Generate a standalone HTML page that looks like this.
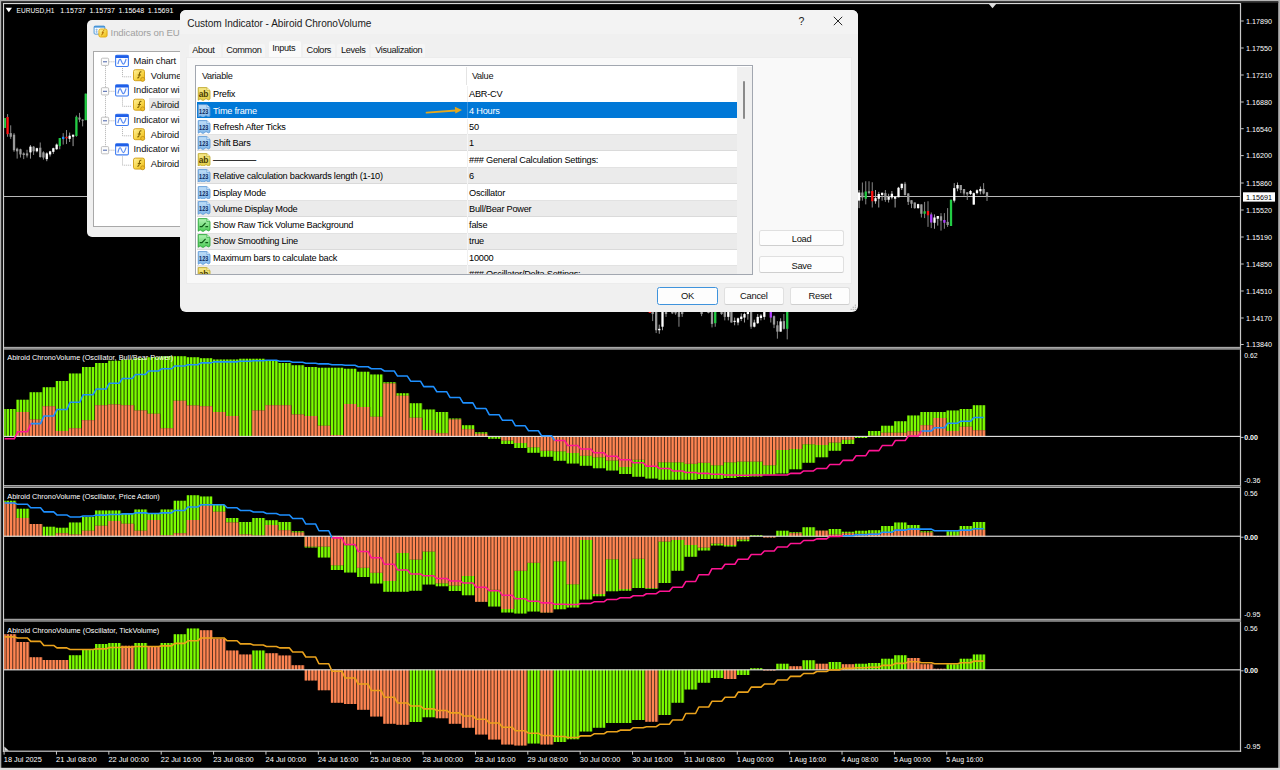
<!DOCTYPE html><html><head><meta charset="utf-8"><title>Abiroid ChronoVolume</title>
<style>
html,body{margin:0;padding:0;background:#000;}
body{width:1280px;height:770px;overflow:hidden;position:relative;font-family:"Liberation Sans", "DejaVu Sans", sans-serif;}
svg text{font-family:"Liberation Sans", "DejaVu Sans", sans-serif;}
.dlg{position:absolute;background:#f0f0f0;overflow:hidden;color:#000;}
.abs{position:absolute;}
.t{position:absolute;white-space:pre;line-height:1;}
#d1{left:87px;top:19.8px;width:120px;height:217px;border-radius:5px 0 0 5px;}
#d1 .ttl{left:23.6px;top:8.6px;font-size:9.6px;letter-spacing:-0.12px;color:#a0a0a0;}
#d1 .tree{left:6px;top:31.6px;width:130px;height:176px;background:#fff;border:1px solid #a9a9a9;box-sizing:border-box;}
#d1 .tr{font-size:9.4px;letter-spacing:-0.13px;color:#111;}
#d2{left:180px;top:9.8px;width:677.9px;height:302px;border-radius:6px;}
#d2 .tbar{left:0;top:0;width:100%;height:24.2px;background:#f3f3f3;}
#d2 .ttl{left:7.2px;top:9.3px;font-size:10.1px;letter-spacing:-0.04px;color:#1a1a1a;}
#d2 .tab{background:#f5f5f5;top:34px;height:14px;border-radius:2px 2px 0 0;}
#d2 .tabt{font-size:9.2px;letter-spacing:-0.34px;color:#111;top:34.8px;}
#d2 .page{left:6.3px;top:47.4px;width:665.6px;height:227.2px;background:#f9f9f9;border:1px solid #ececec;box-sizing:border-box;}
#d2 .list{left:15.3px;top:55.5px;width:557.5px;height:210.2px;background:#fff;border:1px solid #a2a7b0;box-sizing:border-box;overflow:hidden;}
#d2 .row{position:absolute;left:1px;width:539.6px;height:16.36px;}
#d2 .row.g{background:#ebebeb;margin-top:-0.5px;height:16.9px;}
#d2 .row.s{background:#0078d7;color:#fff;height:15.5px;}
#d2 .row .t{font-size:9.2px;letter-spacing:-0.24px;top:4.7px;}
#d2 .hd{font-size:9.2px;letter-spacing:-0.3px;top:5.6px;color:#111;}
#d2 .sb{left:540.6px;top:0.5px;width:15px;height:208px;background:#f0f0f0;}
#d2 .btn{position:absolute;background:#fdfdfd;border:1px solid #e0e0e0;border-bottom-color:#cfcfcf;border-radius:2.5px;box-sizing:border-box;font-size:9.4px;letter-spacing:-0.3px;text-align:center;color:#111;}
#d2 .btn span{position:absolute;left:0;right:0;top:3.2px;line-height:1;}
.ic{position:absolute;left:-0.4px;top:1.6px;width:13.6px;height:13.6px;}

</style></head><body>
<svg width="1280" height="770" viewBox="0 0 1280 770" style="position:absolute;left:0;top:0">
<defs>
<clipPath id="c1"><rect x="4.2" y="349" width="1236" height="136"/></clipPath>
<clipPath id="c2"><rect x="4.2" y="488" width="1236" height="131"/></clipPath>
<clipPath id="c3"><rect x="4.2" y="622" width="1236" height="129"/></clipPath>
<clipPath id="c0"><rect x="4.2" y="4" width="1236" height="343"/></clipPath>
</defs>
<rect width="1280" height="770" fill="#000"/>
<rect x="0" y="0" width="1280" height="1.4" fill="#b4b4b4"/>
<rect x="0" y="0" width="1.3" height="770" fill="#b0b0b0"/>
<rect x="1278.2" y="0" width="1.8" height="770" fill="#b0b0b0"/>
<rect x="0" y="767.8" width="1280" height="2.2" fill="#dcdcdc"/>
<rect x="1.3" y="1.4" width="1277" height="1.4" fill="#303030"/>
<rect x="2.9" y="3" width="1.2" height="749" fill="#d0d0d0"/>
<rect x="2.9" y="3" width="1238" height="1.1" fill="#d8d8d8"/>
<rect x="1239.9" y="3" width="1.2" height="749" fill="#c8c8c8"/>
<rect x="2.9" y="750.6" width="1238.2" height="1.2" fill="#c8c8c8"/>
<rect x="4" y="346.7" width="1236.5" height="0.3" fill="#505050"/>
<rect x="4" y="347" width="1236.5" height="1" fill="#a8a8a8"/>
<rect x="4" y="348" width="1236.5" height="1" fill="#8c8c8c"/>
<rect x="4" y="349" width="1236.5" height="0.9" fill="#787878"/>
<rect x="4" y="485" width="1236.5" height="1" fill="#a8a8a8"/>
<rect x="4" y="486" width="1236.5" height="1" fill="#6a6a6a"/>
<rect x="4" y="487" width="1236.5" height="1" fill="#b0b0b0"/>
<rect x="4" y="618.6" width="1236.5" height="0.4" fill="#606060"/>
<rect x="4" y="619" width="1236.5" height="1" fill="#a0a0a0"/>
<rect x="4" y="620" width="1236.5" height="1" fill="#808080"/>
<rect x="4" y="621" width="1236.5" height="1" fill="#707070"/>
<rect x="4" y="196" width="1236.5" height="1" fill="#b8b8b8"/>
<g clip-path="url(#c0)">
<path d="M4.89 118.07V127.94" stroke="#8e8e8e" stroke-width="0.95"/>
<rect x="3.74" y="118.07" width="2.3" height="9.88" fill="#22cc44"/>
<path d="M7.59 114.12V136.78" stroke="#8e8e8e" stroke-width="0.95"/>
<rect x="6.44" y="117.03" width="2.3" height="17.15" fill="#ff1010"/>
<path d="M10.71 125.34V138.86" stroke="#8e8e8e" stroke-width="0.95"/>
<rect x="9.56" y="133.14" width="2.3" height="3.64" fill="#9a9a9a"/>
<path d="M14.03 133.14V151.85" stroke="#8e8e8e" stroke-width="0.95"/>
<rect x="12.88" y="134.7" width="2.3" height="15.59" fill="#9a9a9a"/>
<path d="M17.15 147.69V158.61" stroke="#8e8e8e" stroke-width="0.95"/>
<rect x="16" y="148.73" width="2.3" height="2.6" fill="#9a9a9a"/>
<path d="M20.48 148.73V157.57" stroke="#8e8e8e" stroke-width="0.95"/>
<rect x="19.33" y="149.25" width="2.3" height="5.2" fill="#9a9a9a"/>
<path d="M23.7 152.37V159.13" stroke="#8e8e8e" stroke-width="0.95"/>
<rect x="22.55" y="153.41" width="2.3" height="1.56" fill="#9a9a9a"/>
<path d="M27.03 149.77V157.57" stroke="#8e8e8e" stroke-width="0.95"/>
<rect x="25.88" y="153.41" width="2.3" height="2.08" fill="#9a9a9a"/>
<path d="M30.46 145.09V158.61" stroke="#a8a8a8" stroke-width="0.95"/>
<rect x="29.31" y="146.65" width="2.3" height="5.72" fill="#ffffff"/>
<path d="M33.58 146.13V154.97" stroke="#8e8e8e" stroke-width="0.95"/>
<rect x="32.43" y="146.65" width="2.3" height="4.68" fill="#9a9a9a"/>
<path d="M36.9 147.69V152.37" stroke="#a8a8a8" stroke-width="0.95"/>
<rect x="35.75" y="148.21" width="2.3" height="3.12" fill="#ffffff"/>
<path d="M40.23 142.49V157.57" stroke="#8e8e8e" stroke-width="0.95"/>
<rect x="39.08" y="147.69" width="2.3" height="9.36" fill="#9a9a9a"/>
<path d="M43.45 151.33V159.65" stroke="#8e8e8e" stroke-width="0.95"/>
<rect x="42.3" y="152.37" width="2.3" height="5.2" fill="#9a9a9a"/>
<path d="M46.78 152.37V161.21" stroke="#a8a8a8" stroke-width="0.95"/>
<rect x="45.63" y="153.41" width="2.3" height="5.72" fill="#ffffff"/>
<path d="M50.1 150.81V156.53" stroke="#a8a8a8" stroke-width="0.95"/>
<rect x="48.95" y="151.33" width="2.3" height="3.12" fill="#ffffff"/>
<path d="M53.33 147.69V153.93" stroke="#a8a8a8" stroke-width="0.95"/>
<rect x="52.18" y="148.21" width="2.3" height="3.64" fill="#ffffff"/>
<path d="M56.65 143.53V149.77" stroke="#a8a8a8" stroke-width="0.95"/>
<rect x="55.5" y="144.57" width="2.3" height="4.68" fill="#ffffff"/>
<path d="M59.77 138.02V149.25" stroke="#8e8e8e" stroke-width="0.95"/>
<rect x="58.62" y="138.02" width="2.3" height="8.11" fill="#22cc44"/>
<path d="M63.2 133.14V144.57" stroke="#8e8e8e" stroke-width="0.95"/>
<rect x="62.05" y="136.78" width="2.3" height="2.29" fill="#1e90ff"/>
<path d="M66.53 130.02V144.05" stroke="#8e8e8e" stroke-width="0.95"/>
<rect x="65.38" y="136.78" width="2.3" height="1.56" fill="#ff1010"/>
<path d="M69.65 132.62V141.98" stroke="#a8a8a8" stroke-width="0.95"/>
<rect x="68.5" y="135.74" width="2.3" height="3.12" fill="#ffffff"/>
<path d="M73.08 134.7V146.13" stroke="#a8a8a8" stroke-width="0.95"/>
<rect x="71.93" y="134.7" width="2.3" height="2.08" fill="#ffffff"/>
<path d="M76.4 115.47V136.78" stroke="#8e8e8e" stroke-width="0.95"/>
<rect x="75.25" y="116.82" width="2.3" height="19.13" fill="#22cc44"/>
<path d="M79.52 112.87V122.22" stroke="#8e8e8e" stroke-width="0.95"/>
<rect x="78.37" y="117.55" width="2.3" height="2.08" fill="#9a9a9a"/>
<path d="M82.64 119.11V126.38" stroke="#8e8e8e" stroke-width="0.95"/>
<rect x="81.49" y="119.63" width="2.3" height="1.04" fill="#9a9a9a"/>
<path d="M85.76 93.64V120.15" stroke="#8e8e8e" stroke-width="0.95"/>
<rect x="84.61" y="93.64" width="2.3" height="26.51" fill="#22cc44"/>
<path d="M859.12 190V208.12" stroke="#a8a8a8" stroke-width="0.95"/>
<rect x="857.98" y="192.5" width="2.3" height="8.12" fill="#ffffff"/>
<path d="M862.38 182.5V200.62" stroke="#8e8e8e" stroke-width="0.95"/>
<rect x="861.23" y="192.5" width="2.3" height="5" fill="#9a9a9a"/>
<path d="M865.75 181.25V204.38" stroke="#8e8e8e" stroke-width="0.95"/>
<rect x="864.6" y="191.5" width="2.3" height="7.25" fill="#22cc44"/>
<path d="M869 181.25V194.38" stroke="#8e8e8e" stroke-width="0.95"/>
<rect x="867.85" y="191.25" width="2.3" height="1.88" fill="#9a9a9a"/>
<path d="M872.25 182.25V207.5" stroke="#8e8e8e" stroke-width="0.95"/>
<rect x="871.1" y="191" width="2.3" height="10.25" fill="#ff1010"/>
<path d="M875.5 190V203.75" stroke="#a8a8a8" stroke-width="0.95"/>
<rect x="874.35" y="198.12" width="2.3" height="3.12" fill="#ffffff"/>
<path d="M878.75 191.88V207.5" stroke="#a8a8a8" stroke-width="0.95"/>
<rect x="877.6" y="194" width="2.3" height="4.75" fill="#ffffff"/>
<path d="M882.12 192.75V200.62" stroke="#a8a8a8" stroke-width="0.95"/>
<rect x="880.98" y="192.75" width="2.3" height="2.25" fill="#ffffff"/>
<path d="M885.38 190V201.88" stroke="#8e8e8e" stroke-width="0.95"/>
<rect x="884.23" y="193.12" width="2.3" height="6.88" fill="#9a9a9a"/>
<path d="M888.62 193.75V202.5" stroke="#a8a8a8" stroke-width="0.95"/>
<rect x="887.48" y="196.88" width="2.3" height="2.88" fill="#ffffff"/>
<path d="M891.88 191V199.38" stroke="#a8a8a8" stroke-width="0.95"/>
<rect x="890.73" y="193.75" width="2.3" height="3.75" fill="#ffffff"/>
<path d="M895.12 196.62V207.5" stroke="#a8a8a8" stroke-width="0.95"/>
<rect x="893.98" y="196.62" width="2.3" height="2.12" fill="#ffffff"/>
<path d="M898.5 186.88V197.25" stroke="#a8a8a8" stroke-width="0.95"/>
<rect x="897.35" y="187.75" width="2.3" height="9.5" fill="#ffffff"/>
<path d="M901.75 183.75V190" stroke="#a8a8a8" stroke-width="0.95"/>
<rect x="900.6" y="183.75" width="2.3" height="4.38" fill="#ffffff"/>
<path d="M905 181.88V195.62" stroke="#8e8e8e" stroke-width="0.95"/>
<rect x="903.85" y="183.75" width="2.3" height="11.25" fill="#9a9a9a"/>
<path d="M908.25 193.12V205" stroke="#8e8e8e" stroke-width="0.95"/>
<rect x="907.1" y="193.5" width="2.3" height="8.38" fill="#9a9a9a"/>
<path d="M911.5 200.25V208.12" stroke="#8e8e8e" stroke-width="0.95"/>
<rect x="910.35" y="200.25" width="2.3" height="3.5" fill="#9a9a9a"/>
<path d="M914.75 202.5V208.75" stroke="#8e8e8e" stroke-width="0.95"/>
<rect x="913.6" y="202.5" width="2.3" height="5.62" fill="#9a9a9a"/>
<path d="M918.12 203.75V208.75" stroke="#a8a8a8" stroke-width="0.95"/>
<rect x="916.98" y="204.12" width="2.3" height="4" fill="#ffffff"/>
<path d="M921.38 204.38V217.5" stroke="#8e8e8e" stroke-width="0.95"/>
<rect x="920.23" y="204.38" width="2.3" height="9.38" fill="#9a9a9a"/>
<path d="M924.62 201.88V218.12" stroke="#8e8e8e" stroke-width="0.95"/>
<rect x="923.48" y="211.25" width="2.3" height="2.5" fill="#22cc44"/>
<path d="M928 201.25V226.88" stroke="#8e8e8e" stroke-width="0.95"/>
<rect x="926.85" y="211" width="2.3" height="4.25" fill="#ff1010"/>
<path d="M931.25 212.5V228.12" stroke="#8e8e8e" stroke-width="0.95"/>
<rect x="930.1" y="214.38" width="2.3" height="8.12" fill="#b040ff"/>
<path d="M934.5 214.38V228.75" stroke="#a8a8a8" stroke-width="0.95"/>
<rect x="933.35" y="217.5" width="2.3" height="5.25" fill="#ffffff"/>
<path d="M937.75 216V225.62" stroke="#a8a8a8" stroke-width="0.95"/>
<rect x="936.6" y="216" width="2.3" height="2.75" fill="#ffffff"/>
<path d="M941 213.12V230.62" stroke="#8e8e8e" stroke-width="0.95"/>
<rect x="939.85" y="216.25" width="2.3" height="4.38" fill="#9a9a9a"/>
<path d="M944.38 213.12V228.75" stroke="#8e8e8e" stroke-width="0.95"/>
<rect x="943.23" y="220" width="2.3" height="2.75" fill="#b040ff"/>
<path d="M947.62 208.12V226.88" stroke="#8e8e8e" stroke-width="0.95"/>
<rect x="946.48" y="221.88" width="2.3" height="3.12" fill="#9a9a9a"/>
<path d="M951 199.75V226" stroke="#8e8e8e" stroke-width="0.95"/>
<rect x="949.85" y="199.75" width="2.3" height="26.25" fill="#22cc44"/>
<path d="M954.25 183.12V202.5" stroke="#a8a8a8" stroke-width="0.95"/>
<rect x="953.1" y="188.12" width="2.3" height="12.5" fill="#ffffff"/>
<path d="M957.5 182.5V191.25" stroke="#a8a8a8" stroke-width="0.95"/>
<rect x="956.35" y="185" width="2.3" height="3.5" fill="#ffffff"/>
<path d="M960.75 185V193.12" stroke="#8e8e8e" stroke-width="0.95"/>
<rect x="959.6" y="185" width="2.3" height="5" fill="#9a9a9a"/>
<path d="M964 189V195.62" stroke="#8e8e8e" stroke-width="0.95"/>
<rect x="962.85" y="189" width="2.3" height="4.5" fill="#9a9a9a"/>
<path d="M967.25 192.25V200" stroke="#8e8e8e" stroke-width="0.95"/>
<rect x="966.1" y="192.25" width="2.3" height="2.12" fill="#9a9a9a"/>
<path d="M970.5 190V195" stroke="#a8a8a8" stroke-width="0.95"/>
<rect x="969.35" y="191" width="2.3" height="3" fill="#ffffff"/>
<path d="M973.75 192.5V204.62" stroke="#a8a8a8" stroke-width="0.95"/>
<rect x="972.6" y="193.12" width="2.3" height="11.5" fill="#ffffff"/>
<path d="M977 189.38V194.38" stroke="#a8a8a8" stroke-width="0.95"/>
<rect x="975.85" y="190.25" width="2.3" height="2.88" fill="#ffffff"/>
<path d="M980.38 186.5V194.38" stroke="#a8a8a8" stroke-width="0.95"/>
<rect x="979.23" y="189" width="2.3" height="2.25" fill="#ffffff"/>
<path d="M983.62 183.12V194.38" stroke="#8e8e8e" stroke-width="0.95"/>
<rect x="982.48" y="189" width="2.3" height="4.5" fill="#9a9a9a"/>
<path d="M987 192.25V201" stroke="#8e8e8e" stroke-width="0.95"/>
<rect x="985.85" y="192.25" width="2.3" height="4" fill="#9a9a9a"/>
<path d="M649.84 311.25V312.94" stroke="#8e8e8e" stroke-width="0.95"/>
<rect x="648.69" y="311.25" width="2.3" height="1.69" fill="#ff1010"/>
<path d="M652.66 311.25V321.09" stroke="#8e8e8e" stroke-width="0.95"/>
<rect x="651.51" y="311.25" width="2.3" height="2.81" fill="#9a9a9a"/>
<path d="M656.17 311.25V333.05" stroke="#8e8e8e" stroke-width="0.95"/>
<rect x="655.02" y="311.25" width="2.3" height="18.98" fill="#9a9a9a"/>
<path d="M659.27 324.61V333.75" stroke="#a8a8a8" stroke-width="0.95"/>
<rect x="658.12" y="328.83" width="2.3" height="1.41" fill="#ffffff"/>
<path d="M662.5 311.25V330.23" stroke="#a8a8a8" stroke-width="0.95"/>
<rect x="661.35" y="311.25" width="2.3" height="15.47" fill="#ffffff"/>
<path d="M666.02 311.25V316.88" stroke="#8e8e8e" stroke-width="0.95"/>
<rect x="664.87" y="311.25" width="2.3" height="2.81" fill="#9a9a9a"/>
<path d="M672.34 311.25V314.06" stroke="#8e8e8e" stroke-width="0.95"/>
<rect x="671.19" y="311.25" width="2.3" height="2.11" fill="#9a9a9a"/>
<path d="M675.58 311.25V314.77" stroke="#8e8e8e" stroke-width="0.95"/>
<rect x="674.43" y="311.25" width="2.3" height="2.11" fill="#9a9a9a"/>
<path d="M678.95 311.25V326.72" stroke="#8e8e8e" stroke-width="0.95"/>
<rect x="677.8" y="311.25" width="2.3" height="5.62" fill="#9a9a9a"/>
<path d="M682.19 311.25V316.88" stroke="#8e8e8e" stroke-width="0.95"/>
<rect x="681.04" y="311.25" width="2.3" height="2.81" fill="#9a9a9a"/>
<path d="M701.59 311.25V316.17" stroke="#8e8e8e" stroke-width="0.95"/>
<rect x="700.44" y="311.25" width="2.3" height="2.81" fill="#9a9a9a"/>
<path d="M708.48 311.25V313.36" stroke="#8e8e8e" stroke-width="0.95"/>
<rect x="707.33" y="311.25" width="2.3" height="1.69" fill="#9a9a9a"/>
<path d="M712 311.25V327.42" stroke="#8e8e8e" stroke-width="0.95"/>
<rect x="710.85" y="311.25" width="2.3" height="12.66" fill="#9a9a9a"/>
<path d="M715.23 311.25V326.72" stroke="#8e8e8e" stroke-width="0.95"/>
<rect x="714.08" y="311.25" width="2.3" height="11.95" fill="#22cc44"/>
<path d="M721.56 311.25V314.77" stroke="#8e8e8e" stroke-width="0.95"/>
<rect x="720.41" y="311.25" width="2.3" height="2.81" fill="#9a9a9a"/>
<path d="M724.8 311.25V320.39" stroke="#8e8e8e" stroke-width="0.95"/>
<rect x="723.65" y="311.25" width="2.3" height="5.62" fill="#9a9a9a"/>
<path d="M728.31 311.25V320.39" stroke="#a8a8a8" stroke-width="0.95"/>
<rect x="727.16" y="311.25" width="2.3" height="5.62" fill="#ffffff"/>
<path d="M731.41 311.25V322.5" stroke="#8e8e8e" stroke-width="0.95"/>
<rect x="730.26" y="311.25" width="2.3" height="11.25" fill="#9a9a9a"/>
<path d="M734.64 317.58V325.31" stroke="#a8a8a8" stroke-width="0.95"/>
<rect x="733.49" y="320.81" width="2.3" height="1.12" fill="#ffffff"/>
<path d="M738.02 317.58V325.31" stroke="#a8a8a8" stroke-width="0.95"/>
<rect x="736.87" y="318.28" width="2.3" height="4.22" fill="#ffffff"/>
<path d="M741.25 313.36V321.09" stroke="#a8a8a8" stroke-width="0.95"/>
<rect x="740.1" y="316.59" width="2.3" height="2.39" fill="#ffffff"/>
<path d="M744.48 312.66V322.5" stroke="#a8a8a8" stroke-width="0.95"/>
<rect x="743.33" y="314.06" width="2.3" height="3.52" fill="#ffffff"/>
<path d="M747.86 311.25V319.69" stroke="#a8a8a8" stroke-width="0.95"/>
<rect x="746.71" y="311.25" width="2.3" height="2.81" fill="#ffffff"/>
<path d="M751.09 311.25V328.83" stroke="#8e8e8e" stroke-width="0.95"/>
<rect x="749.94" y="311.25" width="2.3" height="15.47" fill="#9a9a9a"/>
<path d="M754.33 319.69V327.42" stroke="#a8a8a8" stroke-width="0.95"/>
<rect x="753.18" y="322.5" width="2.3" height="4.22" fill="#ffffff"/>
<path d="M757.7 314.06V323.91" stroke="#a8a8a8" stroke-width="0.95"/>
<rect x="756.55" y="316.88" width="2.3" height="6.33" fill="#ffffff"/>
<path d="M760.94 314.06V320.39" stroke="#a8a8a8" stroke-width="0.95"/>
<rect x="759.79" y="315.47" width="2.3" height="2.53" fill="#ffffff"/>
<path d="M764.31 311.25V319.69" stroke="#a8a8a8" stroke-width="0.95"/>
<rect x="763.16" y="311.25" width="2.3" height="5.62" fill="#ffffff"/>
<path d="M770.78 311.25V322.5" stroke="#8e8e8e" stroke-width="0.95"/>
<rect x="769.63" y="311.25" width="2.3" height="6.33" fill="#b040ff"/>
<path d="M774.02 315.47V328.12" stroke="#8e8e8e" stroke-width="0.95"/>
<rect x="772.87" y="316.17" width="2.3" height="8.44" fill="#9a9a9a"/>
<path d="M777.39 321.09V338.67" stroke="#8e8e8e" stroke-width="0.95"/>
<rect x="776.24" y="325.31" width="2.3" height="6.33" fill="#9a9a9a"/>
<path d="M780.62 318.28V331.64" stroke="#a8a8a8" stroke-width="0.95"/>
<rect x="779.48" y="321.38" width="2.3" height="10.27" fill="#ffffff"/>
<path d="M783.86 314.06V329.53" stroke="#8e8e8e" stroke-width="0.95"/>
<rect x="782.71" y="321.09" width="2.3" height="7.73" fill="#9a9a9a"/>
<path d="M787.23 311.25V339.38" stroke="#8e8e8e" stroke-width="0.95"/>
<rect x="786.08" y="311.25" width="2.3" height="17.58" fill="#22cc44"/>
</g>
<path d="M5.6 7.8h6.4l-3.2 4.4z" fill="#fff"/>
<text x="16.6" y="13.1" font-size="7.7" fill="#fff" textLength="37.8" lengthAdjust="spacingAndGlyphs">EURUSD,H1</text>
<text x="60.2" y="13.1" font-size="7.7" fill="#fff" textLength="25.6" lengthAdjust="spacingAndGlyphs">1.15737</text>
<text x="89.4" y="13.1" font-size="7.7" fill="#fff" textLength="25.6" lengthAdjust="spacingAndGlyphs">1.15737</text>
<text x="118.6" y="13.1" font-size="7.7" fill="#fff" textLength="25.6" lengthAdjust="spacingAndGlyphs">1.15648</text>
<text x="147.8" y="13.1" font-size="7.7" fill="#fff" textLength="25.6" lengthAdjust="spacingAndGlyphs">1.15691</text>
<path d="M988.5 3.6h8l-4 4.6z" fill="#dedede"/>
<rect x="1241.1" y="20.5" width="2.6" height="1" fill="#c8c8c8"/>
<text x="1246" y="23.8" font-size="7.8" fill="#fff" textLength="26" lengthAdjust="spacingAndGlyphs">1.17890</text>
<rect x="1241.1" y="47.5" width="2.6" height="1" fill="#c8c8c8"/>
<text x="1246" y="50.8" font-size="7.8" fill="#fff" textLength="26" lengthAdjust="spacingAndGlyphs">1.17550</text>
<rect x="1241.1" y="74.5" width="2.6" height="1" fill="#c8c8c8"/>
<text x="1246" y="77.8" font-size="7.8" fill="#fff" textLength="26" lengthAdjust="spacingAndGlyphs">1.17210</text>
<rect x="1241.1" y="101.5" width="2.6" height="1" fill="#c8c8c8"/>
<text x="1246" y="104.8" font-size="7.8" fill="#fff" textLength="26" lengthAdjust="spacingAndGlyphs">1.16880</text>
<rect x="1241.1" y="128.2" width="2.6" height="1" fill="#c8c8c8"/>
<text x="1246" y="131.5" font-size="7.8" fill="#fff" textLength="26" lengthAdjust="spacingAndGlyphs">1.16540</text>
<rect x="1241.1" y="155.1" width="2.6" height="1" fill="#c8c8c8"/>
<text x="1246" y="158.4" font-size="7.8" fill="#fff" textLength="26" lengthAdjust="spacingAndGlyphs">1.16200</text>
<rect x="1241.1" y="182.5" width="2.6" height="1" fill="#c8c8c8"/>
<text x="1246" y="185.8" font-size="7.8" fill="#fff" textLength="26" lengthAdjust="spacingAndGlyphs">1.15860</text>
<rect x="1241.1" y="209.5" width="2.6" height="1" fill="#c8c8c8"/>
<text x="1246" y="212.8" font-size="7.8" fill="#fff" textLength="26" lengthAdjust="spacingAndGlyphs">1.15520</text>
<rect x="1241.1" y="236.5" width="2.6" height="1" fill="#c8c8c8"/>
<text x="1246" y="239.8" font-size="7.8" fill="#fff" textLength="26" lengthAdjust="spacingAndGlyphs">1.15190</text>
<rect x="1241.1" y="263.5" width="2.6" height="1" fill="#c8c8c8"/>
<text x="1246" y="266.8" font-size="7.8" fill="#fff" textLength="26" lengthAdjust="spacingAndGlyphs">1.14850</text>
<rect x="1241.1" y="290.5" width="2.6" height="1" fill="#c8c8c8"/>
<text x="1246" y="293.8" font-size="7.8" fill="#fff" textLength="26" lengthAdjust="spacingAndGlyphs">1.14510</text>
<rect x="1241.1" y="317.5" width="2.6" height="1" fill="#c8c8c8"/>
<text x="1246" y="320.8" font-size="7.8" fill="#fff" textLength="26" lengthAdjust="spacingAndGlyphs">1.14170</text>
<rect x="1241.1" y="344" width="2.6" height="1" fill="#c8c8c8"/>
<text x="1246" y="347.3" font-size="7.8" fill="#fff" textLength="26" lengthAdjust="spacingAndGlyphs">1.13840</text>
<rect x="1243" y="192.3" width="32" height="9.3" fill="#fff"/>
<text x="1246" y="199.8" font-size="7.8" fill="#000" textLength="26" lengthAdjust="spacingAndGlyphs">1.15691</text>
<g clip-path="url(#c1)"><path fill="#1f3e00" d="M3.39 408.98h3.29v27.42h-3.29zM6.66 408.98h3.29v27.42h-3.29zM9.94 408.98h3.29v27.42h-3.29zM13.21 408.98h3.29v27.42h-3.29zM16.49 399.84h3.29v36.56h-3.29zM19.76 399.84h3.29v36.56h-3.29zM23.04 399.84h3.29v36.56h-3.29zM26.31 399.84h3.29v36.56h-3.29zM29.59 392.33h3.29v44.08h-3.29zM32.86 392.33h3.29v44.08h-3.29zM36.14 392.33h3.29v44.08h-3.29zM39.41 392.33h3.29v44.08h-3.29zM42.69 387.25h3.29v49.16h-3.29zM45.96 387.25h3.29v49.16h-3.29zM49.24 387.25h3.29v49.16h-3.29zM52.51 387.25h3.29v49.16h-3.29zM55.79 380.95h3.29v55.45h-3.29zM59.06 380.95h3.29v55.45h-3.29zM62.34 380.95h3.29v55.45h-3.29zM65.61 380.95h3.29v55.45h-3.29zM68.89 373.44h3.29v62.97h-3.29zM72.16 373.44h3.29v62.97h-3.29zM75.44 373.44h3.29v62.97h-3.29zM78.71 373.44h3.29v62.97h-3.29zM81.99 366.94h3.29v69.47h-3.29zM85.26 366.94h3.29v69.47h-3.29zM88.54 366.94h3.29v69.47h-3.29zM91.81 366.94h3.29v69.47h-3.29zM95.09 362.88h3.29v73.53h-3.29zM98.36 362.88h3.29v73.53h-3.29zM101.64 362.88h3.29v73.53h-3.29zM104.91 362.88h3.29v73.53h-3.29zM108.19 360.64h3.29v75.77h-3.29zM111.46 360.64h3.29v75.77h-3.29zM114.74 360.64h3.29v75.77h-3.29zM118.01 360.64h3.29v75.77h-3.29zM121.29 359.62h3.29v76.78h-3.29zM124.56 359.62h3.29v76.78h-3.29zM127.84 359.62h3.29v76.78h-3.29zM131.11 359.62h3.29v76.78h-3.29zM134.39 358.2h3.29v78.2h-3.29zM137.66 358.2h3.29v78.2h-3.29zM140.94 358.2h3.29v78.2h-3.29zM144.21 358.2h3.29v78.2h-3.29zM147.49 357.19h3.29v79.22h-3.29zM150.76 357.19h3.29v79.22h-3.29zM154.04 357.19h3.29v79.22h-3.29zM157.31 357.19h3.29v79.22h-3.29zM160.59 356.17h3.29v80.23h-3.29zM163.86 356.17h3.29v80.23h-3.29zM167.14 356.17h3.29v80.23h-3.29zM170.41 356.17h3.29v80.23h-3.29zM173.69 356.17h3.29v80.23h-3.29zM176.96 356.17h3.29v80.23h-3.29zM180.24 356.17h3.29v80.23h-3.29zM183.51 356.17h3.29v80.23h-3.29zM186.79 357.19h3.29v79.22h-3.29zM190.06 357.19h3.29v79.22h-3.29zM193.34 357.19h3.29v79.22h-3.29zM196.61 357.19h3.29v79.22h-3.29zM199.89 358.2h3.29v78.2h-3.29zM203.16 358.2h3.29v78.2h-3.29zM206.44 358.2h3.29v78.2h-3.29zM209.71 358.2h3.29v78.2h-3.29zM212.99 359.62h3.29v76.78h-3.29zM216.26 359.62h3.29v76.78h-3.29zM219.54 359.62h3.29v76.78h-3.29zM222.81 359.62h3.29v76.78h-3.29zM226.09 359.62h3.29v76.78h-3.29zM229.36 359.62h3.29v76.78h-3.29zM232.64 359.62h3.29v76.78h-3.29zM235.91 359.62h3.29v76.78h-3.29zM239.19 358.81h3.29v77.59h-3.29zM242.46 358.81h3.29v77.59h-3.29zM245.74 358.81h3.29v77.59h-3.29zM249.01 358.81h3.29v77.59h-3.29zM252.29 358.81h3.29v77.59h-3.29zM255.56 358.81h3.29v77.59h-3.29zM258.84 358.81h3.29v77.59h-3.29zM262.11 358.81h3.29v77.59h-3.29zM265.39 360.23h3.29v76.17h-3.29zM268.66 360.23h3.29v76.17h-3.29zM271.94 360.23h3.29v76.17h-3.29zM275.21 360.23h3.29v76.17h-3.29zM278.49 362.88h3.29v73.53h-3.29zM281.76 362.88h3.29v73.53h-3.29zM285.04 362.88h3.29v73.53h-3.29zM288.31 362.88h3.29v73.53h-3.29zM291.59 365.31h3.29v71.09h-3.29zM294.86 365.31h3.29v71.09h-3.29zM298.14 365.31h3.29v71.09h-3.29zM301.41 365.31h3.29v71.09h-3.29zM304.69 366.94h3.29v69.47h-3.29zM307.96 366.94h3.29v69.47h-3.29zM311.24 366.94h3.29v69.47h-3.29zM314.51 366.94h3.29v69.47h-3.29zM317.79 367.75h3.29v68.66h-3.29zM321.06 367.75h3.29v68.66h-3.29zM324.34 367.75h3.29v68.66h-3.29zM327.61 367.75h3.29v68.66h-3.29zM330.89 367.75h3.29v68.66h-3.29zM334.16 367.75h3.29v68.66h-3.29zM337.44 367.75h3.29v68.66h-3.29zM340.71 367.75h3.29v68.66h-3.29zM343.99 368.77h3.29v67.64h-3.29zM347.26 368.77h3.29v67.64h-3.29zM350.54 368.77h3.29v67.64h-3.29zM353.81 368.77h3.29v67.64h-3.29zM357.09 371.81h3.29v64.59h-3.29zM360.36 371.81h3.29v64.59h-3.29zM363.64 371.81h3.29v64.59h-3.29zM366.91 371.81h3.29v64.59h-3.29zM370.19 374.45h3.29v61.95h-3.29zM373.46 374.45h3.29v61.95h-3.29zM376.74 374.45h3.29v61.95h-3.29zM380.01 374.45h3.29v61.95h-3.29zM383.29 382.17h3.29v54.23h-3.29zM386.56 382.17h3.29v54.23h-3.29zM389.84 382.17h3.29v54.23h-3.29zM393.11 382.17h3.29v54.23h-3.29zM396.39 393.34h3.29v43.06h-3.29zM399.66 393.34h3.29v43.06h-3.29zM402.94 393.34h3.29v43.06h-3.29zM406.21 393.34h3.29v43.06h-3.29zM409.49 403.3h3.29v33.11h-3.29zM412.76 403.3h3.29v33.11h-3.29zM416.04 403.3h3.29v33.11h-3.29zM419.31 403.3h3.29v33.11h-3.29zM422.59 409.59h3.29v26.81h-3.29zM425.86 409.59h3.29v26.81h-3.29zM429.14 409.59h3.29v26.81h-3.29zM432.41 409.59h3.29v26.81h-3.29zM435.69 412.03h3.29v24.38h-3.29zM438.96 412.03h3.29v24.38h-3.29zM442.24 412.03h3.29v24.38h-3.29zM445.51 412.03h3.29v24.38h-3.29zM448.79 418.53h3.29v17.88h-3.29zM452.06 418.53h3.29v17.88h-3.29zM455.34 418.53h3.29v17.88h-3.29zM458.61 418.53h3.29v17.88h-3.29zM461.89 425.23h3.29v11.17h-3.29zM465.16 425.23h3.29v11.17h-3.29zM468.44 425.23h3.29v11.17h-3.29zM471.71 425.23h3.29v11.17h-3.29zM474.99 432.34h3.29v4.06h-3.29zM478.26 432.34h3.29v4.06h-3.29zM481.54 432.34h3.29v4.06h-3.29zM484.81 432.34h3.29v4.06h-3.29zM488.09 436.41h3.29v2.44h-3.29zM491.36 436.41h3.29v2.44h-3.29zM494.64 436.41h3.29v2.44h-3.29zM497.91 436.41h3.29v2.44h-3.29zM501.19 436.41h3.29v7.52h-3.29zM504.46 436.41h3.29v7.52h-3.29zM507.74 436.41h3.29v7.52h-3.29zM511.01 436.41h3.29v7.52h-3.29zM514.29 436.41h3.29v11.58h-3.29zM517.56 436.41h3.29v11.58h-3.29zM520.84 436.41h3.29v11.58h-3.29zM524.11 436.41h3.29v11.58h-3.29zM527.39 436.41h3.29v16.25h-3.29zM530.66 436.41h3.29v16.25h-3.29zM533.94 436.41h3.29v16.25h-3.29zM537.21 436.41h3.29v16.25h-3.29zM540.49 436.41h3.29v20.31h-3.29zM543.76 436.41h3.29v20.31h-3.29zM547.04 436.41h3.29v20.31h-3.29zM550.31 436.41h3.29v20.31h-3.29zM553.59 436.41h3.29v24.38h-3.29zM556.86 436.41h3.29v24.38h-3.29zM560.14 436.41h3.29v24.38h-3.29zM563.41 436.41h3.29v24.38h-3.29zM566.69 436.41h3.29v27.02h-3.29zM569.96 436.41h3.29v27.02h-3.29zM573.24 436.41h3.29v27.02h-3.29zM576.51 436.41h3.29v27.02h-3.29zM579.79 436.41h3.29v29.45h-3.29zM583.06 436.41h3.29v29.45h-3.29zM586.34 436.41h3.29v29.45h-3.29zM589.61 436.41h3.29v29.45h-3.29zM592.89 436.41h3.29v31.89h-3.29zM596.16 436.41h3.29v31.89h-3.29zM599.44 436.41h3.29v31.89h-3.29zM602.71 436.41h3.29v31.89h-3.29zM605.99 436.41h3.29v34.12h-3.29zM609.26 436.41h3.29v34.12h-3.29zM612.54 436.41h3.29v34.12h-3.29zM615.81 436.41h3.29v34.12h-3.29zM619.09 436.41h3.29v37.58h-3.29zM622.36 436.41h3.29v37.58h-3.29zM625.64 436.41h3.29v37.58h-3.29zM628.91 436.41h3.29v37.58h-3.29zM632.19 436.41h3.29v40.22h-3.29zM635.46 436.41h3.29v40.22h-3.29zM638.74 436.41h3.29v40.22h-3.29zM642.01 436.41h3.29v40.22h-3.29zM645.29 436.41h3.29v42.05h-3.29zM648.56 436.41h3.29v42.05h-3.29zM651.84 436.41h3.29v42.05h-3.29zM655.11 436.41h3.29v42.05h-3.29zM658.39 436.41h3.29v43.27h-3.29zM661.66 436.41h3.29v43.27h-3.29zM664.94 436.41h3.29v43.27h-3.29zM668.21 436.41h3.29v43.27h-3.29zM671.49 436.41h3.29v43.27h-3.29zM674.76 436.41h3.29v43.27h-3.29zM678.04 436.41h3.29v43.27h-3.29zM681.31 436.41h3.29v43.27h-3.29zM684.59 436.41h3.29v43.27h-3.29zM687.86 436.41h3.29v43.27h-3.29zM691.14 436.41h3.29v43.27h-3.29zM694.41 436.41h3.29v43.27h-3.29zM697.69 436.41h3.29v42.66h-3.29zM700.96 436.41h3.29v42.66h-3.29zM704.24 436.41h3.29v42.66h-3.29zM707.51 436.41h3.29v42.66h-3.29zM710.79 436.41h3.29v42.25h-3.29zM714.06 436.41h3.29v42.25h-3.29zM717.34 436.41h3.29v42.25h-3.29zM720.61 436.41h3.29v42.25h-3.29zM723.89 436.41h3.29v41.64h-3.29zM727.16 436.41h3.29v41.64h-3.29zM730.44 436.41h3.29v41.64h-3.29zM733.71 436.41h3.29v41.64h-3.29zM736.99 436.41h3.29v40.62h-3.29zM740.26 436.41h3.29v40.62h-3.29zM743.54 436.41h3.29v40.62h-3.29zM746.81 436.41h3.29v40.62h-3.29zM750.09 436.41h3.29v40.02h-3.29zM753.36 436.41h3.29v40.02h-3.29zM756.64 436.41h3.29v40.02h-3.29zM759.91 436.41h3.29v40.02h-3.29zM763.19 436.41h3.29v37.98h-3.29zM766.46 436.41h3.29v37.98h-3.29zM769.74 436.41h3.29v37.98h-3.29zM773.01 436.41h3.29v37.98h-3.29zM776.29 436.41h3.29v36.97h-3.29zM779.56 436.41h3.29v36.97h-3.29zM782.84 436.41h3.29v36.97h-3.29zM786.11 436.41h3.29v36.97h-3.29zM789.39 436.41h3.29v32.91h-3.29zM792.66 436.41h3.29v32.91h-3.29zM795.94 436.41h3.29v32.91h-3.29zM799.21 436.41h3.29v32.91h-3.29zM802.49 436.41h3.29v26.41h-3.29zM805.76 436.41h3.29v26.41h-3.29zM809.04 436.41h3.29v26.41h-3.29zM812.31 436.41h3.29v26.41h-3.29zM815.59 436.41h3.29v20.72h-3.29zM818.86 436.41h3.29v20.72h-3.29zM822.14 436.41h3.29v20.72h-3.29zM825.41 436.41h3.29v20.72h-3.29zM828.69 436.41h3.29v14.22h-3.29zM831.96 436.41h3.29v14.22h-3.29zM835.24 436.41h3.29v14.22h-3.29zM838.51 436.41h3.29v14.22h-3.29zM841.79 436.41h3.29v7.52h-3.29zM845.06 436.41h3.29v7.52h-3.29zM848.34 436.41h3.29v7.52h-3.29zM851.61 436.41h3.29v7.52h-3.29zM854.89 436.41h3.29v1.62h-3.29zM858.16 436.41h3.29v1.62h-3.29zM861.44 436.41h3.29v1.62h-3.29zM864.71 436.41h3.29v1.62h-3.29zM867.99 430.92h3.29v5.48h-3.29zM871.26 430.92h3.29v5.48h-3.29zM874.54 430.92h3.29v5.48h-3.29zM877.81 430.92h3.29v5.48h-3.29zM881.09 425.84h3.29v10.56h-3.29zM884.36 425.84h3.29v10.56h-3.29zM887.64 425.84h3.29v10.56h-3.29zM890.91 425.84h3.29v10.56h-3.29zM894.19 421.17h3.29v15.23h-3.29zM897.46 421.17h3.29v15.23h-3.29zM900.74 421.17h3.29v15.23h-3.29zM904.01 421.17h3.29v15.23h-3.29zM907.29 415.48h3.29v20.92h-3.29zM910.56 415.48h3.29v20.92h-3.29zM913.84 415.48h3.29v20.92h-3.29zM917.11 415.48h3.29v20.92h-3.29zM920.39 412.03h3.29v24.38h-3.29zM923.66 412.03h3.29v24.38h-3.29zM926.94 412.03h3.29v24.38h-3.29zM930.21 412.03h3.29v24.38h-3.29zM933.49 412.03h3.29v24.38h-3.29zM936.76 412.03h3.29v24.38h-3.29zM940.04 412.03h3.29v24.38h-3.29zM943.31 412.03h3.29v24.38h-3.29zM946.59 410.41h3.29v26h-3.29zM949.86 410.41h3.29v26h-3.29zM953.14 410.41h3.29v26h-3.29zM956.41 410.41h3.29v26h-3.29zM959.69 408.98h3.29v27.42h-3.29zM962.96 408.98h3.29v27.42h-3.29zM966.24 408.98h3.29v27.42h-3.29zM969.51 408.98h3.29v27.42h-3.29zM972.79 405.33h3.29v31.08h-3.29zM976.06 405.33h3.29v31.08h-3.29zM979.34 405.33h3.29v31.08h-3.29zM982.61 405.33h3.29v31.08h-3.29z"/><path fill="#7cfc00" d="M3.39 408.98h2.3v27.42h-2.3zM6.66 408.98h2.3v27.42h-2.3zM9.94 408.98h2.3v27.42h-2.3zM13.21 408.98h2.3v27.42h-2.3zM16.49 399.84h2.3v36.56h-2.3zM19.76 399.84h2.3v36.56h-2.3zM23.04 399.84h2.3v36.56h-2.3zM26.31 399.84h2.3v36.56h-2.3zM29.59 392.33h2.3v44.08h-2.3zM32.86 392.33h2.3v44.08h-2.3zM36.14 392.33h2.3v44.08h-2.3zM39.41 392.33h2.3v44.08h-2.3zM42.69 387.25h2.3v49.16h-2.3zM45.96 387.25h2.3v49.16h-2.3zM49.24 387.25h2.3v49.16h-2.3zM52.51 387.25h2.3v49.16h-2.3zM55.79 380.95h2.3v55.45h-2.3zM59.06 380.95h2.3v55.45h-2.3zM62.34 380.95h2.3v55.45h-2.3zM65.61 380.95h2.3v55.45h-2.3zM68.89 373.44h2.3v62.97h-2.3zM72.16 373.44h2.3v62.97h-2.3zM75.44 373.44h2.3v62.97h-2.3zM78.71 373.44h2.3v62.97h-2.3zM81.99 366.94h2.3v69.47h-2.3zM85.26 366.94h2.3v69.47h-2.3zM88.54 366.94h2.3v69.47h-2.3zM91.81 366.94h2.3v69.47h-2.3zM95.09 362.88h2.3v73.53h-2.3zM98.36 362.88h2.3v73.53h-2.3zM101.64 362.88h2.3v73.53h-2.3zM104.91 362.88h2.3v73.53h-2.3zM108.19 360.64h2.3v75.77h-2.3zM111.46 360.64h2.3v75.77h-2.3zM114.74 360.64h2.3v75.77h-2.3zM118.01 360.64h2.3v75.77h-2.3zM121.29 359.62h2.3v76.78h-2.3zM124.56 359.62h2.3v76.78h-2.3zM127.84 359.62h2.3v76.78h-2.3zM131.11 359.62h2.3v76.78h-2.3zM134.39 358.2h2.3v78.2h-2.3zM137.66 358.2h2.3v78.2h-2.3zM140.94 358.2h2.3v78.2h-2.3zM144.21 358.2h2.3v78.2h-2.3zM147.49 357.19h2.3v79.22h-2.3zM150.76 357.19h2.3v79.22h-2.3zM154.04 357.19h2.3v79.22h-2.3zM157.31 357.19h2.3v79.22h-2.3zM160.59 356.17h2.3v80.23h-2.3zM163.86 356.17h2.3v80.23h-2.3zM167.14 356.17h2.3v80.23h-2.3zM170.41 356.17h2.3v80.23h-2.3zM173.69 356.17h2.3v80.23h-2.3zM176.96 356.17h2.3v80.23h-2.3zM180.24 356.17h2.3v80.23h-2.3zM183.51 356.17h2.3v80.23h-2.3zM186.79 357.19h2.3v79.22h-2.3zM190.06 357.19h2.3v79.22h-2.3zM193.34 357.19h2.3v79.22h-2.3zM196.61 357.19h2.3v79.22h-2.3zM199.89 358.2h2.3v78.2h-2.3zM203.16 358.2h2.3v78.2h-2.3zM206.44 358.2h2.3v78.2h-2.3zM209.71 358.2h2.3v78.2h-2.3zM212.99 359.62h2.3v76.78h-2.3zM216.26 359.62h2.3v76.78h-2.3zM219.54 359.62h2.3v76.78h-2.3zM222.81 359.62h2.3v76.78h-2.3zM226.09 359.62h2.3v76.78h-2.3zM229.36 359.62h2.3v76.78h-2.3zM232.64 359.62h2.3v76.78h-2.3zM235.91 359.62h2.3v76.78h-2.3zM239.19 358.81h2.3v77.59h-2.3zM242.46 358.81h2.3v77.59h-2.3zM245.74 358.81h2.3v77.59h-2.3zM249.01 358.81h2.3v77.59h-2.3zM252.29 358.81h2.3v77.59h-2.3zM255.56 358.81h2.3v77.59h-2.3zM258.84 358.81h2.3v77.59h-2.3zM262.11 358.81h2.3v77.59h-2.3zM265.39 360.23h2.3v76.17h-2.3zM268.66 360.23h2.3v76.17h-2.3zM271.94 360.23h2.3v76.17h-2.3zM275.21 360.23h2.3v76.17h-2.3zM278.49 362.88h2.3v73.53h-2.3zM281.76 362.88h2.3v73.53h-2.3zM285.04 362.88h2.3v73.53h-2.3zM288.31 362.88h2.3v73.53h-2.3zM291.59 365.31h2.3v71.09h-2.3zM294.86 365.31h2.3v71.09h-2.3zM298.14 365.31h2.3v71.09h-2.3zM301.41 365.31h2.3v71.09h-2.3zM304.69 366.94h2.3v69.47h-2.3zM307.96 366.94h2.3v69.47h-2.3zM311.24 366.94h2.3v69.47h-2.3zM314.51 366.94h2.3v69.47h-2.3zM317.79 367.75h2.3v68.66h-2.3zM321.06 367.75h2.3v68.66h-2.3zM324.34 367.75h2.3v68.66h-2.3zM327.61 367.75h2.3v68.66h-2.3zM330.89 367.75h2.3v68.66h-2.3zM334.16 367.75h2.3v68.66h-2.3zM337.44 367.75h2.3v68.66h-2.3zM340.71 367.75h2.3v68.66h-2.3zM343.99 368.77h2.3v67.64h-2.3zM347.26 368.77h2.3v67.64h-2.3zM350.54 368.77h2.3v67.64h-2.3zM353.81 368.77h2.3v67.64h-2.3zM357.09 371.81h2.3v64.59h-2.3zM360.36 371.81h2.3v64.59h-2.3zM363.64 371.81h2.3v64.59h-2.3zM366.91 371.81h2.3v64.59h-2.3zM370.19 374.45h2.3v61.95h-2.3zM373.46 374.45h2.3v61.95h-2.3zM376.74 374.45h2.3v61.95h-2.3zM380.01 374.45h2.3v61.95h-2.3zM383.29 382.17h2.3v54.23h-2.3zM386.56 382.17h2.3v54.23h-2.3zM389.84 382.17h2.3v54.23h-2.3zM393.11 382.17h2.3v54.23h-2.3zM396.39 393.34h2.3v43.06h-2.3zM399.66 393.34h2.3v43.06h-2.3zM402.94 393.34h2.3v43.06h-2.3zM406.21 393.34h2.3v43.06h-2.3zM409.49 403.3h2.3v33.11h-2.3zM412.76 403.3h2.3v33.11h-2.3zM416.04 403.3h2.3v33.11h-2.3zM419.31 403.3h2.3v33.11h-2.3zM422.59 409.59h2.3v26.81h-2.3zM425.86 409.59h2.3v26.81h-2.3zM429.14 409.59h2.3v26.81h-2.3zM432.41 409.59h2.3v26.81h-2.3zM435.69 412.03h2.3v24.38h-2.3zM438.96 412.03h2.3v24.38h-2.3zM442.24 412.03h2.3v24.38h-2.3zM445.51 412.03h2.3v24.38h-2.3zM448.79 418.53h2.3v17.88h-2.3zM452.06 418.53h2.3v17.88h-2.3zM455.34 418.53h2.3v17.88h-2.3zM458.61 418.53h2.3v17.88h-2.3zM461.89 425.23h2.3v11.17h-2.3zM465.16 425.23h2.3v11.17h-2.3zM468.44 425.23h2.3v11.17h-2.3zM471.71 425.23h2.3v11.17h-2.3zM474.99 432.34h2.3v4.06h-2.3zM478.26 432.34h2.3v4.06h-2.3zM481.54 432.34h2.3v4.06h-2.3zM484.81 432.34h2.3v4.06h-2.3zM488.09 436.41h2.3v2.44h-2.3zM491.36 436.41h2.3v2.44h-2.3zM494.64 436.41h2.3v2.44h-2.3zM497.91 436.41h2.3v2.44h-2.3zM501.19 436.41h2.3v7.52h-2.3zM504.46 436.41h2.3v7.52h-2.3zM507.74 436.41h2.3v7.52h-2.3zM511.01 436.41h2.3v7.52h-2.3zM514.29 436.41h2.3v11.58h-2.3zM517.56 436.41h2.3v11.58h-2.3zM520.84 436.41h2.3v11.58h-2.3zM524.11 436.41h2.3v11.58h-2.3zM527.39 436.41h2.3v16.25h-2.3zM530.66 436.41h2.3v16.25h-2.3zM533.94 436.41h2.3v16.25h-2.3zM537.21 436.41h2.3v16.25h-2.3zM540.49 436.41h2.3v20.31h-2.3zM543.76 436.41h2.3v20.31h-2.3zM547.04 436.41h2.3v20.31h-2.3zM550.31 436.41h2.3v20.31h-2.3zM553.59 436.41h2.3v24.38h-2.3zM556.86 436.41h2.3v24.38h-2.3zM560.14 436.41h2.3v24.38h-2.3zM563.41 436.41h2.3v24.38h-2.3zM566.69 436.41h2.3v27.02h-2.3zM569.96 436.41h2.3v27.02h-2.3zM573.24 436.41h2.3v27.02h-2.3zM576.51 436.41h2.3v27.02h-2.3zM579.79 436.41h2.3v29.45h-2.3zM583.06 436.41h2.3v29.45h-2.3zM586.34 436.41h2.3v29.45h-2.3zM589.61 436.41h2.3v29.45h-2.3zM592.89 436.41h2.3v31.89h-2.3zM596.16 436.41h2.3v31.89h-2.3zM599.44 436.41h2.3v31.89h-2.3zM602.71 436.41h2.3v31.89h-2.3zM605.99 436.41h2.3v34.12h-2.3zM609.26 436.41h2.3v34.12h-2.3zM612.54 436.41h2.3v34.12h-2.3zM615.81 436.41h2.3v34.12h-2.3zM619.09 436.41h2.3v37.58h-2.3zM622.36 436.41h2.3v37.58h-2.3zM625.64 436.41h2.3v37.58h-2.3zM628.91 436.41h2.3v37.58h-2.3zM632.19 436.41h2.3v40.22h-2.3zM635.46 436.41h2.3v40.22h-2.3zM638.74 436.41h2.3v40.22h-2.3zM642.01 436.41h2.3v40.22h-2.3zM645.29 436.41h2.3v42.05h-2.3zM648.56 436.41h2.3v42.05h-2.3zM651.84 436.41h2.3v42.05h-2.3zM655.11 436.41h2.3v42.05h-2.3zM658.39 436.41h2.3v43.27h-2.3zM661.66 436.41h2.3v43.27h-2.3zM664.94 436.41h2.3v43.27h-2.3zM668.21 436.41h2.3v43.27h-2.3zM671.49 436.41h2.3v43.27h-2.3zM674.76 436.41h2.3v43.27h-2.3zM678.04 436.41h2.3v43.27h-2.3zM681.31 436.41h2.3v43.27h-2.3zM684.59 436.41h2.3v43.27h-2.3zM687.86 436.41h2.3v43.27h-2.3zM691.14 436.41h2.3v43.27h-2.3zM694.41 436.41h2.3v43.27h-2.3zM697.69 436.41h2.3v42.66h-2.3zM700.96 436.41h2.3v42.66h-2.3zM704.24 436.41h2.3v42.66h-2.3zM707.51 436.41h2.3v42.66h-2.3zM710.79 436.41h2.3v42.25h-2.3zM714.06 436.41h2.3v42.25h-2.3zM717.34 436.41h2.3v42.25h-2.3zM720.61 436.41h2.3v42.25h-2.3zM723.89 436.41h2.3v41.64h-2.3zM727.16 436.41h2.3v41.64h-2.3zM730.44 436.41h2.3v41.64h-2.3zM733.71 436.41h2.3v41.64h-2.3zM736.99 436.41h2.3v40.62h-2.3zM740.26 436.41h2.3v40.62h-2.3zM743.54 436.41h2.3v40.62h-2.3zM746.81 436.41h2.3v40.62h-2.3zM750.09 436.41h2.3v40.02h-2.3zM753.36 436.41h2.3v40.02h-2.3zM756.64 436.41h2.3v40.02h-2.3zM759.91 436.41h2.3v40.02h-2.3zM763.19 436.41h2.3v37.98h-2.3zM766.46 436.41h2.3v37.98h-2.3zM769.74 436.41h2.3v37.98h-2.3zM773.01 436.41h2.3v37.98h-2.3zM776.29 436.41h2.3v36.97h-2.3zM779.56 436.41h2.3v36.97h-2.3zM782.84 436.41h2.3v36.97h-2.3zM786.11 436.41h2.3v36.97h-2.3zM789.39 436.41h2.3v32.91h-2.3zM792.66 436.41h2.3v32.91h-2.3zM795.94 436.41h2.3v32.91h-2.3zM799.21 436.41h2.3v32.91h-2.3zM802.49 436.41h2.3v26.41h-2.3zM805.76 436.41h2.3v26.41h-2.3zM809.04 436.41h2.3v26.41h-2.3zM812.31 436.41h2.3v26.41h-2.3zM815.59 436.41h2.3v20.72h-2.3zM818.86 436.41h2.3v20.72h-2.3zM822.14 436.41h2.3v20.72h-2.3zM825.41 436.41h2.3v20.72h-2.3zM828.69 436.41h2.3v14.22h-2.3zM831.96 436.41h2.3v14.22h-2.3zM835.24 436.41h2.3v14.22h-2.3zM838.51 436.41h2.3v14.22h-2.3zM841.79 436.41h2.3v7.52h-2.3zM845.06 436.41h2.3v7.52h-2.3zM848.34 436.41h2.3v7.52h-2.3zM851.61 436.41h2.3v7.52h-2.3zM854.89 436.41h2.3v1.62h-2.3zM858.16 436.41h2.3v1.62h-2.3zM861.44 436.41h2.3v1.62h-2.3zM864.71 436.41h2.3v1.62h-2.3zM867.99 430.92h2.3v5.48h-2.3zM871.26 430.92h2.3v5.48h-2.3zM874.54 430.92h2.3v5.48h-2.3zM877.81 430.92h2.3v5.48h-2.3zM881.09 425.84h2.3v10.56h-2.3zM884.36 425.84h2.3v10.56h-2.3zM887.64 425.84h2.3v10.56h-2.3zM890.91 425.84h2.3v10.56h-2.3zM894.19 421.17h2.3v15.23h-2.3zM897.46 421.17h2.3v15.23h-2.3zM900.74 421.17h2.3v15.23h-2.3zM904.01 421.17h2.3v15.23h-2.3zM907.29 415.48h2.3v20.92h-2.3zM910.56 415.48h2.3v20.92h-2.3zM913.84 415.48h2.3v20.92h-2.3zM917.11 415.48h2.3v20.92h-2.3zM920.39 412.03h2.3v24.38h-2.3zM923.66 412.03h2.3v24.38h-2.3zM926.94 412.03h2.3v24.38h-2.3zM930.21 412.03h2.3v24.38h-2.3zM933.49 412.03h2.3v24.38h-2.3zM936.76 412.03h2.3v24.38h-2.3zM940.04 412.03h2.3v24.38h-2.3zM943.31 412.03h2.3v24.38h-2.3zM946.59 410.41h2.3v26h-2.3zM949.86 410.41h2.3v26h-2.3zM953.14 410.41h2.3v26h-2.3zM956.41 410.41h2.3v26h-2.3zM959.69 408.98h2.3v27.42h-2.3zM962.96 408.98h2.3v27.42h-2.3zM966.24 408.98h2.3v27.42h-2.3zM969.51 408.98h2.3v27.42h-2.3zM972.79 405.33h2.3v31.08h-2.3zM976.06 405.33h2.3v31.08h-2.3zM979.34 405.33h2.3v31.08h-2.3zM982.61 405.33h2.3v31.08h-2.3z"/><path fill="#552f1e" d="M16.49 412.03h3.29v24.38h-3.29zM19.76 412.03h3.29v24.38h-3.29zM23.04 412.03h3.29v24.38h-3.29zM26.31 412.03h3.29v24.38h-3.29zM29.59 419.55h3.29v16.86h-3.29zM32.86 419.55h3.29v16.86h-3.29zM36.14 419.55h3.29v16.86h-3.29zM39.41 419.55h3.29v16.86h-3.29zM42.69 406.34h3.29v30.06h-3.29zM45.96 406.34h3.29v30.06h-3.29zM49.24 406.34h3.29v30.06h-3.29zM52.51 406.34h3.29v30.06h-3.29zM55.79 430.92h3.29v5.48h-3.29zM59.06 430.92h3.29v5.48h-3.29zM62.34 430.92h3.29v5.48h-3.29zM65.61 430.92h3.29v5.48h-3.29zM68.89 428.28h3.29v8.12h-3.29zM72.16 428.28h3.29v8.12h-3.29zM75.44 428.28h3.29v8.12h-3.29zM78.71 428.28h3.29v8.12h-3.29zM81.99 420.16h3.29v16.25h-3.29zM85.26 420.16h3.29v16.25h-3.29zM88.54 420.16h3.29v16.25h-3.29zM91.81 420.16h3.29v16.25h-3.29zM95.09 405.33h3.29v31.08h-3.29zM98.36 405.33h3.29v31.08h-3.29zM101.64 405.33h3.29v31.08h-3.29zM104.91 405.33h3.29v31.08h-3.29zM108.19 404.52h3.29v31.89h-3.29zM111.46 404.52h3.29v31.89h-3.29zM114.74 404.52h3.29v31.89h-3.29zM118.01 404.52h3.29v31.89h-3.29zM121.29 405.33h3.29v31.08h-3.29zM124.56 405.33h3.29v31.08h-3.29zM127.84 405.33h3.29v31.08h-3.29zM131.11 405.33h3.29v31.08h-3.29zM134.39 410.41h3.29v26h-3.29zM137.66 410.41h3.29v26h-3.29zM140.94 410.41h3.29v26h-3.29zM144.21 410.41h3.29v26h-3.29zM147.49 413.66h3.29v22.75h-3.29zM150.76 413.66h3.29v22.75h-3.29zM154.04 413.66h3.29v22.75h-3.29zM157.31 413.66h3.29v22.75h-3.29zM160.59 428.28h3.29v8.12h-3.29zM163.86 428.28h3.29v8.12h-3.29zM167.14 428.28h3.29v8.12h-3.29zM170.41 428.28h3.29v8.12h-3.29zM173.69 400.86h3.29v35.55h-3.29zM176.96 400.86h3.29v35.55h-3.29zM180.24 400.86h3.29v35.55h-3.29zM183.51 400.86h3.29v35.55h-3.29zM186.79 405.53h3.29v30.88h-3.29zM190.06 405.53h3.29v30.88h-3.29zM193.34 405.53h3.29v30.88h-3.29zM196.61 405.53h3.29v30.88h-3.29zM199.89 406.34h3.29v30.06h-3.29zM203.16 406.34h3.29v30.06h-3.29zM206.44 406.34h3.29v30.06h-3.29zM209.71 406.34h3.29v30.06h-3.29zM212.99 412.03h3.29v24.38h-3.29zM216.26 412.03h3.29v24.38h-3.29zM219.54 412.03h3.29v24.38h-3.29zM222.81 412.03h3.29v24.38h-3.29zM226.09 416.09h3.29v20.31h-3.29zM229.36 416.09h3.29v20.31h-3.29zM232.64 416.09h3.29v20.31h-3.29zM235.91 416.09h3.29v20.31h-3.29zM252.29 410.41h3.29v26h-3.29zM255.56 410.41h3.29v26h-3.29zM258.84 410.41h3.29v26h-3.29zM262.11 410.41h3.29v26h-3.29zM265.39 405.33h3.29v31.08h-3.29zM268.66 405.33h3.29v31.08h-3.29zM271.94 405.33h3.29v31.08h-3.29zM275.21 405.33h3.29v31.08h-3.29zM278.49 405.33h3.29v31.08h-3.29zM281.76 405.33h3.29v31.08h-3.29zM285.04 405.33h3.29v31.08h-3.29zM288.31 405.33h3.29v31.08h-3.29zM291.59 414.47h3.29v21.94h-3.29zM294.86 414.47h3.29v21.94h-3.29zM298.14 414.47h3.29v21.94h-3.29zM301.41 414.47h3.29v21.94h-3.29zM304.69 416.09h3.29v20.31h-3.29zM307.96 416.09h3.29v20.31h-3.29zM311.24 416.09h3.29v20.31h-3.29zM314.51 416.09h3.29v20.31h-3.29zM317.79 425.84h3.29v10.56h-3.29zM321.06 425.84h3.29v10.56h-3.29zM324.34 425.84h3.29v10.56h-3.29zM327.61 425.84h3.29v10.56h-3.29zM330.89 434.98h3.29v1.42h-3.29zM334.16 434.98h3.29v1.42h-3.29zM337.44 434.98h3.29v1.42h-3.29zM340.71 434.98h3.29v1.42h-3.29zM343.99 403.91h3.29v32.5h-3.29zM347.26 403.91h3.29v32.5h-3.29zM350.54 403.91h3.29v32.5h-3.29zM353.81 403.91h3.29v32.5h-3.29zM357.09 406.95h3.29v29.45h-3.29zM360.36 406.95h3.29v29.45h-3.29zM363.64 406.95h3.29v29.45h-3.29zM366.91 406.95h3.29v29.45h-3.29zM370.19 416.7h3.29v19.7h-3.29zM373.46 416.7h3.29v19.7h-3.29zM376.74 416.7h3.29v19.7h-3.29zM380.01 416.7h3.29v19.7h-3.29zM383.29 383.59h3.29v52.81h-3.29zM386.56 383.59h3.29v52.81h-3.29zM389.84 383.59h3.29v52.81h-3.29zM393.11 383.59h3.29v52.81h-3.29zM396.39 395.78h3.29v40.62h-3.29zM399.66 395.78h3.29v40.62h-3.29zM402.94 395.78h3.29v40.62h-3.29zM406.21 395.78h3.29v40.62h-3.29zM409.49 417.72h3.29v18.69h-3.29zM412.76 417.72h3.29v18.69h-3.29zM416.04 417.72h3.29v18.69h-3.29zM419.31 417.72h3.29v18.69h-3.29zM422.59 429.91h3.29v6.5h-3.29zM425.86 429.91h3.29v6.5h-3.29zM429.14 429.91h3.29v6.5h-3.29zM432.41 429.91h3.29v6.5h-3.29zM435.69 433.36h3.29v3.05h-3.29zM438.96 433.36h3.29v3.05h-3.29zM442.24 433.36h3.29v3.05h-3.29zM445.51 433.36h3.29v3.05h-3.29zM448.79 419.55h3.29v16.86h-3.29zM452.06 419.55h3.29v16.86h-3.29zM455.34 419.55h3.29v16.86h-3.29zM458.61 419.55h3.29v16.86h-3.29zM461.89 429.3h3.29v7.11h-3.29zM465.16 429.3h3.29v7.11h-3.29zM468.44 429.3h3.29v7.11h-3.29zM471.71 429.3h3.29v7.11h-3.29zM474.99 433.77h3.29v2.64h-3.29zM478.26 433.77h3.29v2.64h-3.29zM481.54 433.77h3.29v2.64h-3.29zM484.81 433.77h3.29v2.64h-3.29zM488.09 436.41h3.29v0.61h-3.29zM491.36 436.41h3.29v0.61h-3.29zM494.64 436.41h3.29v0.61h-3.29zM497.91 436.41h3.29v0.61h-3.29zM501.19 436.41h3.29v4.06h-3.29zM504.46 436.41h3.29v4.06h-3.29zM507.74 436.41h3.29v4.06h-3.29zM511.01 436.41h3.29v4.06h-3.29zM514.29 436.41h3.29v6.7h-3.29zM517.56 436.41h3.29v6.7h-3.29zM520.84 436.41h3.29v6.7h-3.29zM524.11 436.41h3.29v6.7h-3.29zM527.39 436.41h3.29v10.77h-3.29zM530.66 436.41h3.29v10.77h-3.29zM533.94 436.41h3.29v10.77h-3.29zM537.21 436.41h3.29v10.77h-3.29zM540.49 436.41h3.29v14.22h-3.29zM543.76 436.41h3.29v14.22h-3.29zM547.04 436.41h3.29v14.22h-3.29zM550.31 436.41h3.29v14.22h-3.29zM553.59 436.41h3.29v14.83h-3.29zM556.86 436.41h3.29v14.83h-3.29zM560.14 436.41h3.29v14.83h-3.29zM563.41 436.41h3.29v14.83h-3.29zM566.69 436.41h3.29v16.66h-3.29zM569.96 436.41h3.29v16.66h-3.29zM573.24 436.41h3.29v16.66h-3.29zM576.51 436.41h3.29v16.66h-3.29zM579.79 436.41h3.29v19.3h-3.29zM583.06 436.41h3.29v19.3h-3.29zM586.34 436.41h3.29v19.3h-3.29zM589.61 436.41h3.29v19.3h-3.29zM592.89 436.41h3.29v20.72h-3.29zM596.16 436.41h3.29v20.72h-3.29zM599.44 436.41h3.29v20.72h-3.29zM602.71 436.41h3.29v20.72h-3.29zM605.99 436.41h3.29v23.97h-3.29zM609.26 436.41h3.29v23.97h-3.29zM612.54 436.41h3.29v23.97h-3.29zM615.81 436.41h3.29v23.97h-3.29zM619.09 436.41h3.29v30.47h-3.29zM622.36 436.41h3.29v30.47h-3.29zM625.64 436.41h3.29v30.47h-3.29zM628.91 436.41h3.29v30.47h-3.29zM632.19 436.41h3.29v23.36h-3.29zM635.46 436.41h3.29v23.36h-3.29zM638.74 436.41h3.29v23.36h-3.29zM642.01 436.41h3.29v23.36h-3.29zM645.29 436.41h3.29v30.47h-3.29zM648.56 436.41h3.29v30.47h-3.29zM651.84 436.41h3.29v30.47h-3.29zM655.11 436.41h3.29v30.47h-3.29zM658.39 436.41h3.29v25.8h-3.29zM661.66 436.41h3.29v25.8h-3.29zM664.94 436.41h3.29v25.8h-3.29zM668.21 436.41h3.29v25.8h-3.29zM671.49 436.41h3.29v25.8h-3.29zM674.76 436.41h3.29v25.8h-3.29zM678.04 436.41h3.29v25.8h-3.29zM681.31 436.41h3.29v25.8h-3.29zM684.59 436.41h3.29v27.42h-3.29zM687.86 436.41h3.29v27.42h-3.29zM691.14 436.41h3.29v27.42h-3.29zM694.41 436.41h3.29v27.42h-3.29zM697.69 436.41h3.29v26.41h-3.29zM700.96 436.41h3.29v26.41h-3.29zM704.24 436.41h3.29v26.41h-3.29zM707.51 436.41h3.29v26.41h-3.29zM710.79 436.41h3.29v28.84h-3.29zM714.06 436.41h3.29v28.84h-3.29zM717.34 436.41h3.29v28.84h-3.29zM720.61 436.41h3.29v28.84h-3.29zM723.89 436.41h3.29v25.8h-3.29zM727.16 436.41h3.29v25.8h-3.29zM730.44 436.41h3.29v25.8h-3.29zM733.71 436.41h3.29v25.8h-3.29zM736.99 436.41h3.29v24.98h-3.29zM740.26 436.41h3.29v24.98h-3.29zM743.54 436.41h3.29v24.98h-3.29zM746.81 436.41h3.29v24.98h-3.29zM750.09 436.41h3.29v24.98h-3.29zM753.36 436.41h3.29v24.98h-3.29zM756.64 436.41h3.29v24.98h-3.29zM759.91 436.41h3.29v24.98h-3.29zM763.19 436.41h3.29v28.84h-3.29zM766.46 436.41h3.29v28.84h-3.29zM769.74 436.41h3.29v28.84h-3.29zM773.01 436.41h3.29v28.84h-3.29zM776.29 436.41h3.29v13.61h-3.29zM779.56 436.41h3.29v13.61h-3.29zM782.84 436.41h3.29v13.61h-3.29zM786.11 436.41h3.29v13.61h-3.29zM789.39 436.41h3.29v12.59h-3.29zM792.66 436.41h3.29v12.59h-3.29zM795.94 436.41h3.29v12.59h-3.29zM799.21 436.41h3.29v12.59h-3.29zM802.49 436.41h3.29v7.72h-3.29zM805.76 436.41h3.29v7.72h-3.29zM809.04 436.41h3.29v7.72h-3.29zM812.31 436.41h3.29v7.72h-3.29zM815.59 436.41h3.29v8.53h-3.29zM818.86 436.41h3.29v8.53h-3.29zM822.14 436.41h3.29v8.53h-3.29zM825.41 436.41h3.29v8.53h-3.29zM828.69 436.41h3.29v6.09h-3.29zM831.96 436.41h3.29v6.09h-3.29zM835.24 436.41h3.29v6.09h-3.29zM838.51 436.41h3.29v6.09h-3.29zM841.79 436.41h3.29v3.45h-3.29zM845.06 436.41h3.29v3.45h-3.29zM848.34 436.41h3.29v3.45h-3.29zM851.61 436.41h3.29v3.45h-3.29zM854.89 436.41h3.29v0.41h-3.29zM858.16 436.41h3.29v0.41h-3.29zM861.44 436.41h3.29v0.41h-3.29zM864.71 436.41h3.29v0.41h-3.29zM867.99 435.8h3.29v0.61h-3.29zM871.26 435.8h3.29v0.61h-3.29zM874.54 435.8h3.29v0.61h-3.29zM877.81 435.8h3.29v0.61h-3.29zM881.09 432.75h3.29v3.66h-3.29zM884.36 432.75h3.29v3.66h-3.29zM887.64 432.75h3.29v3.66h-3.29zM890.91 432.75h3.29v3.66h-3.29zM894.19 432.75h3.29v3.66h-3.29zM897.46 432.75h3.29v3.66h-3.29zM900.74 432.75h3.29v3.66h-3.29zM904.01 432.75h3.29v3.66h-3.29zM907.29 431.33h3.29v5.08h-3.29zM910.56 431.33h3.29v5.08h-3.29zM913.84 431.33h3.29v5.08h-3.29zM917.11 431.33h3.29v5.08h-3.29zM920.39 425.23h3.29v11.17h-3.29zM923.66 425.23h3.29v11.17h-3.29zM926.94 425.23h3.29v11.17h-3.29zM930.21 425.23h3.29v11.17h-3.29zM933.49 418.12h3.29v18.28h-3.29zM936.76 418.12h3.29v18.28h-3.29zM940.04 418.12h3.29v18.28h-3.29zM943.31 418.12h3.29v18.28h-3.29zM946.59 430.92h3.29v5.48h-3.29zM949.86 430.92h3.29v5.48h-3.29zM953.14 430.92h3.29v5.48h-3.29zM956.41 430.92h3.29v5.48h-3.29zM959.69 426.86h3.29v9.55h-3.29zM962.96 426.86h3.29v9.55h-3.29zM966.24 426.86h3.29v9.55h-3.29zM969.51 426.86h3.29v9.55h-3.29zM972.79 430.31h3.29v6.09h-3.29zM976.06 430.31h3.29v6.09h-3.29zM979.34 430.31h3.29v6.09h-3.29zM982.61 430.31h3.29v6.09h-3.29z"/><path fill="#ff8552" d="M16.49 412.03h2.3v24.38h-2.3zM19.76 412.03h2.3v24.38h-2.3zM23.04 412.03h2.3v24.38h-2.3zM26.31 412.03h2.3v24.38h-2.3zM29.59 419.55h2.3v16.86h-2.3zM32.86 419.55h2.3v16.86h-2.3zM36.14 419.55h2.3v16.86h-2.3zM39.41 419.55h2.3v16.86h-2.3zM42.69 406.34h2.3v30.06h-2.3zM45.96 406.34h2.3v30.06h-2.3zM49.24 406.34h2.3v30.06h-2.3zM52.51 406.34h2.3v30.06h-2.3zM55.79 430.92h2.3v5.48h-2.3zM59.06 430.92h2.3v5.48h-2.3zM62.34 430.92h2.3v5.48h-2.3zM65.61 430.92h2.3v5.48h-2.3zM68.89 428.28h2.3v8.12h-2.3zM72.16 428.28h2.3v8.12h-2.3zM75.44 428.28h2.3v8.12h-2.3zM78.71 428.28h2.3v8.12h-2.3zM81.99 420.16h2.3v16.25h-2.3zM85.26 420.16h2.3v16.25h-2.3zM88.54 420.16h2.3v16.25h-2.3zM91.81 420.16h2.3v16.25h-2.3zM95.09 405.33h2.3v31.08h-2.3zM98.36 405.33h2.3v31.08h-2.3zM101.64 405.33h2.3v31.08h-2.3zM104.91 405.33h2.3v31.08h-2.3zM108.19 404.52h2.3v31.89h-2.3zM111.46 404.52h2.3v31.89h-2.3zM114.74 404.52h2.3v31.89h-2.3zM118.01 404.52h2.3v31.89h-2.3zM121.29 405.33h2.3v31.08h-2.3zM124.56 405.33h2.3v31.08h-2.3zM127.84 405.33h2.3v31.08h-2.3zM131.11 405.33h2.3v31.08h-2.3zM134.39 410.41h2.3v26h-2.3zM137.66 410.41h2.3v26h-2.3zM140.94 410.41h2.3v26h-2.3zM144.21 410.41h2.3v26h-2.3zM147.49 413.66h2.3v22.75h-2.3zM150.76 413.66h2.3v22.75h-2.3zM154.04 413.66h2.3v22.75h-2.3zM157.31 413.66h2.3v22.75h-2.3zM160.59 428.28h2.3v8.12h-2.3zM163.86 428.28h2.3v8.12h-2.3zM167.14 428.28h2.3v8.12h-2.3zM170.41 428.28h2.3v8.12h-2.3zM173.69 400.86h2.3v35.55h-2.3zM176.96 400.86h2.3v35.55h-2.3zM180.24 400.86h2.3v35.55h-2.3zM183.51 400.86h2.3v35.55h-2.3zM186.79 405.53h2.3v30.88h-2.3zM190.06 405.53h2.3v30.88h-2.3zM193.34 405.53h2.3v30.88h-2.3zM196.61 405.53h2.3v30.88h-2.3zM199.89 406.34h2.3v30.06h-2.3zM203.16 406.34h2.3v30.06h-2.3zM206.44 406.34h2.3v30.06h-2.3zM209.71 406.34h2.3v30.06h-2.3zM212.99 412.03h2.3v24.38h-2.3zM216.26 412.03h2.3v24.38h-2.3zM219.54 412.03h2.3v24.38h-2.3zM222.81 412.03h2.3v24.38h-2.3zM226.09 416.09h2.3v20.31h-2.3zM229.36 416.09h2.3v20.31h-2.3zM232.64 416.09h2.3v20.31h-2.3zM235.91 416.09h2.3v20.31h-2.3zM252.29 410.41h2.3v26h-2.3zM255.56 410.41h2.3v26h-2.3zM258.84 410.41h2.3v26h-2.3zM262.11 410.41h2.3v26h-2.3zM265.39 405.33h2.3v31.08h-2.3zM268.66 405.33h2.3v31.08h-2.3zM271.94 405.33h2.3v31.08h-2.3zM275.21 405.33h2.3v31.08h-2.3zM278.49 405.33h2.3v31.08h-2.3zM281.76 405.33h2.3v31.08h-2.3zM285.04 405.33h2.3v31.08h-2.3zM288.31 405.33h2.3v31.08h-2.3zM291.59 414.47h2.3v21.94h-2.3zM294.86 414.47h2.3v21.94h-2.3zM298.14 414.47h2.3v21.94h-2.3zM301.41 414.47h2.3v21.94h-2.3zM304.69 416.09h2.3v20.31h-2.3zM307.96 416.09h2.3v20.31h-2.3zM311.24 416.09h2.3v20.31h-2.3zM314.51 416.09h2.3v20.31h-2.3zM317.79 425.84h2.3v10.56h-2.3zM321.06 425.84h2.3v10.56h-2.3zM324.34 425.84h2.3v10.56h-2.3zM327.61 425.84h2.3v10.56h-2.3zM330.89 434.98h2.3v1.42h-2.3zM334.16 434.98h2.3v1.42h-2.3zM337.44 434.98h2.3v1.42h-2.3zM340.71 434.98h2.3v1.42h-2.3zM343.99 403.91h2.3v32.5h-2.3zM347.26 403.91h2.3v32.5h-2.3zM350.54 403.91h2.3v32.5h-2.3zM353.81 403.91h2.3v32.5h-2.3zM357.09 406.95h2.3v29.45h-2.3zM360.36 406.95h2.3v29.45h-2.3zM363.64 406.95h2.3v29.45h-2.3zM366.91 406.95h2.3v29.45h-2.3zM370.19 416.7h2.3v19.7h-2.3zM373.46 416.7h2.3v19.7h-2.3zM376.74 416.7h2.3v19.7h-2.3zM380.01 416.7h2.3v19.7h-2.3zM383.29 383.59h2.3v52.81h-2.3zM386.56 383.59h2.3v52.81h-2.3zM389.84 383.59h2.3v52.81h-2.3zM393.11 383.59h2.3v52.81h-2.3zM396.39 395.78h2.3v40.62h-2.3zM399.66 395.78h2.3v40.62h-2.3zM402.94 395.78h2.3v40.62h-2.3zM406.21 395.78h2.3v40.62h-2.3zM409.49 417.72h2.3v18.69h-2.3zM412.76 417.72h2.3v18.69h-2.3zM416.04 417.72h2.3v18.69h-2.3zM419.31 417.72h2.3v18.69h-2.3zM422.59 429.91h2.3v6.5h-2.3zM425.86 429.91h2.3v6.5h-2.3zM429.14 429.91h2.3v6.5h-2.3zM432.41 429.91h2.3v6.5h-2.3zM435.69 433.36h2.3v3.05h-2.3zM438.96 433.36h2.3v3.05h-2.3zM442.24 433.36h2.3v3.05h-2.3zM445.51 433.36h2.3v3.05h-2.3zM448.79 419.55h2.3v16.86h-2.3zM452.06 419.55h2.3v16.86h-2.3zM455.34 419.55h2.3v16.86h-2.3zM458.61 419.55h2.3v16.86h-2.3zM461.89 429.3h2.3v7.11h-2.3zM465.16 429.3h2.3v7.11h-2.3zM468.44 429.3h2.3v7.11h-2.3zM471.71 429.3h2.3v7.11h-2.3zM474.99 433.77h2.3v2.64h-2.3zM478.26 433.77h2.3v2.64h-2.3zM481.54 433.77h2.3v2.64h-2.3zM484.81 433.77h2.3v2.64h-2.3zM488.09 436.41h2.3v0.61h-2.3zM491.36 436.41h2.3v0.61h-2.3zM494.64 436.41h2.3v0.61h-2.3zM497.91 436.41h2.3v0.61h-2.3zM501.19 436.41h2.3v4.06h-2.3zM504.46 436.41h2.3v4.06h-2.3zM507.74 436.41h2.3v4.06h-2.3zM511.01 436.41h2.3v4.06h-2.3zM514.29 436.41h2.3v6.7h-2.3zM517.56 436.41h2.3v6.7h-2.3zM520.84 436.41h2.3v6.7h-2.3zM524.11 436.41h2.3v6.7h-2.3zM527.39 436.41h2.3v10.77h-2.3zM530.66 436.41h2.3v10.77h-2.3zM533.94 436.41h2.3v10.77h-2.3zM537.21 436.41h2.3v10.77h-2.3zM540.49 436.41h2.3v14.22h-2.3zM543.76 436.41h2.3v14.22h-2.3zM547.04 436.41h2.3v14.22h-2.3zM550.31 436.41h2.3v14.22h-2.3zM553.59 436.41h2.3v14.83h-2.3zM556.86 436.41h2.3v14.83h-2.3zM560.14 436.41h2.3v14.83h-2.3zM563.41 436.41h2.3v14.83h-2.3zM566.69 436.41h2.3v16.66h-2.3zM569.96 436.41h2.3v16.66h-2.3zM573.24 436.41h2.3v16.66h-2.3zM576.51 436.41h2.3v16.66h-2.3zM579.79 436.41h2.3v19.3h-2.3zM583.06 436.41h2.3v19.3h-2.3zM586.34 436.41h2.3v19.3h-2.3zM589.61 436.41h2.3v19.3h-2.3zM592.89 436.41h2.3v20.72h-2.3zM596.16 436.41h2.3v20.72h-2.3zM599.44 436.41h2.3v20.72h-2.3zM602.71 436.41h2.3v20.72h-2.3zM605.99 436.41h2.3v23.97h-2.3zM609.26 436.41h2.3v23.97h-2.3zM612.54 436.41h2.3v23.97h-2.3zM615.81 436.41h2.3v23.97h-2.3zM619.09 436.41h2.3v30.47h-2.3zM622.36 436.41h2.3v30.47h-2.3zM625.64 436.41h2.3v30.47h-2.3zM628.91 436.41h2.3v30.47h-2.3zM632.19 436.41h2.3v23.36h-2.3zM635.46 436.41h2.3v23.36h-2.3zM638.74 436.41h2.3v23.36h-2.3zM642.01 436.41h2.3v23.36h-2.3zM645.29 436.41h2.3v30.47h-2.3zM648.56 436.41h2.3v30.47h-2.3zM651.84 436.41h2.3v30.47h-2.3zM655.11 436.41h2.3v30.47h-2.3zM658.39 436.41h2.3v25.8h-2.3zM661.66 436.41h2.3v25.8h-2.3zM664.94 436.41h2.3v25.8h-2.3zM668.21 436.41h2.3v25.8h-2.3zM671.49 436.41h2.3v25.8h-2.3zM674.76 436.41h2.3v25.8h-2.3zM678.04 436.41h2.3v25.8h-2.3zM681.31 436.41h2.3v25.8h-2.3zM684.59 436.41h2.3v27.42h-2.3zM687.86 436.41h2.3v27.42h-2.3zM691.14 436.41h2.3v27.42h-2.3zM694.41 436.41h2.3v27.42h-2.3zM697.69 436.41h2.3v26.41h-2.3zM700.96 436.41h2.3v26.41h-2.3zM704.24 436.41h2.3v26.41h-2.3zM707.51 436.41h2.3v26.41h-2.3zM710.79 436.41h2.3v28.84h-2.3zM714.06 436.41h2.3v28.84h-2.3zM717.34 436.41h2.3v28.84h-2.3zM720.61 436.41h2.3v28.84h-2.3zM723.89 436.41h2.3v25.8h-2.3zM727.16 436.41h2.3v25.8h-2.3zM730.44 436.41h2.3v25.8h-2.3zM733.71 436.41h2.3v25.8h-2.3zM736.99 436.41h2.3v24.98h-2.3zM740.26 436.41h2.3v24.98h-2.3zM743.54 436.41h2.3v24.98h-2.3zM746.81 436.41h2.3v24.98h-2.3zM750.09 436.41h2.3v24.98h-2.3zM753.36 436.41h2.3v24.98h-2.3zM756.64 436.41h2.3v24.98h-2.3zM759.91 436.41h2.3v24.98h-2.3zM763.19 436.41h2.3v28.84h-2.3zM766.46 436.41h2.3v28.84h-2.3zM769.74 436.41h2.3v28.84h-2.3zM773.01 436.41h2.3v28.84h-2.3zM776.29 436.41h2.3v13.61h-2.3zM779.56 436.41h2.3v13.61h-2.3zM782.84 436.41h2.3v13.61h-2.3zM786.11 436.41h2.3v13.61h-2.3zM789.39 436.41h2.3v12.59h-2.3zM792.66 436.41h2.3v12.59h-2.3zM795.94 436.41h2.3v12.59h-2.3zM799.21 436.41h2.3v12.59h-2.3zM802.49 436.41h2.3v7.72h-2.3zM805.76 436.41h2.3v7.72h-2.3zM809.04 436.41h2.3v7.72h-2.3zM812.31 436.41h2.3v7.72h-2.3zM815.59 436.41h2.3v8.53h-2.3zM818.86 436.41h2.3v8.53h-2.3zM822.14 436.41h2.3v8.53h-2.3zM825.41 436.41h2.3v8.53h-2.3zM828.69 436.41h2.3v6.09h-2.3zM831.96 436.41h2.3v6.09h-2.3zM835.24 436.41h2.3v6.09h-2.3zM838.51 436.41h2.3v6.09h-2.3zM841.79 436.41h2.3v3.45h-2.3zM845.06 436.41h2.3v3.45h-2.3zM848.34 436.41h2.3v3.45h-2.3zM851.61 436.41h2.3v3.45h-2.3zM854.89 436.41h2.3v0.41h-2.3zM858.16 436.41h2.3v0.41h-2.3zM861.44 436.41h2.3v0.41h-2.3zM864.71 436.41h2.3v0.41h-2.3zM867.99 435.8h2.3v0.61h-2.3zM871.26 435.8h2.3v0.61h-2.3zM874.54 435.8h2.3v0.61h-2.3zM877.81 435.8h2.3v0.61h-2.3zM881.09 432.75h2.3v3.66h-2.3zM884.36 432.75h2.3v3.66h-2.3zM887.64 432.75h2.3v3.66h-2.3zM890.91 432.75h2.3v3.66h-2.3zM894.19 432.75h2.3v3.66h-2.3zM897.46 432.75h2.3v3.66h-2.3zM900.74 432.75h2.3v3.66h-2.3zM904.01 432.75h2.3v3.66h-2.3zM907.29 431.33h2.3v5.08h-2.3zM910.56 431.33h2.3v5.08h-2.3zM913.84 431.33h2.3v5.08h-2.3zM917.11 431.33h2.3v5.08h-2.3zM920.39 425.23h2.3v11.17h-2.3zM923.66 425.23h2.3v11.17h-2.3zM926.94 425.23h2.3v11.17h-2.3zM930.21 425.23h2.3v11.17h-2.3zM933.49 418.12h2.3v18.28h-2.3zM936.76 418.12h2.3v18.28h-2.3zM940.04 418.12h2.3v18.28h-2.3zM943.31 418.12h2.3v18.28h-2.3zM946.59 430.92h2.3v5.48h-2.3zM949.86 430.92h2.3v5.48h-2.3zM953.14 430.92h2.3v5.48h-2.3zM956.41 430.92h2.3v5.48h-2.3zM959.69 426.86h2.3v9.55h-2.3zM962.96 426.86h2.3v9.55h-2.3zM966.24 426.86h2.3v9.55h-2.3zM969.51 426.86h2.3v9.55h-2.3zM972.79 430.31h2.3v6.09h-2.3zM976.06 430.31h2.3v6.09h-2.3zM979.34 430.31h2.3v6.09h-2.3zM982.61 430.31h2.3v6.09h-2.3z"/></g>
<g clip-path="url(#c2)"><path fill="#1f3e00" d="M3.39 500.69h3.29v35.55h-3.29zM6.66 500.69h3.29v35.55h-3.29zM9.94 500.69h3.29v35.55h-3.29zM13.21 500.69h3.29v35.55h-3.29zM16.49 508.81h3.29v27.42h-3.29zM19.76 508.81h3.29v27.42h-3.29zM23.04 508.81h3.29v27.42h-3.29zM26.31 508.81h3.29v27.42h-3.29zM29.59 524.05h3.29v12.19h-3.29zM32.86 524.05h3.29v12.19h-3.29zM36.14 524.05h3.29v12.19h-3.29zM39.41 524.05h3.29v12.19h-3.29zM42.69 526.69h3.29v9.55h-3.29zM45.96 526.69h3.29v9.55h-3.29zM49.24 526.69h3.29v9.55h-3.29zM52.51 526.69h3.29v9.55h-3.29zM55.79 527.7h3.29v8.53h-3.29zM59.06 527.7h3.29v8.53h-3.29zM62.34 527.7h3.29v8.53h-3.29zM65.61 527.7h3.29v8.53h-3.29zM68.89 522.62h3.29v13.61h-3.29zM72.16 522.62h3.29v13.61h-3.29zM75.44 522.62h3.29v13.61h-3.29zM78.71 522.62h3.29v13.61h-3.29zM81.99 516.94h3.29v19.3h-3.29zM85.26 516.94h3.29v19.3h-3.29zM88.54 516.94h3.29v19.3h-3.29zM91.81 516.94h3.29v19.3h-3.29zM95.09 510.44h3.29v25.8h-3.29zM98.36 510.44h3.29v25.8h-3.29zM101.64 510.44h3.29v25.8h-3.29zM104.91 510.44h3.29v25.8h-3.29zM108.19 510.44h3.29v25.8h-3.29zM111.46 510.44h3.29v25.8h-3.29zM114.74 510.44h3.29v25.8h-3.29zM118.01 510.44h3.29v25.8h-3.29zM121.29 513.48h3.29v22.75h-3.29zM124.56 513.48h3.29v22.75h-3.29zM127.84 513.48h3.29v22.75h-3.29zM131.11 513.48h3.29v22.75h-3.29zM134.39 509.42h3.29v26.81h-3.29zM137.66 509.42h3.29v26.81h-3.29zM140.94 509.42h3.29v26.81h-3.29zM144.21 509.42h3.29v26.81h-3.29zM147.49 513.48h3.29v22.75h-3.29zM150.76 513.48h3.29v22.75h-3.29zM154.04 513.48h3.29v22.75h-3.29zM157.31 513.48h3.29v22.75h-3.29zM160.59 509.42h3.29v26.81h-3.29zM163.86 509.42h3.29v26.81h-3.29zM167.14 509.42h3.29v26.81h-3.29zM170.41 509.42h3.29v26.81h-3.29zM173.69 500.69h3.29v35.55h-3.29zM176.96 500.69h3.29v35.55h-3.29zM180.24 500.69h3.29v35.55h-3.29zM183.51 500.69h3.29v35.55h-3.29zM186.79 495.2h3.29v41.03h-3.29zM190.06 495.2h3.29v41.03h-3.29zM193.34 495.2h3.29v41.03h-3.29zM196.61 495.2h3.29v41.03h-3.29zM199.89 496.62h3.29v39.61h-3.29zM203.16 496.62h3.29v39.61h-3.29zM206.44 496.62h3.29v39.61h-3.29zM209.71 496.62h3.29v39.61h-3.29zM212.99 504.75h3.29v31.48h-3.29zM216.26 504.75h3.29v31.48h-3.29zM219.54 504.75h3.29v31.48h-3.29zM222.81 504.75h3.29v31.48h-3.29zM226.09 517.95h3.29v18.28h-3.29zM229.36 517.95h3.29v18.28h-3.29zM232.64 517.95h3.29v18.28h-3.29zM235.91 517.95h3.29v18.28h-3.29zM239.19 522.02h3.29v14.22h-3.29zM242.46 522.02h3.29v14.22h-3.29zM245.74 522.02h3.29v14.22h-3.29zM249.01 522.02h3.29v14.22h-3.29zM252.29 517.95h3.29v18.28h-3.29zM255.56 517.95h3.29v18.28h-3.29zM258.84 517.95h3.29v18.28h-3.29zM262.11 517.95h3.29v18.28h-3.29zM265.39 520.19h3.29v16.05h-3.29zM268.66 520.19h3.29v16.05h-3.29zM271.94 520.19h3.29v16.05h-3.29zM275.21 520.19h3.29v16.05h-3.29zM278.49 522.02h3.29v14.22h-3.29zM281.76 522.02h3.29v14.22h-3.29zM285.04 522.02h3.29v14.22h-3.29zM288.31 522.02h3.29v14.22h-3.29zM291.59 531.36h3.29v4.88h-3.29zM294.86 531.36h3.29v4.88h-3.29zM298.14 531.36h3.29v4.88h-3.29zM301.41 531.36h3.29v4.88h-3.29zM304.69 536.23h3.29v11.38h-3.29zM307.96 536.23h3.29v11.38h-3.29zM311.24 536.23h3.29v11.38h-3.29zM314.51 536.23h3.29v11.38h-3.29zM317.79 536.23h3.29v21.33h-3.29zM321.06 536.23h3.29v21.33h-3.29zM324.34 536.23h3.29v21.33h-3.29zM327.61 536.23h3.29v21.33h-3.29zM330.89 536.23h3.29v33.72h-3.29zM334.16 536.23h3.29v33.72h-3.29zM337.44 536.23h3.29v33.72h-3.29zM340.71 536.23h3.29v33.72h-3.29zM343.99 536.23h3.29v36.16h-3.29zM347.26 536.23h3.29v36.16h-3.29zM350.54 536.23h3.29v36.16h-3.29zM353.81 536.23h3.29v36.16h-3.29zM357.09 536.23h3.29v40.83h-3.29zM360.36 536.23h3.29v40.83h-3.29zM363.64 536.23h3.29v40.83h-3.29zM366.91 536.23h3.29v40.83h-3.29zM370.19 536.23h3.29v47.33h-3.29zM373.46 536.23h3.29v47.33h-3.29zM376.74 536.23h3.29v47.33h-3.29zM380.01 536.23h3.29v47.33h-3.29zM383.29 536.23h3.29v55.45h-3.29zM386.56 536.23h3.29v55.45h-3.29zM389.84 536.23h3.29v55.45h-3.29zM393.11 536.23h3.29v55.45h-3.29zM396.39 536.23h3.29v55.45h-3.29zM399.66 536.23h3.29v55.45h-3.29zM402.94 536.23h3.29v55.45h-3.29zM406.21 536.23h3.29v55.45h-3.29zM409.49 536.23h3.29v54.44h-3.29zM412.76 536.23h3.29v54.44h-3.29zM416.04 536.23h3.29v54.44h-3.29zM419.31 536.23h3.29v54.44h-3.29zM422.59 536.23h3.29v48.34h-3.29zM425.86 536.23h3.29v48.34h-3.29zM429.14 536.23h3.29v48.34h-3.29zM432.41 536.23h3.29v48.34h-3.29zM435.69 536.23h3.29v49.97h-3.29zM438.96 536.23h3.29v49.97h-3.29zM442.24 536.23h3.29v49.97h-3.29zM445.51 536.23h3.29v49.97h-3.29zM448.79 536.23h3.29v54.84h-3.29zM452.06 536.23h3.29v54.84h-3.29zM455.34 536.23h3.29v54.84h-3.29zM458.61 536.23h3.29v54.84h-3.29zM461.89 536.23h3.29v58.91h-3.29zM465.16 536.23h3.29v58.91h-3.29zM468.44 536.23h3.29v58.91h-3.29zM471.71 536.23h3.29v58.91h-3.29zM474.99 536.23h3.29v65.61h-3.29zM478.26 536.23h3.29v65.61h-3.29zM481.54 536.23h3.29v65.61h-3.29zM484.81 536.23h3.29v65.61h-3.29zM488.09 536.23h3.29v70.28h-3.29zM491.36 536.23h3.29v70.28h-3.29zM494.64 536.23h3.29v70.28h-3.29zM497.91 536.23h3.29v70.28h-3.29zM501.19 536.23h3.29v76.17h-3.29zM504.46 536.23h3.29v76.17h-3.29zM507.74 536.23h3.29v76.17h-3.29zM511.01 536.23h3.29v76.17h-3.29zM514.29 536.23h3.29v77.19h-3.29zM517.56 536.23h3.29v77.19h-3.29zM520.84 536.23h3.29v77.19h-3.29zM524.11 536.23h3.29v77.19h-3.29zM527.39 536.23h3.29v75.16h-3.29zM530.66 536.23h3.29v75.16h-3.29zM533.94 536.23h3.29v75.16h-3.29zM537.21 536.23h3.29v75.16h-3.29zM540.49 536.23h3.29v76.38h-3.29zM543.76 536.23h3.29v76.38h-3.29zM547.04 536.23h3.29v76.38h-3.29zM550.31 536.23h3.29v76.38h-3.29zM553.59 536.23h3.29v73.12h-3.29zM556.86 536.23h3.29v73.12h-3.29zM560.14 536.23h3.29v73.12h-3.29zM563.41 536.23h3.29v73.12h-3.29zM566.69 536.23h3.29v71.3h-3.29zM569.96 536.23h3.29v71.3h-3.29zM573.24 536.23h3.29v71.3h-3.29zM576.51 536.23h3.29v71.3h-3.29zM579.79 536.23h3.29v63.17h-3.29zM583.06 536.23h3.29v63.17h-3.29zM586.34 536.23h3.29v63.17h-3.29zM589.61 536.23h3.29v63.17h-3.29zM592.89 536.23h3.29v59.92h-3.29zM596.16 536.23h3.29v59.92h-3.29zM599.44 536.23h3.29v59.92h-3.29zM602.71 536.23h3.29v59.92h-3.29zM605.99 536.23h3.29v55.05h-3.29zM609.26 536.23h3.29v55.05h-3.29zM612.54 536.23h3.29v55.05h-3.29zM615.81 536.23h3.29v55.05h-3.29zM619.09 536.23h3.29v54.44h-3.29zM622.36 536.23h3.29v54.44h-3.29zM625.64 536.23h3.29v54.44h-3.29zM628.91 536.23h3.29v54.44h-3.29zM632.19 536.23h3.29v51.8h-3.29zM635.46 536.23h3.29v51.8h-3.29zM638.74 536.23h3.29v51.8h-3.29zM642.01 536.23h3.29v51.8h-3.29zM645.29 536.23h3.29v52.41h-3.29zM648.56 536.23h3.29v52.41h-3.29zM651.84 536.23h3.29v52.41h-3.29zM655.11 536.23h3.29v52.41h-3.29zM658.39 536.23h3.29v46.72h-3.29zM661.66 536.23h3.29v46.72h-3.29zM664.94 536.23h3.29v46.72h-3.29zM668.21 536.23h3.29v46.72h-3.29zM671.49 536.23h3.29v34.53h-3.29zM674.76 536.23h3.29v34.53h-3.29zM678.04 536.23h3.29v34.53h-3.29zM681.31 536.23h3.29v34.53h-3.29zM684.59 536.23h3.29v20.52h-3.29zM687.86 536.23h3.29v20.52h-3.29zM691.14 536.23h3.29v20.52h-3.29zM694.41 536.23h3.29v20.52h-3.29zM697.69 536.23h3.29v14.22h-3.29zM700.96 536.23h3.29v14.22h-3.29zM704.24 536.23h3.29v14.22h-3.29zM707.51 536.23h3.29v14.22h-3.29zM710.79 536.23h3.29v9.34h-3.29zM714.06 536.23h3.29v9.34h-3.29zM717.34 536.23h3.29v9.34h-3.29zM720.61 536.23h3.29v9.34h-3.29zM723.89 536.23h3.29v10.16h-3.29zM727.16 536.23h3.29v10.16h-3.29zM730.44 536.23h3.29v10.16h-3.29zM733.71 536.23h3.29v10.16h-3.29zM736.99 536.23h3.29v5.08h-3.29zM740.26 536.23h3.29v5.08h-3.29zM743.54 536.23h3.29v5.08h-3.29zM746.81 536.23h3.29v5.08h-3.29zM750.09 535.22h3.29v1.02h-3.29zM753.36 535.22h3.29v1.02h-3.29zM756.64 535.22h3.29v1.02h-3.29zM759.91 535.22h3.29v1.02h-3.29zM776.29 530.75h3.29v5.48h-3.29zM779.56 530.75h3.29v5.48h-3.29zM782.84 530.75h3.29v5.48h-3.29zM786.11 530.75h3.29v5.48h-3.29zM789.39 532.17h3.29v4.06h-3.29zM792.66 532.17h3.29v4.06h-3.29zM795.94 532.17h3.29v4.06h-3.29zM799.21 532.17h3.29v4.06h-3.29zM802.49 527.3h3.29v8.94h-3.29zM805.76 527.3h3.29v8.94h-3.29zM809.04 527.3h3.29v8.94h-3.29zM812.31 527.3h3.29v8.94h-3.29zM815.59 530.75h3.29v5.48h-3.29zM818.86 530.75h3.29v5.48h-3.29zM822.14 530.75h3.29v5.48h-3.29zM825.41 530.75h3.29v5.48h-3.29zM828.69 529.12h3.29v7.11h-3.29zM831.96 529.12h3.29v7.11h-3.29zM835.24 529.12h3.29v7.11h-3.29zM838.51 529.12h3.29v7.11h-3.29zM841.79 531.77h3.29v4.47h-3.29zM845.06 531.77h3.29v4.47h-3.29zM848.34 531.77h3.29v4.47h-3.29zM851.61 531.77h3.29v4.47h-3.29zM854.89 530.75h3.29v5.48h-3.29zM858.16 530.75h3.29v5.48h-3.29zM861.44 530.75h3.29v5.48h-3.29zM864.71 530.75h3.29v5.48h-3.29zM867.99 530.14h3.29v6.09h-3.29zM871.26 530.14h3.29v6.09h-3.29zM874.54 530.14h3.29v6.09h-3.29zM877.81 530.14h3.29v6.09h-3.29zM881.09 526.08h3.29v10.16h-3.29zM884.36 526.08h3.29v10.16h-3.29zM887.64 526.08h3.29v10.16h-3.29zM890.91 526.08h3.29v10.16h-3.29zM894.19 522.62h3.29v13.61h-3.29zM897.46 522.62h3.29v13.61h-3.29zM900.74 522.62h3.29v13.61h-3.29zM904.01 522.62h3.29v13.61h-3.29zM907.29 525.06h3.29v11.17h-3.29zM910.56 525.06h3.29v11.17h-3.29zM913.84 525.06h3.29v11.17h-3.29zM917.11 525.06h3.29v11.17h-3.29zM920.39 531.36h3.29v4.88h-3.29zM923.66 531.36h3.29v4.88h-3.29zM926.94 531.36h3.29v4.88h-3.29zM930.21 531.36h3.29v4.88h-3.29zM933.49 536.23h3.29v0.61h-3.29zM936.76 536.23h3.29v0.61h-3.29zM940.04 536.23h3.29v0.61h-3.29zM943.31 536.23h3.29v0.61h-3.29zM946.59 531.36h3.29v4.88h-3.29zM949.86 531.36h3.29v4.88h-3.29zM953.14 531.36h3.29v4.88h-3.29zM956.41 531.36h3.29v4.88h-3.29zM959.69 526.08h3.29v10.16h-3.29zM962.96 526.08h3.29v10.16h-3.29zM966.24 526.08h3.29v10.16h-3.29zM969.51 526.08h3.29v10.16h-3.29zM972.79 522.02h3.29v14.22h-3.29zM976.06 522.02h3.29v14.22h-3.29zM979.34 522.02h3.29v14.22h-3.29zM982.61 522.02h3.29v14.22h-3.29z"/><path fill="#7cfc00" d="M3.39 500.69h2.3v35.55h-2.3zM6.66 500.69h2.3v35.55h-2.3zM9.94 500.69h2.3v35.55h-2.3zM13.21 500.69h2.3v35.55h-2.3zM16.49 508.81h2.3v27.42h-2.3zM19.76 508.81h2.3v27.42h-2.3zM23.04 508.81h2.3v27.42h-2.3zM26.31 508.81h2.3v27.42h-2.3zM29.59 524.05h2.3v12.19h-2.3zM32.86 524.05h2.3v12.19h-2.3zM36.14 524.05h2.3v12.19h-2.3zM39.41 524.05h2.3v12.19h-2.3zM42.69 526.69h2.3v9.55h-2.3zM45.96 526.69h2.3v9.55h-2.3zM49.24 526.69h2.3v9.55h-2.3zM52.51 526.69h2.3v9.55h-2.3zM55.79 527.7h2.3v8.53h-2.3zM59.06 527.7h2.3v8.53h-2.3zM62.34 527.7h2.3v8.53h-2.3zM65.61 527.7h2.3v8.53h-2.3zM68.89 522.62h2.3v13.61h-2.3zM72.16 522.62h2.3v13.61h-2.3zM75.44 522.62h2.3v13.61h-2.3zM78.71 522.62h2.3v13.61h-2.3zM81.99 516.94h2.3v19.3h-2.3zM85.26 516.94h2.3v19.3h-2.3zM88.54 516.94h2.3v19.3h-2.3zM91.81 516.94h2.3v19.3h-2.3zM95.09 510.44h2.3v25.8h-2.3zM98.36 510.44h2.3v25.8h-2.3zM101.64 510.44h2.3v25.8h-2.3zM104.91 510.44h2.3v25.8h-2.3zM108.19 510.44h2.3v25.8h-2.3zM111.46 510.44h2.3v25.8h-2.3zM114.74 510.44h2.3v25.8h-2.3zM118.01 510.44h2.3v25.8h-2.3zM121.29 513.48h2.3v22.75h-2.3zM124.56 513.48h2.3v22.75h-2.3zM127.84 513.48h2.3v22.75h-2.3zM131.11 513.48h2.3v22.75h-2.3zM134.39 509.42h2.3v26.81h-2.3zM137.66 509.42h2.3v26.81h-2.3zM140.94 509.42h2.3v26.81h-2.3zM144.21 509.42h2.3v26.81h-2.3zM147.49 513.48h2.3v22.75h-2.3zM150.76 513.48h2.3v22.75h-2.3zM154.04 513.48h2.3v22.75h-2.3zM157.31 513.48h2.3v22.75h-2.3zM160.59 509.42h2.3v26.81h-2.3zM163.86 509.42h2.3v26.81h-2.3zM167.14 509.42h2.3v26.81h-2.3zM170.41 509.42h2.3v26.81h-2.3zM173.69 500.69h2.3v35.55h-2.3zM176.96 500.69h2.3v35.55h-2.3zM180.24 500.69h2.3v35.55h-2.3zM183.51 500.69h2.3v35.55h-2.3zM186.79 495.2h2.3v41.03h-2.3zM190.06 495.2h2.3v41.03h-2.3zM193.34 495.2h2.3v41.03h-2.3zM196.61 495.2h2.3v41.03h-2.3zM199.89 496.62h2.3v39.61h-2.3zM203.16 496.62h2.3v39.61h-2.3zM206.44 496.62h2.3v39.61h-2.3zM209.71 496.62h2.3v39.61h-2.3zM212.99 504.75h2.3v31.48h-2.3zM216.26 504.75h2.3v31.48h-2.3zM219.54 504.75h2.3v31.48h-2.3zM222.81 504.75h2.3v31.48h-2.3zM226.09 517.95h2.3v18.28h-2.3zM229.36 517.95h2.3v18.28h-2.3zM232.64 517.95h2.3v18.28h-2.3zM235.91 517.95h2.3v18.28h-2.3zM239.19 522.02h2.3v14.22h-2.3zM242.46 522.02h2.3v14.22h-2.3zM245.74 522.02h2.3v14.22h-2.3zM249.01 522.02h2.3v14.22h-2.3zM252.29 517.95h2.3v18.28h-2.3zM255.56 517.95h2.3v18.28h-2.3zM258.84 517.95h2.3v18.28h-2.3zM262.11 517.95h2.3v18.28h-2.3zM265.39 520.19h2.3v16.05h-2.3zM268.66 520.19h2.3v16.05h-2.3zM271.94 520.19h2.3v16.05h-2.3zM275.21 520.19h2.3v16.05h-2.3zM278.49 522.02h2.3v14.22h-2.3zM281.76 522.02h2.3v14.22h-2.3zM285.04 522.02h2.3v14.22h-2.3zM288.31 522.02h2.3v14.22h-2.3zM291.59 531.36h2.3v4.88h-2.3zM294.86 531.36h2.3v4.88h-2.3zM298.14 531.36h2.3v4.88h-2.3zM301.41 531.36h2.3v4.88h-2.3zM304.69 536.23h2.3v11.38h-2.3zM307.96 536.23h2.3v11.38h-2.3zM311.24 536.23h2.3v11.38h-2.3zM314.51 536.23h2.3v11.38h-2.3zM317.79 536.23h2.3v21.33h-2.3zM321.06 536.23h2.3v21.33h-2.3zM324.34 536.23h2.3v21.33h-2.3zM327.61 536.23h2.3v21.33h-2.3zM330.89 536.23h2.3v33.72h-2.3zM334.16 536.23h2.3v33.72h-2.3zM337.44 536.23h2.3v33.72h-2.3zM340.71 536.23h2.3v33.72h-2.3zM343.99 536.23h2.3v36.16h-2.3zM347.26 536.23h2.3v36.16h-2.3zM350.54 536.23h2.3v36.16h-2.3zM353.81 536.23h2.3v36.16h-2.3zM357.09 536.23h2.3v40.83h-2.3zM360.36 536.23h2.3v40.83h-2.3zM363.64 536.23h2.3v40.83h-2.3zM366.91 536.23h2.3v40.83h-2.3zM370.19 536.23h2.3v47.33h-2.3zM373.46 536.23h2.3v47.33h-2.3zM376.74 536.23h2.3v47.33h-2.3zM380.01 536.23h2.3v47.33h-2.3zM383.29 536.23h2.3v55.45h-2.3zM386.56 536.23h2.3v55.45h-2.3zM389.84 536.23h2.3v55.45h-2.3zM393.11 536.23h2.3v55.45h-2.3zM396.39 536.23h2.3v55.45h-2.3zM399.66 536.23h2.3v55.45h-2.3zM402.94 536.23h2.3v55.45h-2.3zM406.21 536.23h2.3v55.45h-2.3zM409.49 536.23h2.3v54.44h-2.3zM412.76 536.23h2.3v54.44h-2.3zM416.04 536.23h2.3v54.44h-2.3zM419.31 536.23h2.3v54.44h-2.3zM422.59 536.23h2.3v48.34h-2.3zM425.86 536.23h2.3v48.34h-2.3zM429.14 536.23h2.3v48.34h-2.3zM432.41 536.23h2.3v48.34h-2.3zM435.69 536.23h2.3v49.97h-2.3zM438.96 536.23h2.3v49.97h-2.3zM442.24 536.23h2.3v49.97h-2.3zM445.51 536.23h2.3v49.97h-2.3zM448.79 536.23h2.3v54.84h-2.3zM452.06 536.23h2.3v54.84h-2.3zM455.34 536.23h2.3v54.84h-2.3zM458.61 536.23h2.3v54.84h-2.3zM461.89 536.23h2.3v58.91h-2.3zM465.16 536.23h2.3v58.91h-2.3zM468.44 536.23h2.3v58.91h-2.3zM471.71 536.23h2.3v58.91h-2.3zM474.99 536.23h2.3v65.61h-2.3zM478.26 536.23h2.3v65.61h-2.3zM481.54 536.23h2.3v65.61h-2.3zM484.81 536.23h2.3v65.61h-2.3zM488.09 536.23h2.3v70.28h-2.3zM491.36 536.23h2.3v70.28h-2.3zM494.64 536.23h2.3v70.28h-2.3zM497.91 536.23h2.3v70.28h-2.3zM501.19 536.23h2.3v76.17h-2.3zM504.46 536.23h2.3v76.17h-2.3zM507.74 536.23h2.3v76.17h-2.3zM511.01 536.23h2.3v76.17h-2.3zM514.29 536.23h2.3v77.19h-2.3zM517.56 536.23h2.3v77.19h-2.3zM520.84 536.23h2.3v77.19h-2.3zM524.11 536.23h2.3v77.19h-2.3zM527.39 536.23h2.3v75.16h-2.3zM530.66 536.23h2.3v75.16h-2.3zM533.94 536.23h2.3v75.16h-2.3zM537.21 536.23h2.3v75.16h-2.3zM540.49 536.23h2.3v76.38h-2.3zM543.76 536.23h2.3v76.38h-2.3zM547.04 536.23h2.3v76.38h-2.3zM550.31 536.23h2.3v76.38h-2.3zM553.59 536.23h2.3v73.12h-2.3zM556.86 536.23h2.3v73.12h-2.3zM560.14 536.23h2.3v73.12h-2.3zM563.41 536.23h2.3v73.12h-2.3zM566.69 536.23h2.3v71.3h-2.3zM569.96 536.23h2.3v71.3h-2.3zM573.24 536.23h2.3v71.3h-2.3zM576.51 536.23h2.3v71.3h-2.3zM579.79 536.23h2.3v63.17h-2.3zM583.06 536.23h2.3v63.17h-2.3zM586.34 536.23h2.3v63.17h-2.3zM589.61 536.23h2.3v63.17h-2.3zM592.89 536.23h2.3v59.92h-2.3zM596.16 536.23h2.3v59.92h-2.3zM599.44 536.23h2.3v59.92h-2.3zM602.71 536.23h2.3v59.92h-2.3zM605.99 536.23h2.3v55.05h-2.3zM609.26 536.23h2.3v55.05h-2.3zM612.54 536.23h2.3v55.05h-2.3zM615.81 536.23h2.3v55.05h-2.3zM619.09 536.23h2.3v54.44h-2.3zM622.36 536.23h2.3v54.44h-2.3zM625.64 536.23h2.3v54.44h-2.3zM628.91 536.23h2.3v54.44h-2.3zM632.19 536.23h2.3v51.8h-2.3zM635.46 536.23h2.3v51.8h-2.3zM638.74 536.23h2.3v51.8h-2.3zM642.01 536.23h2.3v51.8h-2.3zM645.29 536.23h2.3v52.41h-2.3zM648.56 536.23h2.3v52.41h-2.3zM651.84 536.23h2.3v52.41h-2.3zM655.11 536.23h2.3v52.41h-2.3zM658.39 536.23h2.3v46.72h-2.3zM661.66 536.23h2.3v46.72h-2.3zM664.94 536.23h2.3v46.72h-2.3zM668.21 536.23h2.3v46.72h-2.3zM671.49 536.23h2.3v34.53h-2.3zM674.76 536.23h2.3v34.53h-2.3zM678.04 536.23h2.3v34.53h-2.3zM681.31 536.23h2.3v34.53h-2.3zM684.59 536.23h2.3v20.52h-2.3zM687.86 536.23h2.3v20.52h-2.3zM691.14 536.23h2.3v20.52h-2.3zM694.41 536.23h2.3v20.52h-2.3zM697.69 536.23h2.3v14.22h-2.3zM700.96 536.23h2.3v14.22h-2.3zM704.24 536.23h2.3v14.22h-2.3zM707.51 536.23h2.3v14.22h-2.3zM710.79 536.23h2.3v9.34h-2.3zM714.06 536.23h2.3v9.34h-2.3zM717.34 536.23h2.3v9.34h-2.3zM720.61 536.23h2.3v9.34h-2.3zM723.89 536.23h2.3v10.16h-2.3zM727.16 536.23h2.3v10.16h-2.3zM730.44 536.23h2.3v10.16h-2.3zM733.71 536.23h2.3v10.16h-2.3zM736.99 536.23h2.3v5.08h-2.3zM740.26 536.23h2.3v5.08h-2.3zM743.54 536.23h2.3v5.08h-2.3zM746.81 536.23h2.3v5.08h-2.3zM750.09 535.22h2.3v1.02h-2.3zM753.36 535.22h2.3v1.02h-2.3zM756.64 535.22h2.3v1.02h-2.3zM759.91 535.22h2.3v1.02h-2.3zM776.29 530.75h2.3v5.48h-2.3zM779.56 530.75h2.3v5.48h-2.3zM782.84 530.75h2.3v5.48h-2.3zM786.11 530.75h2.3v5.48h-2.3zM789.39 532.17h2.3v4.06h-2.3zM792.66 532.17h2.3v4.06h-2.3zM795.94 532.17h2.3v4.06h-2.3zM799.21 532.17h2.3v4.06h-2.3zM802.49 527.3h2.3v8.94h-2.3zM805.76 527.3h2.3v8.94h-2.3zM809.04 527.3h2.3v8.94h-2.3zM812.31 527.3h2.3v8.94h-2.3zM815.59 530.75h2.3v5.48h-2.3zM818.86 530.75h2.3v5.48h-2.3zM822.14 530.75h2.3v5.48h-2.3zM825.41 530.75h2.3v5.48h-2.3zM828.69 529.12h2.3v7.11h-2.3zM831.96 529.12h2.3v7.11h-2.3zM835.24 529.12h2.3v7.11h-2.3zM838.51 529.12h2.3v7.11h-2.3zM841.79 531.77h2.3v4.47h-2.3zM845.06 531.77h2.3v4.47h-2.3zM848.34 531.77h2.3v4.47h-2.3zM851.61 531.77h2.3v4.47h-2.3zM854.89 530.75h2.3v5.48h-2.3zM858.16 530.75h2.3v5.48h-2.3zM861.44 530.75h2.3v5.48h-2.3zM864.71 530.75h2.3v5.48h-2.3zM867.99 530.14h2.3v6.09h-2.3zM871.26 530.14h2.3v6.09h-2.3zM874.54 530.14h2.3v6.09h-2.3zM877.81 530.14h2.3v6.09h-2.3zM881.09 526.08h2.3v10.16h-2.3zM884.36 526.08h2.3v10.16h-2.3zM887.64 526.08h2.3v10.16h-2.3zM890.91 526.08h2.3v10.16h-2.3zM894.19 522.62h2.3v13.61h-2.3zM897.46 522.62h2.3v13.61h-2.3zM900.74 522.62h2.3v13.61h-2.3zM904.01 522.62h2.3v13.61h-2.3zM907.29 525.06h2.3v11.17h-2.3zM910.56 525.06h2.3v11.17h-2.3zM913.84 525.06h2.3v11.17h-2.3zM917.11 525.06h2.3v11.17h-2.3zM920.39 531.36h2.3v4.88h-2.3zM923.66 531.36h2.3v4.88h-2.3zM926.94 531.36h2.3v4.88h-2.3zM930.21 531.36h2.3v4.88h-2.3zM933.49 536.23h2.3v0.61h-2.3zM936.76 536.23h2.3v0.61h-2.3zM940.04 536.23h2.3v0.61h-2.3zM943.31 536.23h2.3v0.61h-2.3zM946.59 531.36h2.3v4.88h-2.3zM949.86 531.36h2.3v4.88h-2.3zM953.14 531.36h2.3v4.88h-2.3zM956.41 531.36h2.3v4.88h-2.3zM959.69 526.08h2.3v10.16h-2.3zM962.96 526.08h2.3v10.16h-2.3zM966.24 526.08h2.3v10.16h-2.3zM969.51 526.08h2.3v10.16h-2.3zM972.79 522.02h2.3v14.22h-2.3zM976.06 522.02h2.3v14.22h-2.3zM979.34 522.02h2.3v14.22h-2.3zM982.61 522.02h2.3v14.22h-2.3z"/><path fill="#552f1e" d="M3.39 502.31h3.29v33.92h-3.29zM6.66 502.31h3.29v33.92h-3.29zM9.94 502.31h3.29v33.92h-3.29zM13.21 502.31h3.29v33.92h-3.29zM16.49 517.95h3.29v18.28h-3.29zM19.76 517.95h3.29v18.28h-3.29zM23.04 517.95h3.29v18.28h-3.29zM26.31 517.95h3.29v18.28h-3.29zM29.59 524.05h3.29v12.19h-3.29zM32.86 524.05h3.29v12.19h-3.29zM36.14 524.05h3.29v12.19h-3.29zM39.41 524.05h3.29v12.19h-3.29zM42.69 536.23h3.29v0.81h-3.29zM45.96 536.23h3.29v0.81h-3.29zM49.24 536.23h3.29v0.81h-3.29zM52.51 536.23h3.29v0.81h-3.29zM55.79 533.19h3.29v3.05h-3.29zM59.06 533.19h3.29v3.05h-3.29zM62.34 533.19h3.29v3.05h-3.29zM65.61 533.19h3.29v3.05h-3.29zM68.89 534.41h3.29v1.83h-3.29zM72.16 534.41h3.29v1.83h-3.29zM75.44 534.41h3.29v1.83h-3.29zM78.71 534.41h3.29v1.83h-3.29zM81.99 530.75h3.29v5.48h-3.29zM85.26 530.75h3.29v5.48h-3.29zM88.54 530.75h3.29v5.48h-3.29zM91.81 530.75h3.29v5.48h-3.29zM95.09 525.67h3.29v10.56h-3.29zM98.36 525.67h3.29v10.56h-3.29zM101.64 525.67h3.29v10.56h-3.29zM104.91 525.67h3.29v10.56h-3.29zM108.19 521h3.29v15.23h-3.29zM111.46 521h3.29v15.23h-3.29zM114.74 521h3.29v15.23h-3.29zM118.01 521h3.29v15.23h-3.29zM121.29 523.64h3.29v12.59h-3.29zM124.56 523.64h3.29v12.59h-3.29zM127.84 523.64h3.29v12.59h-3.29zM131.11 523.64h3.29v12.59h-3.29zM134.39 530.75h3.29v5.48h-3.29zM137.66 530.75h3.29v5.48h-3.29zM140.94 530.75h3.29v5.48h-3.29zM144.21 530.75h3.29v5.48h-3.29zM147.49 519.98h3.29v16.25h-3.29zM150.76 519.98h3.29v16.25h-3.29zM154.04 519.98h3.29v16.25h-3.29zM157.31 519.98h3.29v16.25h-3.29zM160.59 535.22h3.29v1.02h-3.29zM163.86 535.22h3.29v1.02h-3.29zM167.14 535.22h3.29v1.02h-3.29zM170.41 535.22h3.29v1.02h-3.29zM173.69 533.19h3.29v3.05h-3.29zM176.96 533.19h3.29v3.05h-3.29zM180.24 533.19h3.29v3.05h-3.29zM183.51 533.19h3.29v3.05h-3.29zM186.79 519.98h3.29v16.25h-3.29zM190.06 519.98h3.29v16.25h-3.29zM193.34 519.98h3.29v16.25h-3.29zM196.61 519.98h3.29v16.25h-3.29zM199.89 505.97h3.29v30.27h-3.29zM203.16 505.97h3.29v30.27h-3.29zM206.44 505.97h3.29v30.27h-3.29zM209.71 505.97h3.29v30.27h-3.29zM212.99 511.86h3.29v24.38h-3.29zM216.26 511.86h3.29v24.38h-3.29zM219.54 511.86h3.29v24.38h-3.29zM222.81 511.86h3.29v24.38h-3.29zM226.09 522.62h3.29v13.61h-3.29zM229.36 522.62h3.29v13.61h-3.29zM232.64 522.62h3.29v13.61h-3.29zM235.91 522.62h3.29v13.61h-3.29zM239.19 534.41h3.29v1.83h-3.29zM242.46 534.41h3.29v1.83h-3.29zM245.74 534.41h3.29v1.83h-3.29zM249.01 534.41h3.29v1.83h-3.29zM252.29 535.62h3.29v0.61h-3.29zM255.56 535.62h3.29v0.61h-3.29zM258.84 535.62h3.29v0.61h-3.29zM262.11 535.62h3.29v0.61h-3.29zM265.39 525.06h3.29v11.17h-3.29zM268.66 525.06h3.29v11.17h-3.29zM271.94 525.06h3.29v11.17h-3.29zM275.21 525.06h3.29v11.17h-3.29zM278.49 530.14h3.29v6.09h-3.29zM281.76 530.14h3.29v6.09h-3.29zM285.04 530.14h3.29v6.09h-3.29zM288.31 530.14h3.29v6.09h-3.29zM291.59 532.38h3.29v3.86h-3.29zM294.86 532.38h3.29v3.86h-3.29zM298.14 532.38h3.29v3.86h-3.29zM301.41 532.38h3.29v3.86h-3.29zM304.69 536.23h3.29v10.16h-3.29zM307.96 536.23h3.29v10.16h-3.29zM311.24 536.23h3.29v10.16h-3.29zM314.51 536.23h3.29v10.16h-3.29zM317.79 536.23h3.29v10.36h-3.29zM321.06 536.23h3.29v10.36h-3.29zM324.34 536.23h3.29v10.36h-3.29zM327.61 536.23h3.29v10.36h-3.29zM330.89 536.23h3.29v29.05h-3.29zM334.16 536.23h3.29v29.05h-3.29zM337.44 536.23h3.29v29.05h-3.29zM340.71 536.23h3.29v29.05h-3.29zM343.99 536.23h3.29v8.94h-3.29zM347.26 536.23h3.29v8.94h-3.29zM350.54 536.23h3.29v8.94h-3.29zM353.81 536.23h3.29v8.94h-3.29zM357.09 536.23h3.29v31.48h-3.29zM360.36 536.23h3.29v31.48h-3.29zM363.64 536.23h3.29v31.48h-3.29zM366.91 536.23h3.29v31.48h-3.29zM370.19 536.23h3.29v36.56h-3.29zM373.46 536.23h3.29v36.56h-3.29zM376.74 536.23h3.29v36.56h-3.29zM380.01 536.23h3.29v36.56h-3.29zM383.29 536.23h3.29v44.69h-3.29zM386.56 536.23h3.29v44.69h-3.29zM389.84 536.23h3.29v44.69h-3.29zM393.11 536.23h3.29v44.69h-3.29zM396.39 536.23h3.29v16.86h-3.29zM399.66 536.23h3.29v16.86h-3.29zM402.94 536.23h3.29v16.86h-3.29zM406.21 536.23h3.29v16.86h-3.29zM409.49 536.23h3.29v23.36h-3.29zM412.76 536.23h3.29v23.36h-3.29zM416.04 536.23h3.29v23.36h-3.29zM419.31 536.23h3.29v23.36h-3.29zM422.59 536.23h3.29v15.23h-3.29zM425.86 536.23h3.29v15.23h-3.29zM429.14 536.23h3.29v15.23h-3.29zM432.41 536.23h3.29v15.23h-3.29zM435.69 536.23h3.29v46.92h-3.29zM438.96 536.23h3.29v46.92h-3.29zM442.24 536.23h3.29v46.92h-3.29zM445.51 536.23h3.29v46.92h-3.29zM448.79 536.23h3.29v49.36h-3.29zM452.06 536.23h3.29v49.36h-3.29zM455.34 536.23h3.29v49.36h-3.29zM458.61 536.23h3.29v49.36h-3.29zM461.89 536.23h3.29v39.81h-3.29zM465.16 536.23h3.29v39.81h-3.29zM468.44 536.23h3.29v39.81h-3.29zM471.71 536.23h3.29v39.81h-3.29zM474.99 536.23h3.29v65.61h-3.29zM478.26 536.23h3.29v65.61h-3.29zM481.54 536.23h3.29v65.61h-3.29zM484.81 536.23h3.29v65.61h-3.29zM488.09 536.23h3.29v53.42h-3.29zM491.36 536.23h3.29v53.42h-3.29zM494.64 536.23h3.29v53.42h-3.29zM497.91 536.23h3.29v53.42h-3.29zM501.19 536.23h3.29v72.72h-3.29zM504.46 536.23h3.29v72.72h-3.29zM507.74 536.23h3.29v72.72h-3.29zM511.01 536.23h3.29v72.72h-3.29zM514.29 536.23h3.29v34.53h-3.29zM517.56 536.23h3.29v34.53h-3.29zM520.84 536.23h3.29v34.53h-3.29zM524.11 536.23h3.29v34.53h-3.29zM527.39 536.23h3.29v26.41h-3.29zM530.66 536.23h3.29v26.41h-3.29zM533.94 536.23h3.29v26.41h-3.29zM537.21 536.23h3.29v26.41h-3.29zM540.49 536.23h3.29v76.38h-3.29zM543.76 536.23h3.29v76.38h-3.29zM547.04 536.23h3.29v76.38h-3.29zM550.31 536.23h3.29v76.38h-3.29zM553.59 536.23h3.29v24.98h-3.29zM556.86 536.23h3.29v24.98h-3.29zM560.14 536.23h3.29v24.98h-3.29zM563.41 536.23h3.29v24.98h-3.29zM566.69 536.23h3.29v47.94h-3.29zM569.96 536.23h3.29v47.94h-3.29zM573.24 536.23h3.29v47.94h-3.29zM576.51 536.23h3.29v47.94h-3.29zM579.79 536.23h3.29v3.66h-3.29zM583.06 536.23h3.29v3.66h-3.29zM586.34 536.23h3.29v3.66h-3.29zM589.61 536.23h3.29v3.66h-3.29zM592.89 536.23h3.29v57.89h-3.29zM596.16 536.23h3.29v57.89h-3.29zM599.44 536.23h3.29v57.89h-3.29zM602.71 536.23h3.29v57.89h-3.29zM605.99 536.23h3.29v22.95h-3.29zM609.26 536.23h3.29v22.95h-3.29zM612.54 536.23h3.29v22.95h-3.29zM615.81 536.23h3.29v22.95h-3.29zM619.09 536.23h3.29v52.81h-3.29zM622.36 536.23h3.29v52.81h-3.29zM625.64 536.23h3.29v52.81h-3.29zM628.91 536.23h3.29v52.81h-3.29zM632.19 536.23h3.29v22.55h-3.29zM635.46 536.23h3.29v22.55h-3.29zM638.74 536.23h3.29v22.55h-3.29zM642.01 536.23h3.29v22.55h-3.29zM645.29 536.23h3.29v51.8h-3.29zM648.56 536.23h3.29v51.8h-3.29zM651.84 536.23h3.29v51.8h-3.29zM655.11 536.23h3.29v51.8h-3.29zM658.39 536.23h3.29v5.28h-3.29zM661.66 536.23h3.29v5.28h-3.29zM664.94 536.23h3.29v5.28h-3.29zM668.21 536.23h3.29v5.28h-3.29zM671.49 536.23h3.29v3.66h-3.29zM674.76 536.23h3.29v3.66h-3.29zM678.04 536.23h3.29v3.66h-3.29zM681.31 536.23h3.29v3.66h-3.29zM684.59 536.23h3.29v8.73h-3.29zM687.86 536.23h3.29v8.73h-3.29zM691.14 536.23h3.29v8.73h-3.29zM694.41 536.23h3.29v8.73h-3.29zM697.69 536.23h3.29v11.17h-3.29zM700.96 536.23h3.29v11.17h-3.29zM704.24 536.23h3.29v11.17h-3.29zM707.51 536.23h3.29v11.17h-3.29zM710.79 536.23h3.29v7.31h-3.29zM714.06 536.23h3.29v7.31h-3.29zM717.34 536.23h3.29v7.31h-3.29zM720.61 536.23h3.29v7.31h-3.29zM723.89 536.23h3.29v8.73h-3.29zM727.16 536.23h3.29v8.73h-3.29zM730.44 536.23h3.29v8.73h-3.29zM733.71 536.23h3.29v8.73h-3.29zM736.99 536.23h3.29v3.25h-3.29zM740.26 536.23h3.29v3.25h-3.29zM743.54 536.23h3.29v3.25h-3.29zM746.81 536.23h3.29v3.25h-3.29zM763.19 536.23h3.29v1.22h-3.29zM766.46 536.23h3.29v1.22h-3.29zM769.74 536.23h3.29v1.22h-3.29zM773.01 536.23h3.29v1.22h-3.29zM789.39 533.19h3.29v3.05h-3.29zM792.66 533.19h3.29v3.05h-3.29zM795.94 533.19h3.29v3.05h-3.29zM799.21 533.19h3.29v3.05h-3.29zM815.59 530.75h3.29v5.48h-3.29zM818.86 530.75h3.29v5.48h-3.29zM822.14 530.75h3.29v5.48h-3.29zM825.41 530.75h3.29v5.48h-3.29zM828.69 534.41h3.29v1.83h-3.29zM831.96 534.41h3.29v1.83h-3.29zM835.24 534.41h3.29v1.83h-3.29zM838.51 534.41h3.29v1.83h-3.29zM841.79 533.19h3.29v3.05h-3.29zM845.06 533.19h3.29v3.05h-3.29zM848.34 533.19h3.29v3.05h-3.29zM851.61 533.19h3.29v3.05h-3.29zM854.89 533.8h3.29v2.44h-3.29zM858.16 533.8h3.29v2.44h-3.29zM861.44 533.8h3.29v2.44h-3.29zM864.71 533.8h3.29v2.44h-3.29zM867.99 533.19h3.29v3.05h-3.29zM871.26 533.19h3.29v3.05h-3.29zM874.54 533.19h3.29v3.05h-3.29zM877.81 533.19h3.29v3.05h-3.29zM881.09 532.78h3.29v3.45h-3.29zM884.36 532.78h3.29v3.45h-3.29zM887.64 532.78h3.29v3.45h-3.29zM890.91 532.78h3.29v3.45h-3.29zM894.19 529.33h3.29v6.91h-3.29zM897.46 529.33h3.29v6.91h-3.29zM900.74 529.33h3.29v6.91h-3.29zM904.01 529.33h3.29v6.91h-3.29zM907.29 528.72h3.29v7.52h-3.29zM910.56 528.72h3.29v7.52h-3.29zM913.84 528.72h3.29v7.52h-3.29zM917.11 528.72h3.29v7.52h-3.29zM920.39 532.38h3.29v3.86h-3.29zM923.66 532.38h3.29v3.86h-3.29zM926.94 532.38h3.29v3.86h-3.29zM930.21 532.38h3.29v3.86h-3.29zM933.49 536.23h3.29v0.81h-3.29zM936.76 536.23h3.29v0.81h-3.29zM940.04 536.23h3.29v0.81h-3.29zM943.31 536.23h3.29v0.81h-3.29zM946.59 535.83h3.29v0.41h-3.29zM949.86 535.83h3.29v0.41h-3.29zM953.14 535.83h3.29v0.41h-3.29zM956.41 535.83h3.29v0.41h-3.29zM959.69 530.75h3.29v5.48h-3.29zM962.96 530.75h3.29v5.48h-3.29zM966.24 530.75h3.29v5.48h-3.29zM969.51 530.75h3.29v5.48h-3.29zM972.79 529.73h3.29v6.5h-3.29zM976.06 529.73h3.29v6.5h-3.29zM979.34 529.73h3.29v6.5h-3.29zM982.61 529.73h3.29v6.5h-3.29z"/><path fill="#ff8552" d="M3.39 502.31h2.3v33.92h-2.3zM6.66 502.31h2.3v33.92h-2.3zM9.94 502.31h2.3v33.92h-2.3zM13.21 502.31h2.3v33.92h-2.3zM16.49 517.95h2.3v18.28h-2.3zM19.76 517.95h2.3v18.28h-2.3zM23.04 517.95h2.3v18.28h-2.3zM26.31 517.95h2.3v18.28h-2.3zM29.59 524.05h2.3v12.19h-2.3zM32.86 524.05h2.3v12.19h-2.3zM36.14 524.05h2.3v12.19h-2.3zM39.41 524.05h2.3v12.19h-2.3zM42.69 536.23h2.3v0.81h-2.3zM45.96 536.23h2.3v0.81h-2.3zM49.24 536.23h2.3v0.81h-2.3zM52.51 536.23h2.3v0.81h-2.3zM55.79 533.19h2.3v3.05h-2.3zM59.06 533.19h2.3v3.05h-2.3zM62.34 533.19h2.3v3.05h-2.3zM65.61 533.19h2.3v3.05h-2.3zM68.89 534.41h2.3v1.83h-2.3zM72.16 534.41h2.3v1.83h-2.3zM75.44 534.41h2.3v1.83h-2.3zM78.71 534.41h2.3v1.83h-2.3zM81.99 530.75h2.3v5.48h-2.3zM85.26 530.75h2.3v5.48h-2.3zM88.54 530.75h2.3v5.48h-2.3zM91.81 530.75h2.3v5.48h-2.3zM95.09 525.67h2.3v10.56h-2.3zM98.36 525.67h2.3v10.56h-2.3zM101.64 525.67h2.3v10.56h-2.3zM104.91 525.67h2.3v10.56h-2.3zM108.19 521h2.3v15.23h-2.3zM111.46 521h2.3v15.23h-2.3zM114.74 521h2.3v15.23h-2.3zM118.01 521h2.3v15.23h-2.3zM121.29 523.64h2.3v12.59h-2.3zM124.56 523.64h2.3v12.59h-2.3zM127.84 523.64h2.3v12.59h-2.3zM131.11 523.64h2.3v12.59h-2.3zM134.39 530.75h2.3v5.48h-2.3zM137.66 530.75h2.3v5.48h-2.3zM140.94 530.75h2.3v5.48h-2.3zM144.21 530.75h2.3v5.48h-2.3zM147.49 519.98h2.3v16.25h-2.3zM150.76 519.98h2.3v16.25h-2.3zM154.04 519.98h2.3v16.25h-2.3zM157.31 519.98h2.3v16.25h-2.3zM160.59 535.22h2.3v1.02h-2.3zM163.86 535.22h2.3v1.02h-2.3zM167.14 535.22h2.3v1.02h-2.3zM170.41 535.22h2.3v1.02h-2.3zM173.69 533.19h2.3v3.05h-2.3zM176.96 533.19h2.3v3.05h-2.3zM180.24 533.19h2.3v3.05h-2.3zM183.51 533.19h2.3v3.05h-2.3zM186.79 519.98h2.3v16.25h-2.3zM190.06 519.98h2.3v16.25h-2.3zM193.34 519.98h2.3v16.25h-2.3zM196.61 519.98h2.3v16.25h-2.3zM199.89 505.97h2.3v30.27h-2.3zM203.16 505.97h2.3v30.27h-2.3zM206.44 505.97h2.3v30.27h-2.3zM209.71 505.97h2.3v30.27h-2.3zM212.99 511.86h2.3v24.38h-2.3zM216.26 511.86h2.3v24.38h-2.3zM219.54 511.86h2.3v24.38h-2.3zM222.81 511.86h2.3v24.38h-2.3zM226.09 522.62h2.3v13.61h-2.3zM229.36 522.62h2.3v13.61h-2.3zM232.64 522.62h2.3v13.61h-2.3zM235.91 522.62h2.3v13.61h-2.3zM239.19 534.41h2.3v1.83h-2.3zM242.46 534.41h2.3v1.83h-2.3zM245.74 534.41h2.3v1.83h-2.3zM249.01 534.41h2.3v1.83h-2.3zM252.29 535.62h2.3v0.61h-2.3zM255.56 535.62h2.3v0.61h-2.3zM258.84 535.62h2.3v0.61h-2.3zM262.11 535.62h2.3v0.61h-2.3zM265.39 525.06h2.3v11.17h-2.3zM268.66 525.06h2.3v11.17h-2.3zM271.94 525.06h2.3v11.17h-2.3zM275.21 525.06h2.3v11.17h-2.3zM278.49 530.14h2.3v6.09h-2.3zM281.76 530.14h2.3v6.09h-2.3zM285.04 530.14h2.3v6.09h-2.3zM288.31 530.14h2.3v6.09h-2.3zM291.59 532.38h2.3v3.86h-2.3zM294.86 532.38h2.3v3.86h-2.3zM298.14 532.38h2.3v3.86h-2.3zM301.41 532.38h2.3v3.86h-2.3zM304.69 536.23h2.3v10.16h-2.3zM307.96 536.23h2.3v10.16h-2.3zM311.24 536.23h2.3v10.16h-2.3zM314.51 536.23h2.3v10.16h-2.3zM317.79 536.23h2.3v10.36h-2.3zM321.06 536.23h2.3v10.36h-2.3zM324.34 536.23h2.3v10.36h-2.3zM327.61 536.23h2.3v10.36h-2.3zM330.89 536.23h2.3v29.05h-2.3zM334.16 536.23h2.3v29.05h-2.3zM337.44 536.23h2.3v29.05h-2.3zM340.71 536.23h2.3v29.05h-2.3zM343.99 536.23h2.3v8.94h-2.3zM347.26 536.23h2.3v8.94h-2.3zM350.54 536.23h2.3v8.94h-2.3zM353.81 536.23h2.3v8.94h-2.3zM357.09 536.23h2.3v31.48h-2.3zM360.36 536.23h2.3v31.48h-2.3zM363.64 536.23h2.3v31.48h-2.3zM366.91 536.23h2.3v31.48h-2.3zM370.19 536.23h2.3v36.56h-2.3zM373.46 536.23h2.3v36.56h-2.3zM376.74 536.23h2.3v36.56h-2.3zM380.01 536.23h2.3v36.56h-2.3zM383.29 536.23h2.3v44.69h-2.3zM386.56 536.23h2.3v44.69h-2.3zM389.84 536.23h2.3v44.69h-2.3zM393.11 536.23h2.3v44.69h-2.3zM396.39 536.23h2.3v16.86h-2.3zM399.66 536.23h2.3v16.86h-2.3zM402.94 536.23h2.3v16.86h-2.3zM406.21 536.23h2.3v16.86h-2.3zM409.49 536.23h2.3v23.36h-2.3zM412.76 536.23h2.3v23.36h-2.3zM416.04 536.23h2.3v23.36h-2.3zM419.31 536.23h2.3v23.36h-2.3zM422.59 536.23h2.3v15.23h-2.3zM425.86 536.23h2.3v15.23h-2.3zM429.14 536.23h2.3v15.23h-2.3zM432.41 536.23h2.3v15.23h-2.3zM435.69 536.23h2.3v46.92h-2.3zM438.96 536.23h2.3v46.92h-2.3zM442.24 536.23h2.3v46.92h-2.3zM445.51 536.23h2.3v46.92h-2.3zM448.79 536.23h2.3v49.36h-2.3zM452.06 536.23h2.3v49.36h-2.3zM455.34 536.23h2.3v49.36h-2.3zM458.61 536.23h2.3v49.36h-2.3zM461.89 536.23h2.3v39.81h-2.3zM465.16 536.23h2.3v39.81h-2.3zM468.44 536.23h2.3v39.81h-2.3zM471.71 536.23h2.3v39.81h-2.3zM474.99 536.23h2.3v65.61h-2.3zM478.26 536.23h2.3v65.61h-2.3zM481.54 536.23h2.3v65.61h-2.3zM484.81 536.23h2.3v65.61h-2.3zM488.09 536.23h2.3v53.42h-2.3zM491.36 536.23h2.3v53.42h-2.3zM494.64 536.23h2.3v53.42h-2.3zM497.91 536.23h2.3v53.42h-2.3zM501.19 536.23h2.3v72.72h-2.3zM504.46 536.23h2.3v72.72h-2.3zM507.74 536.23h2.3v72.72h-2.3zM511.01 536.23h2.3v72.72h-2.3zM514.29 536.23h2.3v34.53h-2.3zM517.56 536.23h2.3v34.53h-2.3zM520.84 536.23h2.3v34.53h-2.3zM524.11 536.23h2.3v34.53h-2.3zM527.39 536.23h2.3v26.41h-2.3zM530.66 536.23h2.3v26.41h-2.3zM533.94 536.23h2.3v26.41h-2.3zM537.21 536.23h2.3v26.41h-2.3zM540.49 536.23h2.3v76.38h-2.3zM543.76 536.23h2.3v76.38h-2.3zM547.04 536.23h2.3v76.38h-2.3zM550.31 536.23h2.3v76.38h-2.3zM553.59 536.23h2.3v24.98h-2.3zM556.86 536.23h2.3v24.98h-2.3zM560.14 536.23h2.3v24.98h-2.3zM563.41 536.23h2.3v24.98h-2.3zM566.69 536.23h2.3v47.94h-2.3zM569.96 536.23h2.3v47.94h-2.3zM573.24 536.23h2.3v47.94h-2.3zM576.51 536.23h2.3v47.94h-2.3zM579.79 536.23h2.3v3.66h-2.3zM583.06 536.23h2.3v3.66h-2.3zM586.34 536.23h2.3v3.66h-2.3zM589.61 536.23h2.3v3.66h-2.3zM592.89 536.23h2.3v57.89h-2.3zM596.16 536.23h2.3v57.89h-2.3zM599.44 536.23h2.3v57.89h-2.3zM602.71 536.23h2.3v57.89h-2.3zM605.99 536.23h2.3v22.95h-2.3zM609.26 536.23h2.3v22.95h-2.3zM612.54 536.23h2.3v22.95h-2.3zM615.81 536.23h2.3v22.95h-2.3zM619.09 536.23h2.3v52.81h-2.3zM622.36 536.23h2.3v52.81h-2.3zM625.64 536.23h2.3v52.81h-2.3zM628.91 536.23h2.3v52.81h-2.3zM632.19 536.23h2.3v22.55h-2.3zM635.46 536.23h2.3v22.55h-2.3zM638.74 536.23h2.3v22.55h-2.3zM642.01 536.23h2.3v22.55h-2.3zM645.29 536.23h2.3v51.8h-2.3zM648.56 536.23h2.3v51.8h-2.3zM651.84 536.23h2.3v51.8h-2.3zM655.11 536.23h2.3v51.8h-2.3zM658.39 536.23h2.3v5.28h-2.3zM661.66 536.23h2.3v5.28h-2.3zM664.94 536.23h2.3v5.28h-2.3zM668.21 536.23h2.3v5.28h-2.3zM671.49 536.23h2.3v3.66h-2.3zM674.76 536.23h2.3v3.66h-2.3zM678.04 536.23h2.3v3.66h-2.3zM681.31 536.23h2.3v3.66h-2.3zM684.59 536.23h2.3v8.73h-2.3zM687.86 536.23h2.3v8.73h-2.3zM691.14 536.23h2.3v8.73h-2.3zM694.41 536.23h2.3v8.73h-2.3zM697.69 536.23h2.3v11.17h-2.3zM700.96 536.23h2.3v11.17h-2.3zM704.24 536.23h2.3v11.17h-2.3zM707.51 536.23h2.3v11.17h-2.3zM710.79 536.23h2.3v7.31h-2.3zM714.06 536.23h2.3v7.31h-2.3zM717.34 536.23h2.3v7.31h-2.3zM720.61 536.23h2.3v7.31h-2.3zM723.89 536.23h2.3v8.73h-2.3zM727.16 536.23h2.3v8.73h-2.3zM730.44 536.23h2.3v8.73h-2.3zM733.71 536.23h2.3v8.73h-2.3zM736.99 536.23h2.3v3.25h-2.3zM740.26 536.23h2.3v3.25h-2.3zM743.54 536.23h2.3v3.25h-2.3zM746.81 536.23h2.3v3.25h-2.3zM763.19 536.23h2.3v1.22h-2.3zM766.46 536.23h2.3v1.22h-2.3zM769.74 536.23h2.3v1.22h-2.3zM773.01 536.23h2.3v1.22h-2.3zM789.39 533.19h2.3v3.05h-2.3zM792.66 533.19h2.3v3.05h-2.3zM795.94 533.19h2.3v3.05h-2.3zM799.21 533.19h2.3v3.05h-2.3zM815.59 530.75h2.3v5.48h-2.3zM818.86 530.75h2.3v5.48h-2.3zM822.14 530.75h2.3v5.48h-2.3zM825.41 530.75h2.3v5.48h-2.3zM828.69 534.41h2.3v1.83h-2.3zM831.96 534.41h2.3v1.83h-2.3zM835.24 534.41h2.3v1.83h-2.3zM838.51 534.41h2.3v1.83h-2.3zM841.79 533.19h2.3v3.05h-2.3zM845.06 533.19h2.3v3.05h-2.3zM848.34 533.19h2.3v3.05h-2.3zM851.61 533.19h2.3v3.05h-2.3zM854.89 533.8h2.3v2.44h-2.3zM858.16 533.8h2.3v2.44h-2.3zM861.44 533.8h2.3v2.44h-2.3zM864.71 533.8h2.3v2.44h-2.3zM867.99 533.19h2.3v3.05h-2.3zM871.26 533.19h2.3v3.05h-2.3zM874.54 533.19h2.3v3.05h-2.3zM877.81 533.19h2.3v3.05h-2.3zM881.09 532.78h2.3v3.45h-2.3zM884.36 532.78h2.3v3.45h-2.3zM887.64 532.78h2.3v3.45h-2.3zM890.91 532.78h2.3v3.45h-2.3zM894.19 529.33h2.3v6.91h-2.3zM897.46 529.33h2.3v6.91h-2.3zM900.74 529.33h2.3v6.91h-2.3zM904.01 529.33h2.3v6.91h-2.3zM907.29 528.72h2.3v7.52h-2.3zM910.56 528.72h2.3v7.52h-2.3zM913.84 528.72h2.3v7.52h-2.3zM917.11 528.72h2.3v7.52h-2.3zM920.39 532.38h2.3v3.86h-2.3zM923.66 532.38h2.3v3.86h-2.3zM926.94 532.38h2.3v3.86h-2.3zM930.21 532.38h2.3v3.86h-2.3zM933.49 536.23h2.3v0.81h-2.3zM936.76 536.23h2.3v0.81h-2.3zM940.04 536.23h2.3v0.81h-2.3zM943.31 536.23h2.3v0.81h-2.3zM946.59 535.83h2.3v0.41h-2.3zM949.86 535.83h2.3v0.41h-2.3zM953.14 535.83h2.3v0.41h-2.3zM956.41 535.83h2.3v0.41h-2.3zM959.69 530.75h2.3v5.48h-2.3zM962.96 530.75h2.3v5.48h-2.3zM966.24 530.75h2.3v5.48h-2.3zM969.51 530.75h2.3v5.48h-2.3zM972.79 529.73h2.3v6.5h-2.3zM976.06 529.73h2.3v6.5h-2.3zM979.34 529.73h2.3v6.5h-2.3zM982.61 529.73h2.3v6.5h-2.3z"/></g>
<g clip-path="url(#c3)"><path fill="#1f3e00" d="M68.89 655.2h3.29v14.62h-3.29zM72.16 655.2h3.29v14.62h-3.29zM75.44 655.2h3.29v14.62h-3.29zM78.71 655.2h3.29v14.62h-3.29zM81.99 650.12h3.29v19.7h-3.29zM85.26 650.12h3.29v19.7h-3.29zM88.54 650.12h3.29v19.7h-3.29zM91.81 650.12h3.29v19.7h-3.29zM95.09 644.03h3.29v25.8h-3.29zM98.36 644.03h3.29v25.8h-3.29zM101.64 644.03h3.29v25.8h-3.29zM104.91 644.03h3.29v25.8h-3.29zM108.19 643.02h3.29v26.81h-3.29zM111.46 643.02h3.29v26.81h-3.29zM114.74 643.02h3.29v26.81h-3.29zM118.01 643.02h3.29v26.81h-3.29zM134.39 643.02h3.29v26.81h-3.29zM137.66 643.02h3.29v26.81h-3.29zM140.94 643.02h3.29v26.81h-3.29zM144.21 643.02h3.29v26.81h-3.29zM160.59 643.02h3.29v26.81h-3.29zM163.86 643.02h3.29v26.81h-3.29zM167.14 643.02h3.29v26.81h-3.29zM170.41 643.02h3.29v26.81h-3.29zM173.69 634.28h3.29v35.55h-3.29zM176.96 634.28h3.29v35.55h-3.29zM180.24 634.28h3.29v35.55h-3.29zM183.51 634.28h3.29v35.55h-3.29zM186.79 628.59h3.29v41.23h-3.29zM190.06 628.59h3.29v41.23h-3.29zM193.34 628.59h3.29v41.23h-3.29zM196.61 628.59h3.29v41.23h-3.29zM252.29 650.53h3.29v19.3h-3.29zM255.56 650.53h3.29v19.3h-3.29zM258.84 650.53h3.29v19.3h-3.29zM262.11 650.53h3.29v19.3h-3.29zM409.49 669.83h3.29v52.2h-3.29zM412.76 669.83h3.29v52.2h-3.29zM416.04 669.83h3.29v52.2h-3.29zM419.31 669.83h3.29v52.2h-3.29zM422.59 669.83h3.29v47.33h-3.29zM425.86 669.83h3.29v47.33h-3.29zM429.14 669.83h3.29v47.33h-3.29zM432.41 669.83h3.29v47.33h-3.29zM527.39 669.83h3.29v73.73h-3.29zM530.66 669.83h3.29v73.73h-3.29zM533.94 669.83h3.29v73.73h-3.29zM537.21 669.83h3.29v73.73h-3.29zM553.59 669.83h3.29v72.11h-3.29zM556.86 669.83h3.29v72.11h-3.29zM560.14 669.83h3.29v72.11h-3.29zM563.41 669.83h3.29v72.11h-3.29zM566.69 669.83h3.29v69.47h-3.29zM569.96 669.83h3.29v69.47h-3.29zM573.24 669.83h3.29v69.47h-3.29zM576.51 669.83h3.29v69.47h-3.29zM579.79 669.83h3.29v61.55h-3.29zM583.06 669.83h3.29v61.55h-3.29zM586.34 669.83h3.29v61.55h-3.29zM589.61 669.83h3.29v61.55h-3.29zM592.89 669.83h3.29v57.89h-3.29zM596.16 669.83h3.29v57.89h-3.29zM599.44 669.83h3.29v57.89h-3.29zM602.71 669.83h3.29v57.89h-3.29zM605.99 669.83h3.29v53.22h-3.29zM609.26 669.83h3.29v53.22h-3.29zM612.54 669.83h3.29v53.22h-3.29zM615.81 669.83h3.29v53.22h-3.29zM619.09 669.83h3.29v53.22h-3.29zM622.36 669.83h3.29v53.22h-3.29zM625.64 669.83h3.29v53.22h-3.29zM628.91 669.83h3.29v53.22h-3.29zM632.19 669.83h3.29v50.17h-3.29zM635.46 669.83h3.29v50.17h-3.29zM638.74 669.83h3.29v50.17h-3.29zM642.01 669.83h3.29v50.17h-3.29zM658.39 669.83h3.29v45.09h-3.29zM661.66 669.83h3.29v45.09h-3.29zM664.94 669.83h3.29v45.09h-3.29zM668.21 669.83h3.29v45.09h-3.29zM671.49 669.83h3.29v32.91h-3.29zM674.76 669.83h3.29v32.91h-3.29zM678.04 669.83h3.29v32.91h-3.29zM681.31 669.83h3.29v32.91h-3.29zM684.59 669.83h3.29v19.7h-3.29zM687.86 669.83h3.29v19.7h-3.29zM691.14 669.83h3.29v19.7h-3.29zM694.41 669.83h3.29v19.7h-3.29zM697.69 669.83h3.29v12.8h-3.29zM700.96 669.83h3.29v12.8h-3.29zM704.24 669.83h3.29v12.8h-3.29zM707.51 669.83h3.29v12.8h-3.29zM710.79 669.83h3.29v8.12h-3.29zM714.06 669.83h3.29v8.12h-3.29zM717.34 669.83h3.29v8.12h-3.29zM720.61 669.83h3.29v8.12h-3.29zM736.99 669.83h3.29v5.08h-3.29zM740.26 669.83h3.29v5.08h-3.29zM743.54 669.83h3.29v5.08h-3.29zM746.81 669.83h3.29v5.08h-3.29zM750.09 668.2h3.29v1.62h-3.29zM753.36 668.2h3.29v1.62h-3.29zM756.64 668.2h3.29v1.62h-3.29zM759.91 668.2h3.29v1.62h-3.29zM776.29 663.73h3.29v6.09h-3.29zM779.56 663.73h3.29v6.09h-3.29zM782.84 663.73h3.29v6.09h-3.29zM786.11 663.73h3.29v6.09h-3.29zM802.49 660.28h3.29v9.55h-3.29zM805.76 660.28h3.29v9.55h-3.29zM809.04 660.28h3.29v9.55h-3.29zM812.31 660.28h3.29v9.55h-3.29zM828.69 662.11h3.29v7.72h-3.29zM831.96 662.11h3.29v7.72h-3.29zM835.24 662.11h3.29v7.72h-3.29zM838.51 662.11h3.29v7.72h-3.29zM854.89 663.73h3.29v6.09h-3.29zM858.16 663.73h3.29v6.09h-3.29zM861.44 663.73h3.29v6.09h-3.29zM864.71 663.73h3.29v6.09h-3.29zM867.99 663.12h3.29v6.7h-3.29zM871.26 663.12h3.29v6.7h-3.29zM874.54 663.12h3.29v6.7h-3.29zM877.81 663.12h3.29v6.7h-3.29zM881.09 658.66h3.29v11.17h-3.29zM884.36 658.66h3.29v11.17h-3.29zM887.64 658.66h3.29v11.17h-3.29zM890.91 658.66h3.29v11.17h-3.29zM894.19 655.2h3.29v14.62h-3.29zM897.46 655.2h3.29v14.62h-3.29zM900.74 655.2h3.29v14.62h-3.29zM904.01 655.2h3.29v14.62h-3.29zM946.59 664.14h3.29v5.69h-3.29zM949.86 664.14h3.29v5.69h-3.29zM953.14 664.14h3.29v5.69h-3.29zM956.41 664.14h3.29v5.69h-3.29zM959.69 658.66h3.29v11.17h-3.29zM962.96 658.66h3.29v11.17h-3.29zM966.24 658.66h3.29v11.17h-3.29zM969.51 658.66h3.29v11.17h-3.29zM972.79 654.59h3.29v15.23h-3.29zM976.06 654.59h3.29v15.23h-3.29zM979.34 654.59h3.29v15.23h-3.29zM982.61 654.59h3.29v15.23h-3.29z"/><path fill="#7cfc00" d="M68.89 655.2h2.3v14.62h-2.3zM72.16 655.2h2.3v14.62h-2.3zM75.44 655.2h2.3v14.62h-2.3zM78.71 655.2h2.3v14.62h-2.3zM81.99 650.12h2.3v19.7h-2.3zM85.26 650.12h2.3v19.7h-2.3zM88.54 650.12h2.3v19.7h-2.3zM91.81 650.12h2.3v19.7h-2.3zM95.09 644.03h2.3v25.8h-2.3zM98.36 644.03h2.3v25.8h-2.3zM101.64 644.03h2.3v25.8h-2.3zM104.91 644.03h2.3v25.8h-2.3zM108.19 643.02h2.3v26.81h-2.3zM111.46 643.02h2.3v26.81h-2.3zM114.74 643.02h2.3v26.81h-2.3zM118.01 643.02h2.3v26.81h-2.3zM134.39 643.02h2.3v26.81h-2.3zM137.66 643.02h2.3v26.81h-2.3zM140.94 643.02h2.3v26.81h-2.3zM144.21 643.02h2.3v26.81h-2.3zM160.59 643.02h2.3v26.81h-2.3zM163.86 643.02h2.3v26.81h-2.3zM167.14 643.02h2.3v26.81h-2.3zM170.41 643.02h2.3v26.81h-2.3zM173.69 634.28h2.3v35.55h-2.3zM176.96 634.28h2.3v35.55h-2.3zM180.24 634.28h2.3v35.55h-2.3zM183.51 634.28h2.3v35.55h-2.3zM186.79 628.59h2.3v41.23h-2.3zM190.06 628.59h2.3v41.23h-2.3zM193.34 628.59h2.3v41.23h-2.3zM196.61 628.59h2.3v41.23h-2.3zM252.29 650.53h2.3v19.3h-2.3zM255.56 650.53h2.3v19.3h-2.3zM258.84 650.53h2.3v19.3h-2.3zM262.11 650.53h2.3v19.3h-2.3zM409.49 669.83h2.3v52.2h-2.3zM412.76 669.83h2.3v52.2h-2.3zM416.04 669.83h2.3v52.2h-2.3zM419.31 669.83h2.3v52.2h-2.3zM422.59 669.83h2.3v47.33h-2.3zM425.86 669.83h2.3v47.33h-2.3zM429.14 669.83h2.3v47.33h-2.3zM432.41 669.83h2.3v47.33h-2.3zM527.39 669.83h2.3v73.73h-2.3zM530.66 669.83h2.3v73.73h-2.3zM533.94 669.83h2.3v73.73h-2.3zM537.21 669.83h2.3v73.73h-2.3zM553.59 669.83h2.3v72.11h-2.3zM556.86 669.83h2.3v72.11h-2.3zM560.14 669.83h2.3v72.11h-2.3zM563.41 669.83h2.3v72.11h-2.3zM566.69 669.83h2.3v69.47h-2.3zM569.96 669.83h2.3v69.47h-2.3zM573.24 669.83h2.3v69.47h-2.3zM576.51 669.83h2.3v69.47h-2.3zM579.79 669.83h2.3v61.55h-2.3zM583.06 669.83h2.3v61.55h-2.3zM586.34 669.83h2.3v61.55h-2.3zM589.61 669.83h2.3v61.55h-2.3zM592.89 669.83h2.3v57.89h-2.3zM596.16 669.83h2.3v57.89h-2.3zM599.44 669.83h2.3v57.89h-2.3zM602.71 669.83h2.3v57.89h-2.3zM605.99 669.83h2.3v53.22h-2.3zM609.26 669.83h2.3v53.22h-2.3zM612.54 669.83h2.3v53.22h-2.3zM615.81 669.83h2.3v53.22h-2.3zM619.09 669.83h2.3v53.22h-2.3zM622.36 669.83h2.3v53.22h-2.3zM625.64 669.83h2.3v53.22h-2.3zM628.91 669.83h2.3v53.22h-2.3zM632.19 669.83h2.3v50.17h-2.3zM635.46 669.83h2.3v50.17h-2.3zM638.74 669.83h2.3v50.17h-2.3zM642.01 669.83h2.3v50.17h-2.3zM658.39 669.83h2.3v45.09h-2.3zM661.66 669.83h2.3v45.09h-2.3zM664.94 669.83h2.3v45.09h-2.3zM668.21 669.83h2.3v45.09h-2.3zM671.49 669.83h2.3v32.91h-2.3zM674.76 669.83h2.3v32.91h-2.3zM678.04 669.83h2.3v32.91h-2.3zM681.31 669.83h2.3v32.91h-2.3zM684.59 669.83h2.3v19.7h-2.3zM687.86 669.83h2.3v19.7h-2.3zM691.14 669.83h2.3v19.7h-2.3zM694.41 669.83h2.3v19.7h-2.3zM697.69 669.83h2.3v12.8h-2.3zM700.96 669.83h2.3v12.8h-2.3zM704.24 669.83h2.3v12.8h-2.3zM707.51 669.83h2.3v12.8h-2.3zM710.79 669.83h2.3v8.12h-2.3zM714.06 669.83h2.3v8.12h-2.3zM717.34 669.83h2.3v8.12h-2.3zM720.61 669.83h2.3v8.12h-2.3zM736.99 669.83h2.3v5.08h-2.3zM740.26 669.83h2.3v5.08h-2.3zM743.54 669.83h2.3v5.08h-2.3zM746.81 669.83h2.3v5.08h-2.3zM750.09 668.2h2.3v1.62h-2.3zM753.36 668.2h2.3v1.62h-2.3zM756.64 668.2h2.3v1.62h-2.3zM759.91 668.2h2.3v1.62h-2.3zM776.29 663.73h2.3v6.09h-2.3zM779.56 663.73h2.3v6.09h-2.3zM782.84 663.73h2.3v6.09h-2.3zM786.11 663.73h2.3v6.09h-2.3zM802.49 660.28h2.3v9.55h-2.3zM805.76 660.28h2.3v9.55h-2.3zM809.04 660.28h2.3v9.55h-2.3zM812.31 660.28h2.3v9.55h-2.3zM828.69 662.11h2.3v7.72h-2.3zM831.96 662.11h2.3v7.72h-2.3zM835.24 662.11h2.3v7.72h-2.3zM838.51 662.11h2.3v7.72h-2.3zM854.89 663.73h2.3v6.09h-2.3zM858.16 663.73h2.3v6.09h-2.3zM861.44 663.73h2.3v6.09h-2.3zM864.71 663.73h2.3v6.09h-2.3zM867.99 663.12h2.3v6.7h-2.3zM871.26 663.12h2.3v6.7h-2.3zM874.54 663.12h2.3v6.7h-2.3zM877.81 663.12h2.3v6.7h-2.3zM881.09 658.66h2.3v11.17h-2.3zM884.36 658.66h2.3v11.17h-2.3zM887.64 658.66h2.3v11.17h-2.3zM890.91 658.66h2.3v11.17h-2.3zM894.19 655.2h2.3v14.62h-2.3zM897.46 655.2h2.3v14.62h-2.3zM900.74 655.2h2.3v14.62h-2.3zM904.01 655.2h2.3v14.62h-2.3zM946.59 664.14h2.3v5.69h-2.3zM949.86 664.14h2.3v5.69h-2.3zM953.14 664.14h2.3v5.69h-2.3zM956.41 664.14h2.3v5.69h-2.3zM959.69 658.66h2.3v11.17h-2.3zM962.96 658.66h2.3v11.17h-2.3zM966.24 658.66h2.3v11.17h-2.3zM969.51 658.66h2.3v11.17h-2.3zM972.79 654.59h2.3v15.23h-2.3zM976.06 654.59h2.3v15.23h-2.3zM979.34 654.59h2.3v15.23h-2.3zM982.61 654.59h2.3v15.23h-2.3z"/><path fill="#552f1e" d="M3.39 634.28h3.29v35.55h-3.29zM6.66 634.28h3.29v35.55h-3.29zM9.94 634.28h3.29v35.55h-3.29zM13.21 634.28h3.29v35.55h-3.29zM16.49 642h3.29v27.83h-3.29zM19.76 642h3.29v27.83h-3.29zM23.04 642h3.29v27.83h-3.29zM26.31 642h3.29v27.83h-3.29zM29.59 657.23h3.29v12.59h-3.29zM32.86 657.23h3.29v12.59h-3.29zM36.14 657.23h3.29v12.59h-3.29zM39.41 657.23h3.29v12.59h-3.29zM42.69 660.08h3.29v9.75h-3.29zM45.96 660.08h3.29v9.75h-3.29zM49.24 660.08h3.29v9.75h-3.29zM52.51 660.08h3.29v9.75h-3.29zM55.79 660.08h3.29v9.75h-3.29zM59.06 660.08h3.29v9.75h-3.29zM62.34 660.08h3.29v9.75h-3.29zM65.61 660.08h3.29v9.75h-3.29zM121.29 645.86h3.29v23.97h-3.29zM124.56 645.86h3.29v23.97h-3.29zM127.84 645.86h3.29v23.97h-3.29zM131.11 645.86h3.29v23.97h-3.29zM147.49 646.47h3.29v23.36h-3.29zM150.76 646.47h3.29v23.36h-3.29zM154.04 646.47h3.29v23.36h-3.29zM157.31 646.47h3.29v23.36h-3.29zM199.89 630.22h3.29v39.61h-3.29zM203.16 630.22h3.29v39.61h-3.29zM206.44 630.22h3.29v39.61h-3.29zM209.71 630.22h3.29v39.61h-3.29zM212.99 638.75h3.29v31.08h-3.29zM216.26 638.75h3.29v31.08h-3.29zM219.54 638.75h3.29v31.08h-3.29zM222.81 638.75h3.29v31.08h-3.29zM226.09 650.53h3.29v19.3h-3.29zM229.36 650.53h3.29v19.3h-3.29zM232.64 650.53h3.29v19.3h-3.29zM235.91 650.53h3.29v19.3h-3.29zM239.19 654.59h3.29v15.23h-3.29zM242.46 654.59h3.29v15.23h-3.29zM245.74 654.59h3.29v15.23h-3.29zM249.01 654.59h3.29v15.23h-3.29zM265.39 653.17h3.29v16.66h-3.29zM268.66 653.17h3.29v16.66h-3.29zM271.94 653.17h3.29v16.66h-3.29zM275.21 653.17h3.29v16.66h-3.29zM278.49 655.61h3.29v14.22h-3.29zM281.76 655.61h3.29v14.22h-3.29zM285.04 655.61h3.29v14.22h-3.29zM288.31 655.61h3.29v14.22h-3.29zM291.59 665.16h3.29v4.67h-3.29zM294.86 665.16h3.29v4.67h-3.29zM298.14 665.16h3.29v4.67h-3.29zM301.41 665.16h3.29v4.67h-3.29zM304.69 669.83h3.29v10.77h-3.29zM307.96 669.83h3.29v10.77h-3.29zM311.24 669.83h3.29v10.77h-3.29zM314.51 669.83h3.29v10.77h-3.29zM317.79 669.83h3.29v20.31h-3.29zM321.06 669.83h3.29v20.31h-3.29zM324.34 669.83h3.29v20.31h-3.29zM327.61 669.83h3.29v20.31h-3.29zM330.89 669.83h3.29v32.91h-3.29zM334.16 669.83h3.29v32.91h-3.29zM337.44 669.83h3.29v32.91h-3.29zM340.71 669.83h3.29v32.91h-3.29zM343.99 669.83h3.29v34.12h-3.29zM347.26 669.83h3.29v34.12h-3.29zM350.54 669.83h3.29v34.12h-3.29zM353.81 669.83h3.29v34.12h-3.29zM357.09 669.83h3.29v40.02h-3.29zM360.36 669.83h3.29v40.02h-3.29zM363.64 669.83h3.29v40.02h-3.29zM366.91 669.83h3.29v40.02h-3.29zM370.19 669.83h3.29v46.72h-3.29zM373.46 669.83h3.29v46.72h-3.29zM376.74 669.83h3.29v46.72h-3.29zM380.01 669.83h3.29v46.72h-3.29zM383.29 669.83h3.29v53.83h-3.29zM386.56 669.83h3.29v53.83h-3.29zM389.84 669.83h3.29v53.83h-3.29zM393.11 669.83h3.29v53.83h-3.29zM396.39 669.83h3.29v54.84h-3.29zM399.66 669.83h3.29v54.84h-3.29zM402.94 669.83h3.29v54.84h-3.29zM406.21 669.83h3.29v54.84h-3.29zM435.69 669.83h3.29v48.34h-3.29zM438.96 669.83h3.29v48.34h-3.29zM442.24 669.83h3.29v48.34h-3.29zM445.51 669.83h3.29v48.34h-3.29zM448.79 669.83h3.29v53.83h-3.29zM452.06 669.83h3.29v53.83h-3.29zM455.34 669.83h3.29v53.83h-3.29zM458.61 669.83h3.29v53.83h-3.29zM461.89 669.83h3.29v57.89h-3.29zM465.16 669.83h3.29v57.89h-3.29zM468.44 669.83h3.29v57.89h-3.29zM471.71 669.83h3.29v57.89h-3.29zM474.99 669.83h3.29v64.59h-3.29zM478.26 669.83h3.29v64.59h-3.29zM481.54 669.83h3.29v64.59h-3.29zM484.81 669.83h3.29v64.59h-3.29zM488.09 669.83h3.29v69.67h-3.29zM491.36 669.83h3.29v69.67h-3.29zM494.64 669.83h3.29v69.67h-3.29zM497.91 669.83h3.29v69.67h-3.29zM501.19 669.83h3.29v74.55h-3.29zM504.46 669.83h3.29v74.55h-3.29zM507.74 669.83h3.29v74.55h-3.29zM511.01 669.83h3.29v74.55h-3.29zM514.29 669.83h3.29v75.56h-3.29zM517.56 669.83h3.29v75.56h-3.29zM520.84 669.83h3.29v75.56h-3.29zM524.11 669.83h3.29v75.56h-3.29zM540.49 669.83h3.29v74.75h-3.29zM543.76 669.83h3.29v74.75h-3.29zM547.04 669.83h3.29v74.75h-3.29zM550.31 669.83h3.29v74.75h-3.29zM645.29 669.83h3.29v51.8h-3.29zM648.56 669.83h3.29v51.8h-3.29zM651.84 669.83h3.29v51.8h-3.29zM655.11 669.83h3.29v51.8h-3.29zM723.89 669.83h3.29v9.14h-3.29zM727.16 669.83h3.29v9.14h-3.29zM730.44 669.83h3.29v9.14h-3.29zM733.71 669.83h3.29v9.14h-3.29zM763.19 669.83h3.29v0.61h-3.29zM766.46 669.83h3.29v0.61h-3.29zM769.74 669.83h3.29v0.61h-3.29zM773.01 669.83h3.29v0.61h-3.29zM789.39 666.17h3.29v3.66h-3.29zM792.66 666.17h3.29v3.66h-3.29zM795.94 666.17h3.29v3.66h-3.29zM799.21 666.17h3.29v3.66h-3.29zM815.59 663.73h3.29v6.09h-3.29zM818.86 663.73h3.29v6.09h-3.29zM822.14 663.73h3.29v6.09h-3.29zM825.41 663.73h3.29v6.09h-3.29zM841.79 664.34h3.29v5.48h-3.29zM845.06 664.34h3.29v5.48h-3.29zM848.34 664.34h3.29v5.48h-3.29zM851.61 664.34h3.29v5.48h-3.29zM907.29 658.05h3.29v11.78h-3.29zM910.56 658.05h3.29v11.78h-3.29zM913.84 658.05h3.29v11.78h-3.29zM917.11 658.05h3.29v11.78h-3.29zM920.39 664.34h3.29v5.48h-3.29zM923.66 664.34h3.29v5.48h-3.29zM926.94 664.34h3.29v5.48h-3.29zM930.21 664.34h3.29v5.48h-3.29zM933.49 668.81h3.29v1.02h-3.29zM936.76 668.81h3.29v1.02h-3.29zM940.04 668.81h3.29v1.02h-3.29zM943.31 668.81h3.29v1.02h-3.29z"/><path fill="#ff8552" d="M3.39 634.28h2.3v35.55h-2.3zM6.66 634.28h2.3v35.55h-2.3zM9.94 634.28h2.3v35.55h-2.3zM13.21 634.28h2.3v35.55h-2.3zM16.49 642h2.3v27.83h-2.3zM19.76 642h2.3v27.83h-2.3zM23.04 642h2.3v27.83h-2.3zM26.31 642h2.3v27.83h-2.3zM29.59 657.23h2.3v12.59h-2.3zM32.86 657.23h2.3v12.59h-2.3zM36.14 657.23h2.3v12.59h-2.3zM39.41 657.23h2.3v12.59h-2.3zM42.69 660.08h2.3v9.75h-2.3zM45.96 660.08h2.3v9.75h-2.3zM49.24 660.08h2.3v9.75h-2.3zM52.51 660.08h2.3v9.75h-2.3zM55.79 660.08h2.3v9.75h-2.3zM59.06 660.08h2.3v9.75h-2.3zM62.34 660.08h2.3v9.75h-2.3zM65.61 660.08h2.3v9.75h-2.3zM121.29 645.86h2.3v23.97h-2.3zM124.56 645.86h2.3v23.97h-2.3zM127.84 645.86h2.3v23.97h-2.3zM131.11 645.86h2.3v23.97h-2.3zM147.49 646.47h2.3v23.36h-2.3zM150.76 646.47h2.3v23.36h-2.3zM154.04 646.47h2.3v23.36h-2.3zM157.31 646.47h2.3v23.36h-2.3zM199.89 630.22h2.3v39.61h-2.3zM203.16 630.22h2.3v39.61h-2.3zM206.44 630.22h2.3v39.61h-2.3zM209.71 630.22h2.3v39.61h-2.3zM212.99 638.75h2.3v31.08h-2.3zM216.26 638.75h2.3v31.08h-2.3zM219.54 638.75h2.3v31.08h-2.3zM222.81 638.75h2.3v31.08h-2.3zM226.09 650.53h2.3v19.3h-2.3zM229.36 650.53h2.3v19.3h-2.3zM232.64 650.53h2.3v19.3h-2.3zM235.91 650.53h2.3v19.3h-2.3zM239.19 654.59h2.3v15.23h-2.3zM242.46 654.59h2.3v15.23h-2.3zM245.74 654.59h2.3v15.23h-2.3zM249.01 654.59h2.3v15.23h-2.3zM265.39 653.17h2.3v16.66h-2.3zM268.66 653.17h2.3v16.66h-2.3zM271.94 653.17h2.3v16.66h-2.3zM275.21 653.17h2.3v16.66h-2.3zM278.49 655.61h2.3v14.22h-2.3zM281.76 655.61h2.3v14.22h-2.3zM285.04 655.61h2.3v14.22h-2.3zM288.31 655.61h2.3v14.22h-2.3zM291.59 665.16h2.3v4.67h-2.3zM294.86 665.16h2.3v4.67h-2.3zM298.14 665.16h2.3v4.67h-2.3zM301.41 665.16h2.3v4.67h-2.3zM304.69 669.83h2.3v10.77h-2.3zM307.96 669.83h2.3v10.77h-2.3zM311.24 669.83h2.3v10.77h-2.3zM314.51 669.83h2.3v10.77h-2.3zM317.79 669.83h2.3v20.31h-2.3zM321.06 669.83h2.3v20.31h-2.3zM324.34 669.83h2.3v20.31h-2.3zM327.61 669.83h2.3v20.31h-2.3zM330.89 669.83h2.3v32.91h-2.3zM334.16 669.83h2.3v32.91h-2.3zM337.44 669.83h2.3v32.91h-2.3zM340.71 669.83h2.3v32.91h-2.3zM343.99 669.83h2.3v34.12h-2.3zM347.26 669.83h2.3v34.12h-2.3zM350.54 669.83h2.3v34.12h-2.3zM353.81 669.83h2.3v34.12h-2.3zM357.09 669.83h2.3v40.02h-2.3zM360.36 669.83h2.3v40.02h-2.3zM363.64 669.83h2.3v40.02h-2.3zM366.91 669.83h2.3v40.02h-2.3zM370.19 669.83h2.3v46.72h-2.3zM373.46 669.83h2.3v46.72h-2.3zM376.74 669.83h2.3v46.72h-2.3zM380.01 669.83h2.3v46.72h-2.3zM383.29 669.83h2.3v53.83h-2.3zM386.56 669.83h2.3v53.83h-2.3zM389.84 669.83h2.3v53.83h-2.3zM393.11 669.83h2.3v53.83h-2.3zM396.39 669.83h2.3v54.84h-2.3zM399.66 669.83h2.3v54.84h-2.3zM402.94 669.83h2.3v54.84h-2.3zM406.21 669.83h2.3v54.84h-2.3zM435.69 669.83h2.3v48.34h-2.3zM438.96 669.83h2.3v48.34h-2.3zM442.24 669.83h2.3v48.34h-2.3zM445.51 669.83h2.3v48.34h-2.3zM448.79 669.83h2.3v53.83h-2.3zM452.06 669.83h2.3v53.83h-2.3zM455.34 669.83h2.3v53.83h-2.3zM458.61 669.83h2.3v53.83h-2.3zM461.89 669.83h2.3v57.89h-2.3zM465.16 669.83h2.3v57.89h-2.3zM468.44 669.83h2.3v57.89h-2.3zM471.71 669.83h2.3v57.89h-2.3zM474.99 669.83h2.3v64.59h-2.3zM478.26 669.83h2.3v64.59h-2.3zM481.54 669.83h2.3v64.59h-2.3zM484.81 669.83h2.3v64.59h-2.3zM488.09 669.83h2.3v69.67h-2.3zM491.36 669.83h2.3v69.67h-2.3zM494.64 669.83h2.3v69.67h-2.3zM497.91 669.83h2.3v69.67h-2.3zM501.19 669.83h2.3v74.55h-2.3zM504.46 669.83h2.3v74.55h-2.3zM507.74 669.83h2.3v74.55h-2.3zM511.01 669.83h2.3v74.55h-2.3zM514.29 669.83h2.3v75.56h-2.3zM517.56 669.83h2.3v75.56h-2.3zM520.84 669.83h2.3v75.56h-2.3zM524.11 669.83h2.3v75.56h-2.3zM540.49 669.83h2.3v74.75h-2.3zM543.76 669.83h2.3v74.75h-2.3zM547.04 669.83h2.3v74.75h-2.3zM550.31 669.83h2.3v74.75h-2.3zM645.29 669.83h2.3v51.8h-2.3zM648.56 669.83h2.3v51.8h-2.3zM651.84 669.83h2.3v51.8h-2.3zM655.11 669.83h2.3v51.8h-2.3zM723.89 669.83h2.3v9.14h-2.3zM727.16 669.83h2.3v9.14h-2.3zM730.44 669.83h2.3v9.14h-2.3zM733.71 669.83h2.3v9.14h-2.3zM763.19 669.83h2.3v0.61h-2.3zM766.46 669.83h2.3v0.61h-2.3zM769.74 669.83h2.3v0.61h-2.3zM773.01 669.83h2.3v0.61h-2.3zM789.39 666.17h2.3v3.66h-2.3zM792.66 666.17h2.3v3.66h-2.3zM795.94 666.17h2.3v3.66h-2.3zM799.21 666.17h2.3v3.66h-2.3zM815.59 663.73h2.3v6.09h-2.3zM818.86 663.73h2.3v6.09h-2.3zM822.14 663.73h2.3v6.09h-2.3zM825.41 663.73h2.3v6.09h-2.3zM841.79 664.34h2.3v5.48h-2.3zM845.06 664.34h2.3v5.48h-2.3zM848.34 664.34h2.3v5.48h-2.3zM851.61 664.34h2.3v5.48h-2.3zM907.29 658.05h2.3v11.78h-2.3zM910.56 658.05h2.3v11.78h-2.3zM913.84 658.05h2.3v11.78h-2.3zM917.11 658.05h2.3v11.78h-2.3zM920.39 664.34h2.3v5.48h-2.3zM923.66 664.34h2.3v5.48h-2.3zM926.94 664.34h2.3v5.48h-2.3zM930.21 664.34h2.3v5.48h-2.3zM933.49 668.81h2.3v1.02h-2.3zM936.76 668.81h2.3v1.02h-2.3zM940.04 668.81h2.3v1.02h-2.3zM943.31 668.81h2.3v1.02h-2.3z"/></g>
<rect x="4" y="435.86" width="1236.5" height="1.1" fill="#e6e6e6"/>
<rect x="4" y="535.68" width="1236.5" height="1.1" fill="#e6e6e6"/>
<rect x="4" y="669.28" width="1236.5" height="1.1" fill="#e6e6e6"/>
<path clip-path="url(#c1)" fill="none" stroke="#ff1493" stroke-width="1.55" stroke-linejoin="round" d="M4.54 438.84 L14.36 438.84 L17.64 431.73 L27.46 431.73 L30.74 423.61"/>
<path clip-path="url(#c1)" fill="none" stroke="#1e90ff" stroke-width="1.55" stroke-linejoin="round" d="M30.74 423.61 L40.56 423.61 L43.84 416.09 L53.66 416.09 L56.94 409.59 L66.76 409.59 L70.04 402.28 L79.86 402.28 L83.14 394.77 L92.96 394.77 L96.24 389.08 L106.06 389.08 L109.34 383.19 L119.16 383.19 L122.44 378.52 L132.26 378.52 L135.54 374.45 L145.36 374.45 L148.64 371 L158.46 371 L161.74 368.77 L171.56 368.77 L174.84 365.92 L184.66 365.92 L187.94 364.7 L197.76 364.7 L201.04 362.88 L210.86 362.88 L214.14 361.86 L223.96 361.86 L227.24 361.86 L237.06 361.86 L240.34 361.25 L250.16 361.25 L253.44 360.84 L263.26 360.84 L266.54 360.23 L276.36 360.23 L279.64 361.25 L289.46 361.25 L292.74 362.27 L302.56 362.27 L305.84 363.28 L315.66 363.28 L318.94 363.89 L328.76 363.89 L332.04 364.7 L341.86 364.7 L345.14 365.31 L354.96 365.31 L358.24 366.73 L368.06 366.73 L371.34 368.77 L381.16 368.77 L384.44 371 L394.26 371 L397.54 376.08 L407.36 376.08 L410.64 381.16 L420.46 381.16 L423.74 386.64 L433.56 386.64 L436.84 391.72 L446.66 391.72 L449.94 397.41 L459.76 397.41 L463.04 402.89 L472.86 402.89 L476.14 408.58 L485.96 408.58 L489.24 414.67 L499.06 414.67 L502.34 420.16 L512.16 420.16 L515.44 425.84 L525.26 425.84 L528.54 430.72 L538.36 430.72 L541.64 435.8 L551.46 435.8 L554.74 440.47"/>
<path clip-path="url(#c1)" fill="none" stroke="#ff1493" stroke-width="1.55" stroke-linejoin="round" d="M554.74 440.47 L564.56 440.47 L567.84 445.55 L577.66 445.55 L580.94 449 L590.76 449 L594.04 452.66 L603.86 452.66 L607.14 456.31 L616.96 456.31 L620.24 459.77 L630.06 459.77 L633.34 462.81 L643.16 462.81 L646.44 466.27 L656.26 466.27 L659.54 468.5 L669.36 468.5 L672.64 470.94 L682.46 470.94 L685.74 472.56 L695.56 472.56 L698.84 473.38 L708.66 473.38 L711.94 474.19 L721.76 474.19 L725.04 475 L734.86 475 L738.14 475.2 L747.96 475.2 L751.24 475 L761.06 475 L764.34 475 L774.16 475 L777.44 475 L787.26 475 L790.54 473.38 L800.36 473.38 L803.64 470.94 L813.46 470.94 L816.74 468.5 L826.56 468.5 L829.84 464.44 L839.66 464.44 L842.94 460.38 L852.76 460.38 L856.04 455.7 L865.86 455.7 L869.14 450.62 L878.96 450.62 L882.24 445.55 L892.06 445.55 L895.34 440.47 L905.16 440.47 L908.44 436 L918.26 436 L921.54 430.92"/>
<path clip-path="url(#c1)" fill="none" stroke="#1e90ff" stroke-width="1.55" stroke-linejoin="round" d="M921.54 430.92 L931.36 430.92 L934.64 427.67 L944.46 427.67 L947.74 423.2 L957.56 423.2 L960.84 421.17 L970.66 421.17 L973.94 417.52 L983.76 417.52"/>
<path clip-path="url(#c2)" fill="none" stroke="#1e90ff" stroke-width="1.55" stroke-linejoin="round" d="M4.54 502.92 L14.36 502.92 L17.64 504.34 L27.46 504.34 L30.74 507.8 L40.56 507.8 L43.84 511.86 L53.66 511.86 L56.94 514.91 L66.76 514.91 L70.04 516.94 L79.86 516.94 L83.14 515.92 L92.96 515.92 L96.24 515.11 L106.06 515.11 L109.34 514.5 L119.16 514.5 L122.44 513.89 L132.26 513.89 L135.54 512.88 L145.36 512.88 L148.64 513.48 L158.46 513.48 L161.74 512.88 L171.56 512.88 L174.84 510.44 L184.66 510.44 L187.94 506.98 L197.76 506.98 L201.04 504.75 L210.86 504.75 L214.14 504.75 L223.96 504.75 L227.24 507.8 L237.06 507.8 L240.34 510.44 L250.16 510.44 L253.44 512.06 L263.26 512.06 L266.54 513.48 L276.36 513.48 L279.64 514.91 L289.46 514.91 L292.74 518.56 L302.56 518.56 L305.84 524.05 L315.66 524.05 L318.94 530.75 L328.76 530.75 L332.04 537.86"/>
<path clip-path="url(#c2)" fill="none" stroke="#ff1493" stroke-width="1.55" stroke-linejoin="round" d="M332.04 537.86 L341.86 537.86 L345.14 544.56 L354.96 544.56 L358.24 551.47 L368.06 551.47 L371.34 557.77 L381.16 557.77 L384.44 564.27 L394.26 564.27 L397.54 569.95 L407.36 569.95 L410.64 574.02 L420.46 574.02 L423.74 575.84 L433.56 575.84 L436.84 578.48 L446.66 578.48 L449.94 580.92 L459.76 580.92 L463.04 582.95 L472.86 582.95 L476.14 587.22 L485.96 587.22 L489.24 590.67 L499.06 590.67 L502.34 595.34 L512.16 595.34 L515.44 598.8 L525.26 598.8 L528.54 601.23 L538.36 601.23 L541.64 602.86 L551.46 602.86 L554.74 604.28 L564.56 604.28 L567.84 604.48 L577.66 604.48 L580.94 603.47 L590.76 603.47 L594.04 601.84 L603.86 601.84 L607.14 599.41 L616.96 599.41 L620.24 597.78 L630.06 597.78 L633.34 595.75 L643.16 595.75 L646.44 593.72 L656.26 593.72 L659.54 591.28 L669.36 591.28 L672.64 587.22 L682.46 587.22 L685.74 581.53 L695.56 581.53 L698.84 574.83 L708.66 574.83 L711.94 568.73 L721.76 568.73 L725.04 564.27 L734.86 564.27 L738.14 559.19 L747.96 559.19 L751.24 554.52 L761.06 554.52 L764.34 551.06 L774.16 551.06 L777.44 547 L787.26 547 L790.54 543.55 L800.36 543.55 L803.64 540.5 L813.46 540.5 L816.74 538.88 L826.56 538.88 L829.84 536.44 L839.66 536.44 L842.94 535.83"/>
<path clip-path="url(#c2)" fill="none" stroke="#1e90ff" stroke-width="1.55" stroke-linejoin="round" d="M842.94 535.83 L852.76 535.83 L856.04 534.81 L865.86 534.81 L869.14 534.2 L878.96 534.2 L882.24 532.17 L892.06 532.17 L895.34 530.14 L905.16 530.14 L908.44 529.12 L918.26 529.12 L921.54 529.12 L931.36 529.12 L934.64 530.75 L944.46 530.75 L947.74 530.75 L957.56 530.75 L960.84 530.14 L970.66 530.14 L973.94 528.72 L983.76 528.72"/>
<path clip-path="url(#c3)" fill="none" stroke="#eaa21c" stroke-width="1.6" stroke-linejoin="round" d="M4.54 636.92 L14.36 636.92 L17.64 637.94 L27.46 637.94 L30.74 641.39 L40.56 641.39 L43.84 645.45 L53.66 645.45 L56.94 647.89 L66.76 647.89 L70.04 649.52 L79.86 649.52 L83.14 649.52 L92.96 649.52 L96.24 648.91 L106.06 648.91 L109.34 647.48 L119.16 647.48 L122.44 647.08 L132.26 647.08 L135.54 646.47 L145.36 646.47 L148.64 646.47 L158.46 646.47 L161.74 645.86 L171.56 645.86 L174.84 643.42 L184.66 643.42 L187.94 640.78 L197.76 640.78 L201.04 637.94 L210.86 637.94 L214.14 637.94 L223.96 637.94 L227.24 640.78 L237.06 640.78 L240.34 643.83 L250.16 643.83 L253.44 645.05 L263.26 645.05 L266.54 646.47 L276.36 646.47 L279.64 647.89 L289.46 647.89 L292.74 651.95 L302.56 651.95 L305.84 657.03 L315.66 657.03 L318.94 663.73 L328.76 663.73 L332.04 671.25 L341.86 671.25 L345.14 677.95 L354.96 677.95 L358.24 684.05 L368.06 684.05 L371.34 690.55 L381.16 690.55 L384.44 697.25 L394.26 697.25 L397.54 702.94 L407.36 702.94 L410.64 705.98 L420.46 705.98 L423.74 708.83 L433.56 708.83 L436.84 710.45 L446.66 710.45 L449.94 712.89 L459.76 712.89 L463.04 715.94 L472.86 715.94 L476.14 719.19 L485.96 719.19 L489.24 723.05 L499.06 723.05 L502.34 727.31 L512.16 727.31 L515.44 730.77 L525.26 730.77 L528.54 733.2 L538.36 733.2 L541.64 735.44 L551.46 735.44 L554.74 736.45 L564.56 736.45 L567.84 737.47 L577.66 737.47 L580.94 735.84 L590.76 735.84 L594.04 733.81 L603.86 733.81 L607.14 731.78 L616.96 731.78 L620.24 730.16 L630.06 730.16 L633.34 727.72 L643.16 727.72 L646.44 726.7 L656.26 726.7 L659.54 724.27 L669.36 724.27 L672.64 720 L682.46 720 L685.74 713.5 L695.56 713.5 L698.84 707 L708.66 707 L711.94 701.31 L721.76 701.31 L725.04 697.25 L734.86 697.25 L738.14 692.17 L747.96 692.17 L751.24 687.09 L761.06 687.09 L764.34 684.05 L774.16 684.05 L777.44 679.98 L787.26 679.98 L790.54 676.33 L800.36 676.33 L803.64 673.48 L813.46 673.48 L816.74 671.45 L826.56 671.45 L829.84 669.83 L839.66 669.83 L842.94 668.41 L852.76 668.41 L856.04 667.8 L865.86 667.8 L869.14 667.19 L878.96 667.19 L882.24 665.36 L892.06 665.36 L895.34 663.33 L905.16 663.33 L908.44 661.7 L918.26 661.7 L921.54 662.72 L931.36 662.72 L934.64 663.73 L944.46 663.73 L947.74 663.73 L957.56 663.73 L960.84 662.72 L970.66 662.72 L973.94 661.09 L983.76 661.09"/>
<text x="7.3" y="359.8" font-size="7.8" fill="#fff" textLength="166" lengthAdjust="spacingAndGlyphs">Abiroid ChronoVolume (Oscillator, Bull/Bear Power)</text>
<text x="7.3" y="498.8" font-size="7.8" fill="#fff" textLength="152.5" lengthAdjust="spacingAndGlyphs">Abiroid ChronoVolume (Oscillator, Price Action)</text>
<text x="7.3" y="632.8" font-size="7.8" fill="#fff" textLength="152" lengthAdjust="spacingAndGlyphs">Abiroid ChronoVolume (Oscillator, TickVolume)</text>
<text x="1244.2" y="358.1" font-size="7.8" fill="#fff" textLength="13.4" lengthAdjust="spacingAndGlyphs">0.62</text>
<rect x="1241.1" y="436.9" width="2.4" height="1" fill="#c8c8c8"/>
<text x="1244.2" y="440" font-size="7.8" fill="#fff" textLength="13.8" lengthAdjust="spacingAndGlyphs" font-weight="bold">0.00</text>
<text x="1244.2" y="483.1" font-size="7.8" fill="#fff" textLength="16.2" lengthAdjust="spacingAndGlyphs">-0.36</text>
<text x="1244.2" y="496.4" font-size="7.8" fill="#fff" textLength="13.4" lengthAdjust="spacingAndGlyphs">0.56</text>
<rect x="1241.1" y="536.7" width="2.4" height="1" fill="#c8c8c8"/>
<text x="1244.2" y="539.8" font-size="7.8" fill="#fff" textLength="13.8" lengthAdjust="spacingAndGlyphs" font-weight="bold">0.00</text>
<text x="1244.2" y="617.1" font-size="7.8" fill="#fff" textLength="16.2" lengthAdjust="spacingAndGlyphs">-0.95</text>
<text x="1244.2" y="631.1" font-size="7.8" fill="#fff" textLength="13.4" lengthAdjust="spacingAndGlyphs">0.56</text>
<rect x="1241.1" y="670.3" width="2.4" height="1" fill="#c8c8c8"/>
<text x="1244.2" y="673.4" font-size="7.8" fill="#fff" textLength="13.8" lengthAdjust="spacingAndGlyphs" font-weight="bold">0.00</text>
<text x="1244.2" y="749.1" font-size="7.8" fill="#fff" textLength="16.2" lengthAdjust="spacingAndGlyphs">-0.95</text>
<rect x="3.6" y="751" width="1" height="3.6" fill="#c8c8c8"/>
<text x="3.8" y="761.95" font-size="7.8" fill="#fff" textLength="38" lengthAdjust="spacingAndGlyphs">18 Jul 2025</text>
<rect x="55.97" y="751" width="1" height="3.6" fill="#c8c8c8"/>
<text x="56.07" y="761.95" font-size="7.8" fill="#fff" textLength="40.5" lengthAdjust="spacingAndGlyphs">21 Jul 08:00</text>
<rect x="108.34" y="751" width="1" height="3.6" fill="#c8c8c8"/>
<text x="108.44" y="761.95" font-size="7.8" fill="#fff" textLength="40.5" lengthAdjust="spacingAndGlyphs">22 Jul 00:00</text>
<rect x="160.71" y="751" width="1" height="3.6" fill="#c8c8c8"/>
<text x="160.81" y="761.95" font-size="7.8" fill="#fff" textLength="40.5" lengthAdjust="spacingAndGlyphs">22 Jul 16:00</text>
<rect x="213.08" y="751" width="1" height="3.6" fill="#c8c8c8"/>
<text x="213.18" y="761.95" font-size="7.8" fill="#fff" textLength="40.5" lengthAdjust="spacingAndGlyphs">23 Jul 08:00</text>
<rect x="265.45" y="751" width="1" height="3.6" fill="#c8c8c8"/>
<text x="265.55" y="761.95" font-size="7.8" fill="#fff" textLength="40.5" lengthAdjust="spacingAndGlyphs">24 Jul 00:00</text>
<rect x="317.82" y="751" width="1" height="3.6" fill="#c8c8c8"/>
<text x="317.92" y="761.95" font-size="7.8" fill="#fff" textLength="40.5" lengthAdjust="spacingAndGlyphs">24 Jul 16:00</text>
<rect x="370.19" y="751" width="1" height="3.6" fill="#c8c8c8"/>
<text x="370.29" y="761.95" font-size="7.8" fill="#fff" textLength="40.5" lengthAdjust="spacingAndGlyphs">25 Jul 08:00</text>
<rect x="422.56" y="751" width="1" height="3.6" fill="#c8c8c8"/>
<text x="422.66" y="761.95" font-size="7.8" fill="#fff" textLength="40.5" lengthAdjust="spacingAndGlyphs">28 Jul 00:00</text>
<rect x="474.93" y="751" width="1" height="3.6" fill="#c8c8c8"/>
<text x="475.03" y="761.95" font-size="7.8" fill="#fff" textLength="40.5" lengthAdjust="spacingAndGlyphs">28 Jul 16:00</text>
<rect x="527.3" y="751" width="1" height="3.6" fill="#c8c8c8"/>
<text x="527.4" y="761.95" font-size="7.8" fill="#fff" textLength="40.5" lengthAdjust="spacingAndGlyphs">29 Jul 08:00</text>
<rect x="579.67" y="751" width="1" height="3.6" fill="#c8c8c8"/>
<text x="579.77" y="761.95" font-size="7.8" fill="#fff" textLength="40.5" lengthAdjust="spacingAndGlyphs">30 Jul 00:00</text>
<rect x="632.04" y="751" width="1" height="3.6" fill="#c8c8c8"/>
<text x="632.14" y="761.95" font-size="7.8" fill="#fff" textLength="40.5" lengthAdjust="spacingAndGlyphs">30 Jul 16:00</text>
<rect x="684.41" y="751" width="1" height="3.6" fill="#c8c8c8"/>
<text x="684.51" y="761.95" font-size="7.8" fill="#fff" textLength="40.5" lengthAdjust="spacingAndGlyphs">31 Jul 08:00</text>
<rect x="736.78" y="751" width="1" height="3.6" fill="#c8c8c8"/>
<text x="736.88" y="761.95" font-size="7.8" fill="#fff" textLength="36.8" lengthAdjust="spacingAndGlyphs">1 Aug 00:00</text>
<rect x="789.15" y="751" width="1" height="3.6" fill="#c8c8c8"/>
<text x="789.25" y="761.95" font-size="7.8" fill="#fff" textLength="36.8" lengthAdjust="spacingAndGlyphs">1 Aug 16:00</text>
<rect x="841.52" y="751" width="1" height="3.6" fill="#c8c8c8"/>
<text x="841.62" y="761.95" font-size="7.8" fill="#fff" textLength="36.8" lengthAdjust="spacingAndGlyphs">4 Aug 08:00</text>
<rect x="893.89" y="751" width="1" height="3.6" fill="#c8c8c8"/>
<text x="893.99" y="761.95" font-size="7.8" fill="#fff" textLength="36.8" lengthAdjust="spacingAndGlyphs">5 Aug 00:00</text>
<rect x="946.26" y="751" width="1" height="3.6" fill="#c8c8c8"/>
<text x="946.36" y="761.95" font-size="7.8" fill="#fff" textLength="36.8" lengthAdjust="spacingAndGlyphs">5 Aug 16:00</text>
<path d="M4.3 746.5v4.2h4.6z" fill="#d8d8d8"/>
</svg>
<svg width="0" height="0" style="position:absolute"><defs><linearGradient id="gy" x1="0" y1="0" x2="0" y2="1"><stop offset="0" stop-color="#f7ea8c"/><stop offset="1" stop-color="#e2cb45"/></linearGradient><linearGradient id="gb" x1="0" y1="0" x2="0" y2="1"><stop offset="0" stop-color="#c2dff8"/><stop offset="1" stop-color="#7fb6ea"/></linearGradient><linearGradient id="gf" x1="0" y1="0" x2="1" y2="1"><stop offset="0" stop-color="#fff2a0"/><stop offset="0.55" stop-color="#f7d648"/><stop offset="1" stop-color="#eeb818"/></linearGradient><linearGradient id="gg" x1="0" y1="0" x2="0" y2="1"><stop offset="0" stop-color="#b2f4b4"/><stop offset="1" stop-color="#4fcb58"/></linearGradient></defs></svg>
<div class="dlg" id="d1">
<svg class="abs" style="left:5.5px;top:5.5px" width="17" height="15" viewBox="0 0 17 15"><rect x="1.1" y="1.1" width="10.7" height="8" rx="1" fill="#fcfdff" stroke="#3d8fd6" stroke-width="0.9"/><rect x="1.1" y="1.1" width="10.7" height="1.5" fill="#3d8fd6"/><path d="M3.6 3.6v4.4M2.4 4.7h2.4M2.4 6.9h2.4" stroke="#79aee0" stroke-width="0.7" fill="none"/><rect x="5.9" y="4" width="8.2" height="8" rx="1.7" fill="url(#gf)" stroke="#e0a80e" stroke-width="0.9"/><path d="M11.2 5.6c-1.3-.3-1.4.8-1.6 2.2s-.4 2.5-1.5 2.2M8.8 7.8h2.2" stroke="#b06a00" stroke-width="0.9" fill="none"/></svg>
<div class="t ttl">Indicators on EU</div>
<div class="abs tree">
</div>
<svg class="abs" style="left:0;top:0" width="120" height="217" viewBox="87 19.8 120 217">
<path d="M105.5 66V150" stroke="#9c9c9c" stroke-width="0.8" stroke-dasharray="1 1" fill="none"/>
<path d="M108.6 61.6H115" stroke="#9c9c9c" stroke-width="0.8" stroke-dasharray="1 1"/>
<rect x="101.4" y="58.0" width="7.2" height="7.2" rx="1" fill="#fcfcfc" stroke="#b0b0b0" stroke-width="0.8"/>
<path d="M103 61.6h4" stroke="#4660a8" stroke-width="1"/>
<rect x="115.6" y="55.1" width="12.8" height="11.2" rx="1.2" fill="#fdfdff" stroke="#3f7cf0" stroke-width="1.1"/>
<rect x="115.6" y="55.1" width="12.8" height="2.7" fill="#1f5fe8"/>
<path d="M117.9 64.0C118.8 59.6 119.6 58.9 120.4 59.2S122.2 64.2 123.3 64.0S125.4 61.1 126.1 58.8" stroke="#5b8df2" stroke-width="1.2" fill="none"/>
<path d="M122.5 67.9V76.6H131.5" stroke="#9c9c9c" stroke-width="0.8" stroke-dasharray="1 1" fill="none"/>
<rect x="133.5" y="69.5" width="11" height="11" rx="1.8" fill="url(#gf)" stroke="#cf9c12" stroke-width="0.9"/>
<path d="M141.4 71.7c-1.7-.5-1.9.9-2.1 2.9s-.5 3.4-2 3M137.8 74.8h3.2" stroke="#7a5c00" stroke-width="1.05" fill="none"/>
<circle cx="142.7" cy="79.2" r="2" fill="#f2c02a" stroke="#b88a10" stroke-width="0.7"/>
<path d="M108.6 91.1H115" stroke="#9c9c9c" stroke-width="0.8" stroke-dasharray="1 1"/>
<rect x="101.4" y="87.5" width="7.2" height="7.2" rx="1" fill="#fcfcfc" stroke="#b0b0b0" stroke-width="0.8"/>
<path d="M103 91.1h4" stroke="#4660a8" stroke-width="1"/>
<rect x="115.6" y="84.6" width="12.8" height="11.2" rx="1.2" fill="#fdfdff" stroke="#3f7cf0" stroke-width="1.1"/>
<rect x="115.6" y="84.6" width="12.8" height="2.7" fill="#1f5fe8"/>
<path d="M117.9 93.5C118.8 89.1 119.6 88.4 120.4 88.7S122.2 93.7 123.3 93.5S125.4 90.6 126.1 88.3" stroke="#5b8df2" stroke-width="1.2" fill="none"/>
<path d="M122.5 97.4V106.1H131.5" stroke="#9c9c9c" stroke-width="0.8" stroke-dasharray="1 1" fill="none"/>
<rect x="133.5" y="99.0" width="11" height="11" rx="1.8" fill="url(#gf)" stroke="#cf9c12" stroke-width="0.9"/>
<path d="M141.4 101.2c-1.7-.5-1.9.9-2.1 2.9s-.5 3.4-2 3M137.8 104.3h3.2" stroke="#7a5c00" stroke-width="1.05" fill="none"/>
<circle cx="142.7" cy="108.7" r="2" fill="#f2c02a" stroke="#b88a10" stroke-width="0.7"/>
<path d="M108.6 120.6H115" stroke="#9c9c9c" stroke-width="0.8" stroke-dasharray="1 1"/>
<rect x="101.4" y="117.0" width="7.2" height="7.2" rx="1" fill="#fcfcfc" stroke="#b0b0b0" stroke-width="0.8"/>
<path d="M103 120.6h4" stroke="#4660a8" stroke-width="1"/>
<rect x="115.6" y="114.1" width="12.8" height="11.2" rx="1.2" fill="#fdfdff" stroke="#3f7cf0" stroke-width="1.1"/>
<rect x="115.6" y="114.1" width="12.8" height="2.7" fill="#1f5fe8"/>
<path d="M117.9 123.0C118.8 118.6 119.6 117.9 120.4 118.2S122.2 123.2 123.3 123.0S125.4 120.1 126.1 117.8" stroke="#5b8df2" stroke-width="1.2" fill="none"/>
<path d="M122.5 126.9V135.6H131.5" stroke="#9c9c9c" stroke-width="0.8" stroke-dasharray="1 1" fill="none"/>
<rect x="133.5" y="128.5" width="11" height="11" rx="1.8" fill="url(#gf)" stroke="#cf9c12" stroke-width="0.9"/>
<path d="M141.4 130.7c-1.7-.5-1.9.9-2.1 2.9s-.5 3.4-2 3M137.8 133.8h3.2" stroke="#7a5c00" stroke-width="1.05" fill="none"/>
<circle cx="142.7" cy="138.2" r="2" fill="#f2c02a" stroke="#b88a10" stroke-width="0.7"/>
<path d="M108.6 150.0H115" stroke="#9c9c9c" stroke-width="0.8" stroke-dasharray="1 1"/>
<rect x="101.4" y="146.4" width="7.2" height="7.2" rx="1" fill="#fcfcfc" stroke="#b0b0b0" stroke-width="0.8"/>
<path d="M103 150.0h4" stroke="#4660a8" stroke-width="1"/>
<rect x="115.6" y="143.5" width="12.8" height="11.2" rx="1.2" fill="#fdfdff" stroke="#3f7cf0" stroke-width="1.1"/>
<rect x="115.6" y="143.5" width="12.8" height="2.7" fill="#1f5fe8"/>
<path d="M117.9 152.4C118.8 148.0 119.6 147.3 120.4 147.6S122.2 152.6 123.3 152.4S125.4 149.5 126.1 147.2" stroke="#5b8df2" stroke-width="1.2" fill="none"/>
<path d="M122.5 156.3V165.0H131.5" stroke="#9c9c9c" stroke-width="0.8" stroke-dasharray="1 1" fill="none"/>
<rect x="133.5" y="157.9" width="11" height="11" rx="1.8" fill="url(#gf)" stroke="#cf9c12" stroke-width="0.9"/>
<path d="M141.4 160.1c-1.7-.5-1.9.9-2.1 2.9s-.5 3.4-2 3M137.8 163.2h3.2" stroke="#7a5c00" stroke-width="1.05" fill="none"/>
<circle cx="142.7" cy="167.6" r="2" fill="#f2c02a" stroke="#b88a10" stroke-width="0.7"/>
</svg>
<div class="t tr" style="left:46.6px;top:36.1px">Main chart</div>
<div class="t tr" style="left:63.8px;top:50.8px">Volume</div>
<div class="t tr" style="left:46.6px;top:65.6px">Indicator wi</div>
<div class="abs" style="left:61.6px;top:78.1px;width:60px;height:13.4px;background:#e9e9e9"></div>
<div class="t tr" style="left:63.8px;top:80.3px">Abiroid</div>
<div class="t tr" style="left:46.6px;top:95.1px">Indicator wi</div>
<div class="t tr" style="left:63.8px;top:109.8px">Abiroid</div>
<div class="t tr" style="left:46.6px;top:124.5px">Indicator wi</div>
<div class="t tr" style="left:63.8px;top:139.2px">Abiroid</div>
</div>
<div class="dlg" id="d2">
<div class="abs tbar"></div>
<div class="t ttl">Custom Indicator - Abiroid ChronoVolume</div>
<div class="t" style="left:618.6px;top:6.5px;font-size:10.5px;color:#222">?</div>
<svg class="abs" style="left:653.2px;top:6.6px" width="10" height="10" viewBox="0 0 10 10"><path d="M0.8 0.8L9.2 9.2M9.2 0.8L0.8 9.2" stroke="#1c1c1c" stroke-width="0.95" fill="none"/></svg>
<div class="abs tab" style="left:8.8px;width:32.2px;top:33.8px;height:14.0px;"></div>
<div class="t tabt" style="left:12.2px;top:36.2px">About</div>
<div class="abs tab" style="left:43.0px;width:42.0px;top:33.8px;height:14.0px;"></div>
<div class="t tabt" style="left:46.2px;top:36.2px">Common</div>
<div class="abs tab" style="left:88.6px;width:32.6px;top:31.4px;height:16.4px;background:#fafafa;"></div>
<div class="t tabt" style="left:92.2px;top:34.4px">Inputs</div>
<div class="abs tab" style="left:123.0px;width:32.0px;top:33.8px;height:14.0px;"></div>
<div class="t tabt" style="left:126.6px;top:36.2px">Colors</div>
<div class="abs tab" style="left:157.0px;width:31.8px;top:33.8px;height:14.0px;"></div>
<div class="t tabt" style="left:161.0px;top:36.2px">Levels</div>
<div class="abs tab" style="left:191.0px;width:54.4px;top:33.8px;height:14.0px;"></div>
<div class="t tabt" style="left:195.2px;top:36.2px">Visualization</div>
<div class="abs page"></div>
<div class="abs list">
<div class="t hd" style="left:5.6px">Variable</div><div class="t hd" style="left:275.6px">Value</div>
<div class="abs" style="left:270.2px;top:1px;width:1px;height:18px;background:#e4e4e4"></div>
<div class="row" style="top:19.50px"><svg class="ic" viewBox="0 0 13 13"><path d="M1.2 0.6h8.2l3 2.8v8c-.9 .8-1.5 1.3-2.5.4s-1.9-.5-2.9.4-2.1.6-2.9-.2-1.7-.4-2.9.6z" fill="url(#gy)" stroke="#bfa92c" stroke-width="0.9"/><path d="M9.4 0.6v2.8h3" fill="#fbf3b0" stroke="#bfa92c" stroke-width="0.6"/><text x="6.3" y="9.4" font-size="8" font-weight="bold" text-anchor="middle" fill="#4a3c00" textLength="9.4" lengthAdjust="spacingAndGlyphs">ab</text></svg><div class="t" style="left:15.8px">Prefix</div><div class="t" style="left:271.8px">ABR-CV</div>
<div class="abs" style="left:269.6px;top:0;width:1px;height:100%;background:#f0f0f0"></div>
</div>
<div class="row s" style="top:35.86px"><svg class="ic" viewBox="0 0 13 13"><path d="M1.2 0.6h8.2l3 2.8v8c-.9 .8-1.5 1.3-2.5.4s-1.9-.5-2.9.4-2.1.6-2.9-.2-1.7-.4-2.9.6z" fill="url(#gb)" stroke="#5b97d6" stroke-width="0.9"/><path d="M9.4 0.6v2.8h3" fill="#dcecfb" stroke="#5b97d6" stroke-width="0.6"/><text x="6.4" y="9.3" font-size="6" font-weight="bold" text-anchor="middle" fill="#0c2a5c" textLength="8.8" lengthAdjust="spacingAndGlyphs">123</text></svg><div class="t" style="left:15.8px">Time frame</div><div class="t" style="left:271.8px">4 Hours</div>
<div class="abs" style="left:269.6px;top:0;width:1px;height:100%;background:#3a93df"></div>
<svg class="abs" style="left:228px;top:2px" width="40" height="12" viewBox="0 0 40 12"><path d="M1.6 8.6L31 6.5" stroke="#e6a81c" stroke-width="1.9" fill="none" stroke-linecap="round"/><path d="M37 5.9L29.8 2.7L30.4 9.6z" fill="#e6a81c"/></svg>
</div>
<div class="row" style="top:52.22px"><svg class="ic" viewBox="0 0 13 13"><path d="M1.2 0.6h8.2l3 2.8v8c-.9 .8-1.5 1.3-2.5.4s-1.9-.5-2.9.4-2.1.6-2.9-.2-1.7-.4-2.9.6z" fill="url(#gb)" stroke="#5b97d6" stroke-width="0.9"/><path d="M9.4 0.6v2.8h3" fill="#dcecfb" stroke="#5b97d6" stroke-width="0.6"/><text x="6.4" y="9.3" font-size="6" font-weight="bold" text-anchor="middle" fill="#0c2a5c" textLength="8.8" lengthAdjust="spacingAndGlyphs">123</text></svg><div class="t" style="left:15.8px">Refresh After Ticks</div><div class="t" style="left:271.8px">50</div>
<div class="abs" style="left:269.6px;top:0;width:1px;height:100%;background:#f0f0f0"></div>
</div>
<div class="row g" style="top:68.58px"><svg class="ic" viewBox="0 0 13 13"><path d="M1.2 0.6h8.2l3 2.8v8c-.9 .8-1.5 1.3-2.5.4s-1.9-.5-2.9.4-2.1.6-2.9-.2-1.7-.4-2.9.6z" fill="url(#gb)" stroke="#5b97d6" stroke-width="0.9"/><path d="M9.4 0.6v2.8h3" fill="#dcecfb" stroke="#5b97d6" stroke-width="0.6"/><text x="6.4" y="9.3" font-size="6" font-weight="bold" text-anchor="middle" fill="#0c2a5c" textLength="8.8" lengthAdjust="spacingAndGlyphs">123</text></svg><div class="t" style="left:15.8px">Shift Bars</div><div class="t" style="left:271.8px">1</div>
<div class="abs" style="left:0;bottom:0;width:100%;height:0.9px;background:#dadada"></div><div class="abs" style="left:0;top:0;width:100%;height:0.9px;background:#e2e2e2"></div><div class="abs" style="left:269.6px;top:0;width:1px;height:100%;background:#f6f6f6"></div>
</div>
<div class="row" style="top:84.94px"><svg class="ic" viewBox="0 0 13 13"><path d="M1.2 0.6h8.2l3 2.8v8c-.9 .8-1.5 1.3-2.5.4s-1.9-.5-2.9.4-2.1.6-2.9-.2-1.7-.4-2.9.6z" fill="url(#gy)" stroke="#bfa92c" stroke-width="0.9"/><path d="M9.4 0.6v2.8h3" fill="#fbf3b0" stroke="#bfa92c" stroke-width="0.6"/><text x="6.3" y="9.4" font-size="8" font-weight="bold" text-anchor="middle" fill="#4a3c00" textLength="9.4" lengthAdjust="spacingAndGlyphs">ab</text></svg><div class="t" style="left:15.8px"><span style="letter-spacing:-0.7px;font-weight:bold;color:#333">—————</span></div><div class="t" style="left:271.8px">### General Calculation Settings:</div>
<div class="abs" style="left:269.6px;top:0;width:1px;height:100%;background:#f0f0f0"></div>
</div>
<div class="row g" style="top:101.30px"><svg class="ic" viewBox="0 0 13 13"><path d="M1.2 0.6h8.2l3 2.8v8c-.9 .8-1.5 1.3-2.5.4s-1.9-.5-2.9.4-2.1.6-2.9-.2-1.7-.4-2.9.6z" fill="url(#gb)" stroke="#5b97d6" stroke-width="0.9"/><path d="M9.4 0.6v2.8h3" fill="#dcecfb" stroke="#5b97d6" stroke-width="0.6"/><text x="6.4" y="9.3" font-size="6" font-weight="bold" text-anchor="middle" fill="#0c2a5c" textLength="8.8" lengthAdjust="spacingAndGlyphs">123</text></svg><div class="t" style="left:15.8px">Relative calculation backwards length (1-10)</div><div class="t" style="left:271.8px">6</div>
<div class="abs" style="left:0;bottom:0;width:100%;height:0.9px;background:#dadada"></div><div class="abs" style="left:0;top:0;width:100%;height:0.9px;background:#e2e2e2"></div><div class="abs" style="left:269.6px;top:0;width:1px;height:100%;background:#f6f6f6"></div>
</div>
<div class="row" style="top:117.66px"><svg class="ic" viewBox="0 0 13 13"><path d="M1.2 0.6h8.2l3 2.8v8c-.9 .8-1.5 1.3-2.5.4s-1.9-.5-2.9.4-2.1.6-2.9-.2-1.7-.4-2.9.6z" fill="url(#gb)" stroke="#5b97d6" stroke-width="0.9"/><path d="M9.4 0.6v2.8h3" fill="#dcecfb" stroke="#5b97d6" stroke-width="0.6"/><text x="6.4" y="9.3" font-size="6" font-weight="bold" text-anchor="middle" fill="#0c2a5c" textLength="8.8" lengthAdjust="spacingAndGlyphs">123</text></svg><div class="t" style="left:15.8px">Display Mode</div><div class="t" style="left:271.8px">Oscillator</div>
<div class="abs" style="left:269.6px;top:0;width:1px;height:100%;background:#f0f0f0"></div>
</div>
<div class="row g" style="top:134.02px"><svg class="ic" viewBox="0 0 13 13"><path d="M1.2 0.6h8.2l3 2.8v8c-.9 .8-1.5 1.3-2.5.4s-1.9-.5-2.9.4-2.1.6-2.9-.2-1.7-.4-2.9.6z" fill="url(#gb)" stroke="#5b97d6" stroke-width="0.9"/><path d="M9.4 0.6v2.8h3" fill="#dcecfb" stroke="#5b97d6" stroke-width="0.6"/><text x="6.4" y="9.3" font-size="6" font-weight="bold" text-anchor="middle" fill="#0c2a5c" textLength="8.8" lengthAdjust="spacingAndGlyphs">123</text></svg><div class="t" style="left:15.8px">Volume Display Mode</div><div class="t" style="left:271.8px">Bull/Bear Power</div>
<div class="abs" style="left:0;bottom:0;width:100%;height:0.9px;background:#dadada"></div><div class="abs" style="left:0;top:0;width:100%;height:0.9px;background:#e2e2e2"></div><div class="abs" style="left:269.6px;top:0;width:1px;height:100%;background:#f6f6f6"></div>
</div>
<div class="row" style="top:150.38px"><svg class="ic" viewBox="0 0 13 13"><path d="M1.2 0.6h8.2l3 2.8v8c-.9 .8-1.5 1.3-2.5.4s-1.9-.5-2.9.4-2.1.6-2.9-.2-1.7-.4-2.9.6z" fill="url(#gg)" stroke="#2aa838" stroke-width="0.9"/><path d="M9.4 0.6v2.8h3" fill="#c4f2c8" stroke="#2aa838" stroke-width="0.6"/><path d="M2.6 8.2h2.2l3.4-3.6M8 8.2h2.6" stroke="#0c5a16" stroke-width="1.1" fill="none"/></svg><div class="t" style="left:15.8px">Show Raw Tick Volume Background</div><div class="t" style="left:271.8px">false</div>
<div class="abs" style="left:269.6px;top:0;width:1px;height:100%;background:#f0f0f0"></div>
</div>
<div class="row g" style="top:166.74px"><svg class="ic" viewBox="0 0 13 13"><path d="M1.2 0.6h8.2l3 2.8v8c-.9 .8-1.5 1.3-2.5.4s-1.9-.5-2.9.4-2.1.6-2.9-.2-1.7-.4-2.9.6z" fill="url(#gg)" stroke="#2aa838" stroke-width="0.9"/><path d="M9.4 0.6v2.8h3" fill="#c4f2c8" stroke="#2aa838" stroke-width="0.6"/><path d="M2.6 8.2h2.2l3.4-3.6M8 8.2h2.6" stroke="#0c5a16" stroke-width="1.1" fill="none"/></svg><div class="t" style="left:15.8px">Show Smoothing Line</div><div class="t" style="left:271.8px">true</div>
<div class="abs" style="left:0;bottom:0;width:100%;height:0.9px;background:#dadada"></div><div class="abs" style="left:0;top:0;width:100%;height:0.9px;background:#e2e2e2"></div><div class="abs" style="left:269.6px;top:0;width:1px;height:100%;background:#f6f6f6"></div>
</div>
<div class="row" style="top:183.10px"><svg class="ic" viewBox="0 0 13 13"><path d="M1.2 0.6h8.2l3 2.8v8c-.9 .8-1.5 1.3-2.5.4s-1.9-.5-2.9.4-2.1.6-2.9-.2-1.7-.4-2.9.6z" fill="url(#gb)" stroke="#5b97d6" stroke-width="0.9"/><path d="M9.4 0.6v2.8h3" fill="#dcecfb" stroke="#5b97d6" stroke-width="0.6"/><text x="6.4" y="9.3" font-size="6" font-weight="bold" text-anchor="middle" fill="#0c2a5c" textLength="8.8" lengthAdjust="spacingAndGlyphs">123</text></svg><div class="t" style="left:15.8px">Maximum bars to calculate back</div><div class="t" style="left:271.8px">10000</div>
<div class="abs" style="left:269.6px;top:0;width:1px;height:100%;background:#f0f0f0"></div>
</div>
<div class="row g" style="top:199.46px"><svg class="ic" viewBox="0 0 13 13"><path d="M1.2 0.6h8.2l3 2.8v8c-.9 .8-1.5 1.3-2.5.4s-1.9-.5-2.9.4-2.1.6-2.9-.2-1.7-.4-2.9.6z" fill="url(#gy)" stroke="#bfa92c" stroke-width="0.9"/><path d="M9.4 0.6v2.8h3" fill="#fbf3b0" stroke="#bfa92c" stroke-width="0.6"/><text x="6.3" y="9.4" font-size="8" font-weight="bold" text-anchor="middle" fill="#4a3c00" textLength="9.4" lengthAdjust="spacingAndGlyphs">ab</text></svg><div class="t" style="left:15.8px"><span style="letter-spacing:-0.7px;font-weight:bold;color:#333">—————</span></div><div class="t" style="left:271.8px">### Oscillator/Delta Settings:</div>
<div class="abs" style="left:0;bottom:0;width:100%;height:0.9px;background:#dadada"></div><div class="abs" style="left:0;top:0;width:100%;height:0.9px;background:#e2e2e2"></div><div class="abs" style="left:269.6px;top:0;width:1px;height:100%;background:#f6f6f6"></div>
</div>
<div class="abs sb"><div class="abs" style="left:6.4px;top:14px;width:1.6px;height:38px;background:#8a8a8a;border-radius:1px"></div></div>
</div>
<div class="btn" style="left:579.3px;top:219.8px;width:84.5px;height:16.8px;"><span>Load</span></div>
<div class="btn" style="left:579.3px;top:246.6px;width:84.5px;height:16.8px;"><span>Save</span></div>
<div class="btn" style="left:477.0px;top:277.4px;width:61.0px;height:17.6px;border-color:#3f93dc;border-width:1.2px;"><span>OK</span></div>
<div class="btn" style="left:543.8px;top:277.4px;width:60.0px;height:17.6px;"><span>Cancel</span></div>
<div class="btn" style="left:610.0px;top:277.4px;width:60.0px;height:17.6px;"><span>Reset</span></div>
<svg class="abs" style="left:669.6px;top:293.8px" width="7" height="7" viewBox="0 0 7 7"><g fill="#b4b4b4"><rect x="4.8" y="0.6" width="1.2" height="1.2"/><rect x="2.7" y="2.7" width="1.2" height="1.2"/><rect x="4.8" y="2.7" width="1.2" height="1.2"/><rect x="0.6" y="4.8" width="1.2" height="1.2"/><rect x="2.7" y="4.8" width="1.2" height="1.2"/><rect x="4.8" y="4.8" width="1.2" height="1.2"/></g></svg>
</div>
</body></html>
